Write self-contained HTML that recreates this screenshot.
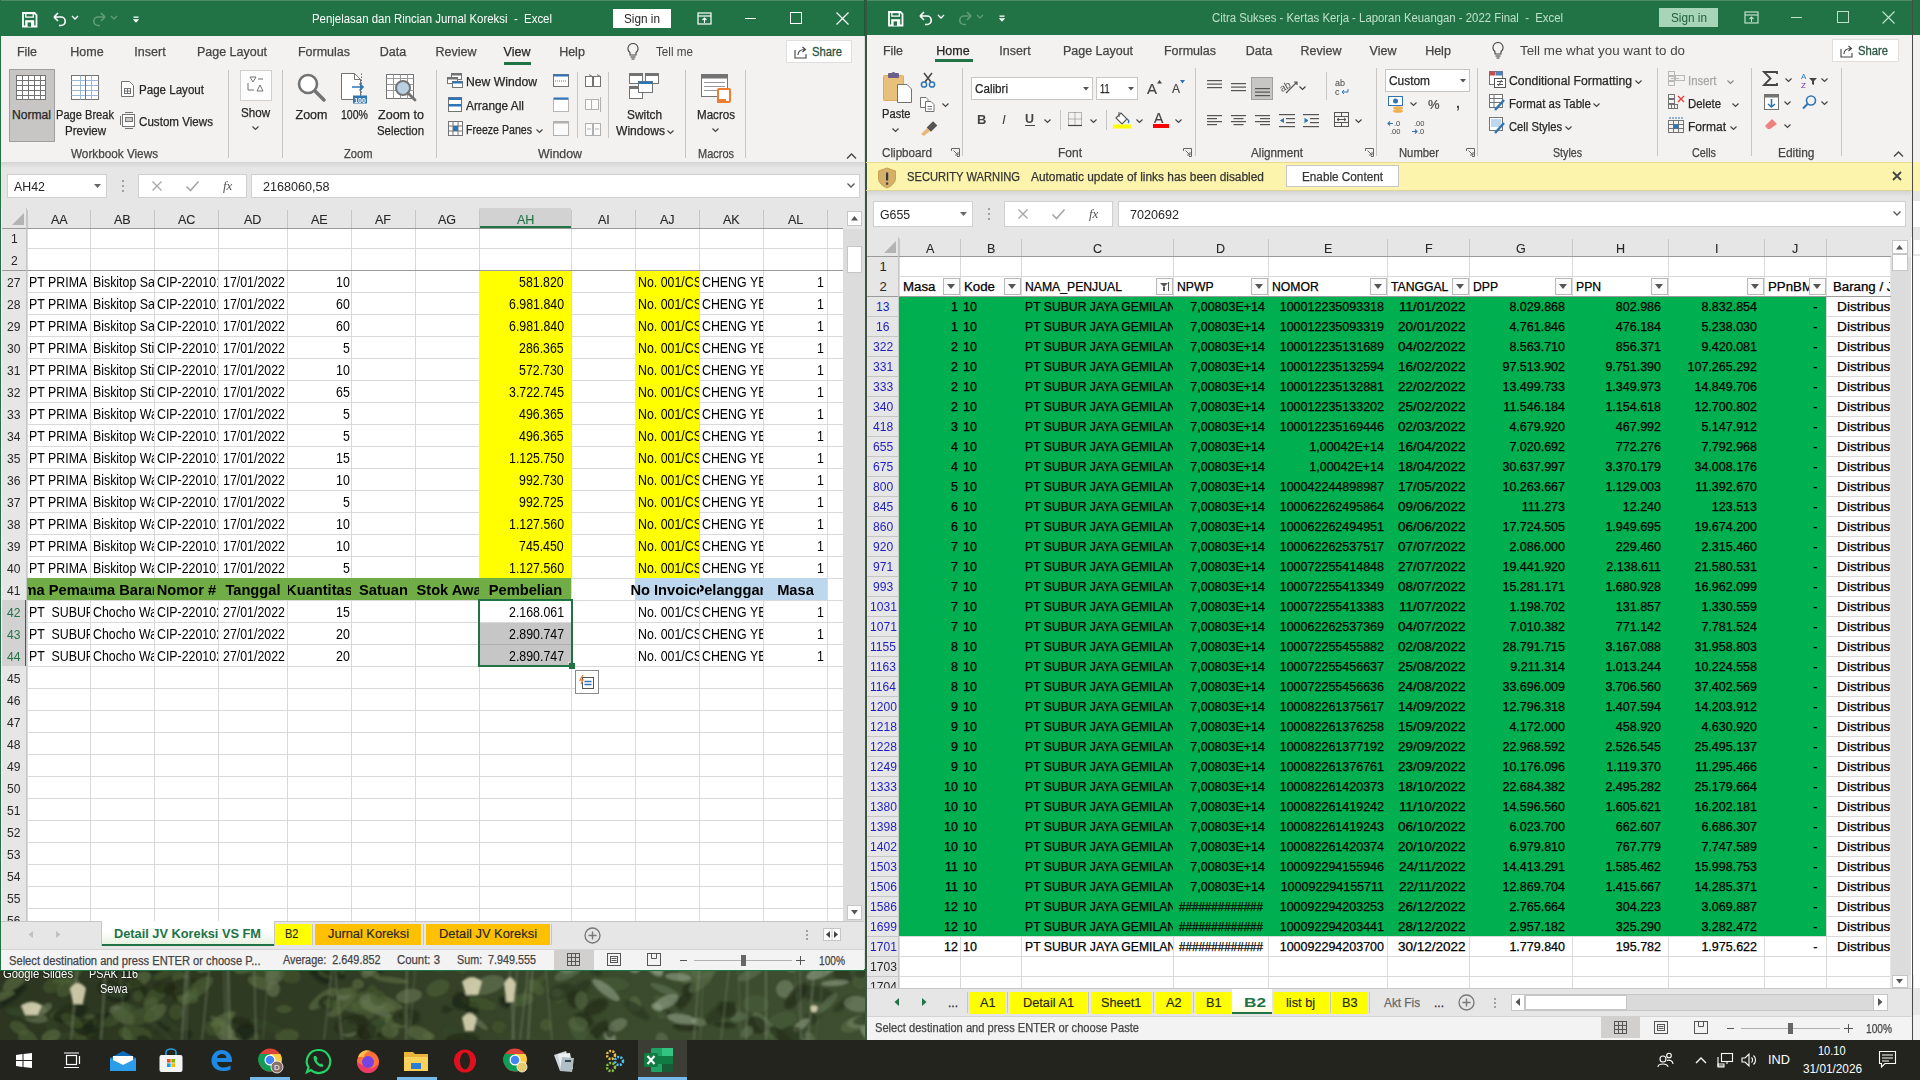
<!DOCTYPE html><html><head><meta charset="utf-8"><style>
html,body{margin:0;padding:0;width:1920px;height:1080px;overflow:hidden;background:#2b3a2a;}
body{position:relative;font-family:"Liberation Sans",sans-serif;}
div{position:absolute;box-sizing:border-box;}
.t{white-space:pre;line-height:1.149;}
svg{position:absolute;overflow:visible;}
</style></head><body>
<svg style="left:0;top:960px" width="870" height="80"><defs><filter id="bl"><feGaussianBlur stdDeviation="0.8"/></filter><linearGradient id="wg" x1="0" x2="1"><stop offset="0" stop-color="#2c3620"/><stop offset="0.4" stop-color="#313c24"/><stop offset="0.7" stop-color="#3a4a2c"/><stop offset="1" stop-color="#3e4e30"/></linearGradient></defs><rect width="870" height="80" fill="url(#wg)"/><g filter="url(#bl)"><ellipse cx="394" cy="47" rx="17" ry="6" fill="#5e7044" opacity="0.6" transform="rotate(36 394 47)"/><ellipse cx="165" cy="65" rx="11" ry="7" fill="#1e2814" opacity="0.6" transform="rotate(-41 165 65)"/><ellipse cx="264" cy="12" rx="16" ry="7" fill="#45582f" opacity="0.6" transform="rotate(10 264 12)"/><ellipse cx="345" cy="39" rx="15" ry="7" fill="#5e7044" opacity="0.6" transform="rotate(-48 345 39)"/><ellipse cx="460" cy="9" rx="7" ry="4" fill="#45582f" opacity="0.6" transform="rotate(28 460 9)"/><ellipse cx="284" cy="49" rx="8" ry="4" fill="#4e6238" opacity="0.6" transform="rotate(-0 284 49)"/><ellipse cx="576" cy="39" rx="9" ry="9" fill="#1c2614" opacity="0.6" transform="rotate(-42 576 39)"/><ellipse cx="221" cy="62" rx="12" ry="3" fill="#5e7044" opacity="0.6" transform="rotate(27 221 62)"/><ellipse cx="348" cy="68" rx="10" ry="9" fill="#6a7a58" opacity="0.6" transform="rotate(18 348 68)"/><ellipse cx="186" cy="75" rx="6" ry="5" fill="#182010" opacity="0.6" transform="rotate(-10 186 75)"/><ellipse cx="64" cy="52" rx="15" ry="5" fill="#45582f" opacity="0.6" transform="rotate(-19 64 52)"/><ellipse cx="13" cy="36" rx="17" ry="4" fill="#182010" opacity="0.6" transform="rotate(-40 13 36)"/><ellipse cx="52" cy="65" rx="7" ry="6" fill="#34462a" opacity="0.6" transform="rotate(1 52 65)"/><ellipse cx="857" cy="63" rx="10" ry="5" fill="#92a288" opacity="0.6" transform="rotate(-8 857 63)"/><ellipse cx="185" cy="25" rx="18" ry="8" fill="#4e6238" opacity="0.6" transform="rotate(50 185 25)"/><ellipse cx="17" cy="19" rx="18" ry="7" fill="#5e7044" opacity="0.6" transform="rotate(-40 17 19)"/><ellipse cx="861" cy="21" rx="8" ry="8" fill="#4a5e3a" opacity="0.6" transform="rotate(33 861 21)"/><ellipse cx="336" cy="11" rx="8" ry="7" fill="#45582f" opacity="0.6" transform="rotate(10 336 11)"/><ellipse cx="323" cy="39" rx="17" ry="6" fill="#5e7044" opacity="0.6" transform="rotate(-36 323 39)"/><ellipse cx="336" cy="52" rx="9" ry="4" fill="#5e7044" opacity="0.6" transform="rotate(-25 336 52)"/><ellipse cx="165" cy="60" rx="17" ry="4" fill="#34462a" opacity="0.6" transform="rotate(38 165 60)"/><ellipse cx="525" cy="37" rx="6" ry="3" fill="#4e6238" opacity="0.6" transform="rotate(-26 525 37)"/><ellipse cx="613" cy="24" rx="16" ry="7" fill="#4a5e3a" opacity="0.6" transform="rotate(2 613 24)"/><ellipse cx="808" cy="78" rx="7" ry="6" fill="#617556" opacity="0.6" transform="rotate(35 808 78)"/><ellipse cx="534" cy="26" rx="17" ry="4" fill="#45582f" opacity="0.6" transform="rotate(-43 534 26)"/><ellipse cx="358" cy="24" rx="6" ry="5" fill="#5e7044" opacity="0.6" transform="rotate(7 358 24)"/><ellipse cx="114" cy="32" rx="17" ry="9" fill="#182010" opacity="0.6" transform="rotate(23 114 32)"/><ellipse cx="454" cy="76" rx="13" ry="9" fill="#34462a" opacity="0.6" transform="rotate(41 454 76)"/><ellipse cx="610" cy="77" rx="5" ry="7" fill="#92a288" opacity="0.6" transform="rotate(-43 610 77)"/><ellipse cx="271" cy="15" rx="6" ry="6" fill="#4e6238" opacity="0.6" transform="rotate(24 271 15)"/><ellipse cx="783" cy="60" rx="14" ry="8" fill="#4a5e3a" opacity="0.6" transform="rotate(-15 783 60)"/><ellipse cx="596" cy="73" rx="16" ry="6" fill="#1c2614" opacity="0.6" transform="rotate(-47 596 73)"/><ellipse cx="435" cy="6" rx="14" ry="5" fill="#45582f" opacity="0.6" transform="rotate(11 435 6)"/><ellipse cx="70" cy="53" rx="18" ry="8" fill="#182010" opacity="0.6" transform="rotate(-17 70 53)"/><ellipse cx="813" cy="57" rx="11" ry="6" fill="#26331c" opacity="0.6" transform="rotate(-42 813 57)"/><ellipse cx="653" cy="7" rx="13" ry="6" fill="#7a8a6e" opacity="0.6" transform="rotate(46 653 7)"/><ellipse cx="98" cy="63" rx="14" ry="6" fill="#45582f" opacity="0.6" transform="rotate(-13 98 63)"/><ellipse cx="125" cy="51" rx="12" ry="8" fill="#4e6238" opacity="0.6" transform="rotate(16 125 51)"/><ellipse cx="384" cy="72" rx="9" ry="7" fill="#1e2814" opacity="0.6" transform="rotate(13 384 72)"/><ellipse cx="699" cy="62" rx="8" ry="4" fill="#7a8a6e" opacity="0.6" transform="rotate(8 699 62)"/><ellipse cx="275" cy="15" rx="11" ry="8" fill="#6a7a58" opacity="0.6" transform="rotate(-46 275 15)"/><ellipse cx="56" cy="79" rx="16" ry="4" fill="#34462a" opacity="0.6" transform="rotate(-22 56 79)"/><ellipse cx="186" cy="36" rx="13" ry="6" fill="#4e6238" opacity="0.6" transform="rotate(22 186 36)"/><ellipse cx="732" cy="52" rx="9" ry="8" fill="#4a5e3a" opacity="0.6" transform="rotate(37 732 52)"/><ellipse cx="36" cy="58" rx="12" ry="5" fill="#6a7a58" opacity="0.6" transform="rotate(6 36 58)"/><ellipse cx="558" cy="35" rx="7" ry="8" fill="#4e6238" opacity="0.6" transform="rotate(-26 558 35)"/><ellipse cx="123" cy="9" rx="13" ry="6" fill="#182010" opacity="0.6" transform="rotate(4 123 9)"/><ellipse cx="557" cy="33" rx="6" ry="4" fill="#6a7a58" opacity="0.6" transform="rotate(-2 557 33)"/><ellipse cx="155" cy="6" rx="11" ry="7" fill="#1e2814" opacity="0.6" transform="rotate(-27 155 6)"/><ellipse cx="677" cy="45" rx="17" ry="6" fill="#1c2614" opacity="0.6" transform="rotate(-34 677 45)"/><ellipse cx="738" cy="57" rx="8" ry="5" fill="#617556" opacity="0.6" transform="rotate(-11 738 57)"/><ellipse cx="392" cy="20" rx="17" ry="3" fill="#5e7044" opacity="0.6" transform="rotate(7 392 20)"/><ellipse cx="765" cy="65" rx="17" ry="6" fill="#617556" opacity="0.6" transform="rotate(48 765 65)"/><ellipse cx="86" cy="70" rx="15" ry="9" fill="#45582f" opacity="0.6" transform="rotate(-29 86 70)"/><ellipse cx="783" cy="79" rx="18" ry="6" fill="#1c2614" opacity="0.6" transform="rotate(43 783 79)"/><ellipse cx="228" cy="59" rx="5" ry="6" fill="#45582f" opacity="0.6" transform="rotate(-6 228 59)"/><ellipse cx="479" cy="63" rx="11" ry="3" fill="#6a7a58" opacity="0.6" transform="rotate(37 479 63)"/><ellipse cx="373" cy="8" rx="12" ry="7" fill="#1e2814" opacity="0.6" transform="rotate(-3 373 8)"/><ellipse cx="870" cy="73" rx="12" ry="7" fill="#92a288" opacity="0.6" transform="rotate(45 870 73)"/><ellipse cx="429" cy="76" rx="6" ry="4" fill="#5e7044" opacity="0.6" transform="rotate(6 429 76)"/><ellipse cx="723" cy="47" rx="7" ry="6" fill="#26331c" opacity="0.6" transform="rotate(-24 723 47)"/><ellipse cx="584" cy="77" rx="16" ry="7" fill="#4a5e3a" opacity="0.6" transform="rotate(35 584 77)"/><ellipse cx="843" cy="44" rx="12" ry="4" fill="#26331c" opacity="0.6" transform="rotate(-39 843 44)"/><ellipse cx="4" cy="33" rx="12" ry="3" fill="#34462a" opacity="0.6" transform="rotate(4 4 33)"/><ellipse cx="861" cy="14" rx="6" ry="4" fill="#26331c" opacity="0.6" transform="rotate(-4 861 14)"/><ellipse cx="801" cy="65" rx="10" ry="4" fill="#92a288" opacity="0.6" transform="rotate(-37 801 65)"/><ellipse cx="377" cy="66" rx="17" ry="6" fill="#4e6238" opacity="0.6" transform="rotate(-39 377 66)"/><ellipse cx="365" cy="7" rx="8" ry="7" fill="#45582f" opacity="0.6" transform="rotate(-46 365 7)"/><ellipse cx="135" cy="6" rx="9" ry="7" fill="#1e2814" opacity="0.6" transform="rotate(12 135 6)"/><ellipse cx="91" cy="60" rx="7" ry="6" fill="#4e6238" opacity="0.6" transform="rotate(22 91 60)"/><ellipse cx="610" cy="71" rx="5" ry="7" fill="#1c2614" opacity="0.6" transform="rotate(3 610 71)"/><ellipse cx="139" cy="20" rx="13" ry="7" fill="#5e7044" opacity="0.6" transform="rotate(-28 139 20)"/><ellipse cx="472" cy="49" rx="7" ry="8" fill="#182010" opacity="0.6" transform="rotate(31 472 49)"/><ellipse cx="785" cy="29" rx="9" ry="9" fill="#7a8a6e" opacity="0.6" transform="rotate(28 785 29)"/><ellipse cx="169" cy="12" rx="17" ry="4" fill="#45582f" opacity="0.6" transform="rotate(-24 169 12)"/><ellipse cx="84" cy="67" rx="10" ry="8" fill="#1e2814" opacity="0.6" transform="rotate(-30 84 67)"/><ellipse cx="546" cy="65" rx="6" ry="6" fill="#4e6238" opacity="0.6" transform="rotate(41 546 65)"/><ellipse cx="842" cy="14" rx="12" ry="8" fill="#26331c" opacity="0.6" transform="rotate(50 842 14)"/><ellipse cx="725" cy="65" rx="11" ry="3" fill="#1c2614" opacity="0.6" transform="rotate(5 725 65)"/><ellipse cx="448" cy="48" rx="7" ry="4" fill="#1e2814" opacity="0.6" transform="rotate(-33 448 48)"/><ellipse cx="137" cy="26" rx="14" ry="6" fill="#1e2814" opacity="0.6" transform="rotate(45 137 26)"/><ellipse cx="402" cy="62" rx="9" ry="6" fill="#5e7044" opacity="0.6" transform="rotate(-15 402 62)"/><ellipse cx="183" cy="33" rx="13" ry="3" fill="#1e2814" opacity="0.6" transform="rotate(-32 183 33)"/><ellipse cx="395" cy="60" rx="10" ry="4" fill="#1e2814" opacity="0.6" transform="rotate(-41 395 60)"/><ellipse cx="689" cy="29" rx="6" ry="8" fill="#1c2614" opacity="0.6" transform="rotate(41 689 29)"/><ellipse cx="817" cy="48" rx="7" ry="7" fill="#4a5e3a" opacity="0.6" transform="rotate(30 817 48)"/><ellipse cx="225" cy="73" rx="15" ry="8" fill="#6a7a58" opacity="0.6" transform="rotate(43 225 73)"/><ellipse cx="116" cy="30" rx="12" ry="5" fill="#34462a" opacity="0.6" transform="rotate(27 116 30)"/><ellipse cx="353" cy="59" rx="6" ry="5" fill="#34462a" opacity="0.6" transform="rotate(-40 353 59)"/><ellipse cx="773" cy="79" rx="17" ry="3" fill="#4a5e3a" opacity="0.6" transform="rotate(44 773 79)"/><ellipse cx="580" cy="30" rx="14" ry="6" fill="#26331c" opacity="0.6" transform="rotate(-42 580 30)"/><ellipse cx="448" cy="42" rx="8" ry="4" fill="#34462a" opacity="0.6" transform="rotate(48 448 42)"/><ellipse cx="20" cy="51" rx="15" ry="5" fill="#34462a" opacity="0.6" transform="rotate(0 20 51)"/><ellipse cx="662" cy="54" rx="5" ry="5" fill="#4a5e3a" opacity="0.6" transform="rotate(41 662 54)"/><ellipse cx="479" cy="43" rx="18" ry="6" fill="#45582f" opacity="0.6" transform="rotate(14 479 43)"/><ellipse cx="704" cy="11" rx="13" ry="8" fill="#5a6e4a" opacity="0.6" transform="rotate(-11 704 11)"/><ellipse cx="817" cy="34" rx="18" ry="8" fill="#26331c" opacity="0.6" transform="rotate(11 817 34)"/><ellipse cx="51" cy="76" rx="10" ry="6" fill="#5e7044" opacity="0.6" transform="rotate(-19 51 76)"/><ellipse cx="461" cy="41" rx="9" ry="9" fill="#182010" opacity="0.6" transform="rotate(22 461 41)"/><ellipse cx="258" cy="6" rx="8" ry="3" fill="#1e2814" opacity="0.6" transform="rotate(-9 258 6)"/><ellipse cx="595" cy="9" rx="9" ry="5" fill="#26331c" opacity="0.6" transform="rotate(49 595 9)"/><ellipse cx="822" cy="11" rx="17" ry="6" fill="#92a288" opacity="0.6" transform="rotate(-25 822 11)"/><ellipse cx="657" cy="8" rx="6" ry="8" fill="#92a288" opacity="0.6" transform="rotate(-36 657 8)"/><ellipse cx="835" cy="23" rx="14" ry="3" fill="#92a288" opacity="0.6" transform="rotate(-4 835 23)"/><ellipse cx="177" cy="9" rx="12" ry="4" fill="#34462a" opacity="0.6" transform="rotate(-36 177 9)"/><ellipse cx="363" cy="50" rx="13" ry="7" fill="#4e6238" opacity="0.6" transform="rotate(28 363 50)"/><ellipse cx="462" cy="80" rx="17" ry="7" fill="#1e2814" opacity="0.6" transform="rotate(-2 462 80)"/><ellipse cx="438" cy="28" rx="12" ry="8" fill="#4e6238" opacity="0.6" transform="rotate(-23 438 28)"/><ellipse cx="596" cy="47" rx="13" ry="7" fill="#1c2614" opacity="0.6" transform="rotate(-26 596 47)"/><ellipse cx="828" cy="43" rx="13" ry="4" fill="#617556" opacity="0.6" transform="rotate(-46 828 43)"/><ellipse cx="53" cy="25" rx="11" ry="7" fill="#45582f" opacity="0.6" transform="rotate(-28 53 25)"/><ellipse cx="242" cy="62" rx="17" ry="4" fill="#1e2814" opacity="0.6" transform="rotate(13 242 62)"/><ellipse cx="325" cy="41" rx="8" ry="5" fill="#182010" opacity="0.6" transform="rotate(-37 325 41)"/><ellipse cx="757" cy="65" rx="11" ry="8" fill="#1c2614" opacity="0.6" transform="rotate(27 757 65)"/><ellipse cx="185" cy="37" rx="8" ry="8" fill="#4e6238" opacity="0.6" transform="rotate(-35 185 37)"/><ellipse cx="728" cy="50" rx="9" ry="8" fill="#1c2614" opacity="0.6" transform="rotate(42 728 50)"/><ellipse cx="372" cy="33" rx="6" ry="8" fill="#45582f" opacity="0.6" transform="rotate(4 372 33)"/><ellipse cx="376" cy="48" rx="16" ry="6" fill="#6a7a58" opacity="0.6" transform="rotate(28 376 48)"/><ellipse cx="66" cy="21" rx="14" ry="3" fill="#4e6238" opacity="0.6" transform="rotate(-1 66 21)"/><ellipse cx="665" cy="30" rx="16" ry="4" fill="#617556" opacity="0.6" transform="rotate(23 665 30)"/><ellipse cx="319" cy="14" rx="14" ry="6" fill="#182010" opacity="0.6" transform="rotate(41 319 14)"/><ellipse cx="381" cy="65" rx="9" ry="5" fill="#34462a" opacity="0.6" transform="rotate(47 381 65)"/><ellipse cx="635" cy="44" rx="6" ry="8" fill="#5a6e4a" opacity="0.6" transform="rotate(-14 635 44)"/><ellipse cx="344" cy="34" rx="8" ry="6" fill="#6a7a58" opacity="0.6" transform="rotate(-11 344 34)"/><ellipse cx="135" cy="49" rx="7" ry="4" fill="#34462a" opacity="0.6" transform="rotate(38 135 49)"/><ellipse cx="245" cy="7" rx="12" ry="6" fill="#5e7044" opacity="0.6" transform="rotate(-20 245 7)"/><ellipse cx="19" cy="68" rx="10" ry="6" fill="#4e6238" opacity="0.6" transform="rotate(29 19 68)"/><ellipse cx="73" cy="11" rx="15" ry="8" fill="#45582f" opacity="0.6" transform="rotate(-47 73 11)"/><ellipse cx="569" cy="12" rx="16" ry="6" fill="#617556" opacity="0.6" transform="rotate(-28 569 12)"/><ellipse cx="666" cy="44" rx="15" ry="5" fill="#4a5e3a" opacity="0.6" transform="rotate(31 666 44)"/><ellipse cx="290" cy="15" rx="11" ry="8" fill="#45582f" opacity="0.6" transform="rotate(21 290 15)"/><ellipse cx="796" cy="36" rx="16" ry="7" fill="#1c2614" opacity="0.6" transform="rotate(-50 796 36)"/><ellipse cx="329" cy="12" rx="11" ry="6" fill="#45582f" opacity="0.6" transform="rotate(2 329 12)"/><ellipse cx="618" cy="65" rx="10" ry="6" fill="#7a8a6e" opacity="0.6" transform="rotate(-25 618 65)"/><ellipse cx="141" cy="53" rx="14" ry="5" fill="#34462a" opacity="0.6" transform="rotate(-8 141 53)"/><ellipse cx="254" cy="78" rx="6" ry="5" fill="#45582f" opacity="0.6" transform="rotate(-20 254 78)"/><ellipse cx="135" cy="74" rx="17" ry="8" fill="#45582f" opacity="0.6" transform="rotate(8 135 74)"/><ellipse cx="791" cy="8" rx="6" ry="4" fill="#7a8a6e" opacity="0.6" transform="rotate(9 791 8)"/><ellipse cx="522" cy="40" rx="12" ry="6" fill="#4e6238" opacity="0.6" transform="rotate(-10 522 40)"/><ellipse cx="792" cy="75" rx="13" ry="9" fill="#26331c" opacity="0.6" transform="rotate(-2 792 75)"/><ellipse cx="227" cy="72" rx="17" ry="5" fill="#5e7044" opacity="0.6" transform="rotate(27 227 72)"/><ellipse cx="80" cy="70" rx="10" ry="4" fill="#1e2814" opacity="0.6" transform="rotate(30 80 70)"/><ellipse cx="335" cy="45" rx="12" ry="5" fill="#45582f" opacity="0.6" transform="rotate(16 335 45)"/><ellipse cx="207" cy="6" rx="11" ry="5" fill="#6a7a58" opacity="0.6" transform="rotate(-25 207 6)"/><ellipse cx="367" cy="71" rx="10" ry="8" fill="#1e2814" opacity="0.6" transform="rotate(-24 367 71)"/><ellipse cx="756" cy="44" rx="13" ry="9" fill="#4a5e3a" opacity="0.6" transform="rotate(2 756 44)"/><ellipse cx="46" cy="48" rx="7" ry="4" fill="#6a7a58" opacity="0.6" transform="rotate(-35 46 48)"/><ellipse cx="112" cy="31" rx="13" ry="6" fill="#34462a" opacity="0.6" transform="rotate(19 112 31)"/><ellipse cx="72" cy="61" rx="12" ry="6" fill="#45582f" opacity="0.6" transform="rotate(29 72 61)"/><ellipse cx="363" cy="74" rx="6" ry="8" fill="#1e2814" opacity="0.6" transform="rotate(-46 363 74)"/><ellipse cx="359" cy="42" rx="17" ry="9" fill="#4e6238" opacity="0.6" transform="rotate(-19 359 42)"/><ellipse cx="66" cy="28" rx="11" ry="7" fill="#4e6238" opacity="0.6" transform="rotate(-43 66 28)"/><ellipse cx="122" cy="55" rx="14" ry="7" fill="#6a7a58" opacity="0.6" transform="rotate(33 122 55)"/><ellipse cx="569" cy="6" rx="10" ry="7" fill="#7a8a6e" opacity="0.6" transform="rotate(-21 569 6)"/><ellipse cx="99" cy="63" rx="16" ry="8" fill="#182010" opacity="0.6" transform="rotate(-29 99 63)"/><ellipse cx="536" cy="27" rx="10" ry="6" fill="#4e6238" opacity="0.6" transform="rotate(45 536 27)"/><ellipse cx="657" cy="47" rx="6" ry="4" fill="#92a288" opacity="0.6" transform="rotate(23 657 47)"/><ellipse cx="287" cy="76" rx="12" ry="7" fill="#4e6238" opacity="0.6" transform="rotate(-5 287 76)"/><ellipse cx="333" cy="13" rx="13" ry="4" fill="#182010" opacity="0.6" transform="rotate(21 333 13)"/><ellipse cx="156" cy="35" rx="16" ry="7" fill="#45582f" opacity="0.6" transform="rotate(-40 156 35)"/><ellipse cx="28" cy="79" rx="11" ry="8" fill="#4e6238" opacity="0.6" transform="rotate(42 28 79)"/><ellipse cx="372" cy="43" rx="13" ry="8" fill="#6a7a58" opacity="0.6" transform="rotate(19 372 43)"/><ellipse cx="420" cy="74" rx="13" ry="7" fill="#5e7044" opacity="0.6" transform="rotate(20 420 74)"/><ellipse cx="854" cy="64" rx="14" ry="7" fill="#5a6e4a" opacity="0.6" transform="rotate(-24 854 64)"/><ellipse cx="164" cy="28" rx="11" ry="6" fill="#1e2814" opacity="0.6" transform="rotate(1 164 28)"/><ellipse cx="686" cy="67" rx="13" ry="4" fill="#1c2614" opacity="0.6" transform="rotate(4 686 67)"/><ellipse cx="260" cy="23" rx="13" ry="6" fill="#5e7044" opacity="0.6" transform="rotate(21 260 23)"/><ellipse cx="858" cy="44" rx="14" ry="8" fill="#7a8a6e" opacity="0.6" transform="rotate(7 858 44)"/><ellipse cx="23" cy="54" rx="15" ry="4" fill="#34462a" opacity="0.6" transform="rotate(8 23 54)"/><ellipse cx="606" cy="30" rx="17" ry="5" fill="#92a288" opacity="0.6" transform="rotate(38 606 30)"/><ellipse cx="393" cy="60" rx="8" ry="6" fill="#5e7044" opacity="0.6" transform="rotate(6 393 60)"/><ellipse cx="488" cy="25" rx="17" ry="9" fill="#6a7a58" opacity="0.6" transform="rotate(-17 488 25)"/><ellipse cx="127" cy="75" rx="5" ry="7" fill="#4e6238" opacity="0.6" transform="rotate(-26 127 75)"/><ellipse cx="499" cy="67" rx="7" ry="6" fill="#45582f" opacity="0.6" transform="rotate(-5 499 67)"/><ellipse cx="351" cy="64" rx="17" ry="9" fill="#1e2814" opacity="0.6" transform="rotate(-19 351 64)"/><ellipse cx="584" cy="60" rx="10" ry="7" fill="#1c2614" opacity="0.6" transform="rotate(26 584 60)"/><ellipse cx="138" cy="36" rx="5" ry="6" fill="#45582f" opacity="0.6" transform="rotate(7 138 36)"/><ellipse cx="151" cy="44" rx="8" ry="6" fill="#4e6238" opacity="0.6" transform="rotate(-45 151 44)"/><ellipse cx="682" cy="59" rx="15" ry="5" fill="#92a288" opacity="0.6" transform="rotate(10 682 59)"/><ellipse cx="409" cy="36" rx="13" ry="7" fill="#6a7a58" opacity="0.6" transform="rotate(-9 409 36)"/><ellipse cx="245" cy="72" rx="11" ry="8" fill="#182010" opacity="0.6" transform="rotate(-9 245 72)"/><ellipse cx="378" cy="47" rx="17" ry="6" fill="#5e7044" opacity="0.6" transform="rotate(2 378 47)"/><ellipse cx="366" cy="7" rx="17" ry="5" fill="#5e7044" opacity="0.6" transform="rotate(40 366 7)"/><ellipse cx="637" cy="50" rx="15" ry="5" fill="#26331c" opacity="0.6" transform="rotate(38 637 50)"/><ellipse cx="213" cy="68" rx="8" ry="8" fill="#45582f" opacity="0.6" transform="rotate(-2 213 68)"/><ellipse cx="92" cy="73" rx="12" ry="7" fill="#1e2814" opacity="0.6" transform="rotate(38 92 73)"/><ellipse cx="869" cy="60" rx="16" ry="5" fill="#26331c" opacity="0.6" transform="rotate(-8 869 60)"/><ellipse cx="701" cy="22" rx="15" ry="6" fill="#5a6e4a" opacity="0.6" transform="rotate(-40 701 22)"/><ellipse cx="689" cy="14" rx="12" ry="9" fill="#5a6e4a" opacity="0.6" transform="rotate(-20 689 14)"/><ellipse cx="634" cy="7" rx="7" ry="6" fill="#92a288" opacity="0.6" transform="rotate(32 634 7)"/><ellipse cx="346" cy="32" rx="13" ry="3" fill="#45582f" opacity="0.6" transform="rotate(-5 346 32)"/><ellipse cx="273" cy="29" rx="7" ry="8" fill="#6a7a58" opacity="0.6" transform="rotate(-3 273 29)"/><ellipse cx="180" cy="27" rx="17" ry="8" fill="#1e2814" opacity="0.6" transform="rotate(-18 180 27)"/><ellipse cx="747" cy="72" rx="5" ry="7" fill="#617556" opacity="0.6" transform="rotate(50 747 72)"/><ellipse cx="176" cy="52" rx="7" ry="8" fill="#45582f" opacity="0.6" transform="rotate(15 176 52)"/><ellipse cx="266" cy="66" rx="17" ry="5" fill="#34462a" opacity="0.6" transform="rotate(21 266 66)"/><ellipse cx="117" cy="57" rx="17" ry="6" fill="#45582f" opacity="0.6" transform="rotate(-33 117 57)"/><ellipse cx="750" cy="14" rx="14" ry="5" fill="#617556" opacity="0.6" transform="rotate(-26 750 14)"/><ellipse cx="578" cy="64" rx="10" ry="7" fill="#5a6e4a" opacity="0.6" transform="rotate(9 578 64)"/><ellipse cx="199" cy="28" rx="17" ry="7" fill="#4e6238" opacity="0.6" transform="rotate(-37 199 28)"/><ellipse cx="581" cy="40" rx="6" ry="9" fill="#5a6e4a" opacity="0.6" transform="rotate(3 581 40)"/><ellipse cx="39" cy="50" rx="9" ry="5" fill="#6a7a58" opacity="0.6" transform="rotate(7 39 50)"/><ellipse cx="143" cy="79" rx="7" ry="4" fill="#182010" opacity="0.6" transform="rotate(5 143 79)"/><ellipse cx="162" cy="72" rx="18" ry="3" fill="#34462a" opacity="0.6" transform="rotate(42 162 72)"/><ellipse cx="509" cy="5" rx="17" ry="3" fill="#45582f" opacity="0.6" transform="rotate(6 509 5)"/><ellipse cx="561" cy="32" rx="14" ry="8" fill="#26331c" opacity="0.6" transform="rotate(-21 561 32)"/><ellipse cx="720" cy="53" rx="18" ry="7" fill="#26331c" opacity="0.6" transform="rotate(-33 720 53)"/><ellipse cx="678" cy="17" rx="13" ry="4" fill="#92a288" opacity="0.6" transform="rotate(5 678 17)"/><ellipse cx="223" cy="59" rx="14" ry="5" fill="#5e7044" opacity="0.6" transform="rotate(-28 223 59)"/><ellipse cx="505" cy="42" rx="5" ry="7" fill="#182010" opacity="0.6" transform="rotate(-45 505 42)"/><ellipse cx="390" cy="71" rx="9" ry="7" fill="#5e7044" opacity="0.6" transform="rotate(-0 390 71)"/><ellipse cx="378" cy="38" rx="8" ry="8" fill="#45582f" opacity="0.6" transform="rotate(-39 378 38)"/><ellipse cx="155" cy="53" rx="13" ry="7" fill="#5e7044" opacity="0.6" transform="rotate(-35 155 53)"/><ellipse cx="271" cy="8" rx="9" ry="7" fill="#5e7044" opacity="0.6" transform="rotate(28 271 8)"/><ellipse cx="666" cy="42" rx="13" ry="6" fill="#92a288" opacity="0.6" transform="rotate(-25 666 42)"/><ellipse cx="139" cy="57" rx="16" ry="8" fill="#45582f" opacity="0.6" transform="rotate(-18 139 57)"/><ellipse cx="406" cy="57" rx="14" ry="9" fill="#1e2814" opacity="0.6" transform="rotate(-1 406 57)"/><ellipse cx="662" cy="79" rx="7" ry="6" fill="#617556" opacity="0.6" transform="rotate(49 662 79)"/><ellipse cx="3" cy="36" rx="12" ry="4" fill="#5e7044" opacity="0.6" transform="rotate(-20 3 36)"/><ellipse cx="369" cy="11" rx="5" ry="9" fill="#6a7a58" opacity="0.6" transform="rotate(48 369 11)"/><line x1="533" y1="0" x2="528" y2="80" stroke="#7f8d72" stroke-width="2.3" opacity="0.45"/><line x1="210" y1="0" x2="202" y2="80" stroke="#7f8d72" stroke-width="1.8" opacity="0.45"/><line x1="269" y1="0" x2="263" y2="80" stroke="#55654a" stroke-width="1.7" opacity="0.45"/><line x1="509" y1="0" x2="514" y2="80" stroke="#6d7d60" stroke-width="2.4" opacity="0.45"/><line x1="793" y1="0" x2="802" y2="80" stroke="#55654a" stroke-width="1.8" opacity="0.45"/><line x1="748" y1="0" x2="746" y2="80" stroke="#6d7d60" stroke-width="2.7" opacity="0.45"/><line x1="187" y1="0" x2="182" y2="80" stroke="#7f8d72" stroke-width="2.7" opacity="0.45"/><line x1="700" y1="0" x2="694" y2="80" stroke="#7f8d72" stroke-width="1.8" opacity="0.45"/><line x1="407" y1="0" x2="406" y2="80" stroke="#7f8d72" stroke-width="2.2" opacity="0.45"/><line x1="545" y1="0" x2="552" y2="80" stroke="#6d7d60" stroke-width="1.8" opacity="0.45"/><line x1="333" y1="0" x2="324" y2="80" stroke="#6d7d60" stroke-width="1.9" opacity="0.45"/><line x1="825" y1="0" x2="816" y2="80" stroke="#55654a" stroke-width="1.8" opacity="0.45"/><line x1="228" y1="0" x2="230" y2="80" stroke="#7f8d72" stroke-width="2.5" opacity="0.45"/><line x1="189" y1="0" x2="186" y2="80" stroke="#6d7d60" stroke-width="1.7" opacity="0.45"/><line x1="815" y1="0" x2="808" y2="80" stroke="#7f8d72" stroke-width="1.9" opacity="0.45"/><line x1="730" y1="0" x2="721" y2="80" stroke="#6d7d60" stroke-width="2.0" opacity="0.45"/><line x1="334" y1="0" x2="342" y2="80" stroke="#6d7d60" stroke-width="2.1" opacity="0.45"/><line x1="223" y1="0" x2="226" y2="80" stroke="#55654a" stroke-width="2.0" opacity="0.45"/><line x1="529" y1="0" x2="520" y2="80" stroke="#7f8d72" stroke-width="1.7" opacity="0.45"/><line x1="518" y1="0" x2="512" y2="80" stroke="#6d7d60" stroke-width="2.1" opacity="0.45"/><line x1="416" y1="0" x2="409" y2="80" stroke="#55654a" stroke-width="2.6" opacity="0.45"/><line x1="227" y1="0" x2="226" y2="80" stroke="#55654a" stroke-width="2.1" opacity="0.45"/><line x1="766" y1="0" x2="766" y2="80" stroke="#7f8d72" stroke-width="2.2" opacity="0.45"/><line x1="119" y1="0" x2="126" y2="80" stroke="#55654a" stroke-width="1.8" opacity="0.45"/><line x1="254" y1="0" x2="256" y2="80" stroke="#7f8d72" stroke-width="1.7" opacity="0.45"/><line x1="738" y1="0" x2="741" y2="80" stroke="#55654a" stroke-width="2.3" opacity="0.45"/><line x1="704" y1="0" x2="700" y2="80" stroke="#55654a" stroke-width="2.5" opacity="0.45"/><line x1="800" y1="0" x2="801" y2="80" stroke="#6d7d60" stroke-width="2.0" opacity="0.45"/><line x1="106" y1="0" x2="101" y2="80" stroke="#7f8d72" stroke-width="2.4" opacity="0.45"/><line x1="78" y1="0" x2="71" y2="80" stroke="#7f8d72" stroke-width="2.2" opacity="0.45"/><path d="M21 45.2 Q31.5 38.2 42 45.2 L37.8 55 L25.2 55 Z" fill="#d9d5b4" opacity="0.9"/><path d="M70 28.6 Q78.0 17.6 86 28.6 L82.8 44 L73.2 44 Z" fill="#d9d5b4" opacity="0.9"/><path d="M462 21.7 Q472.0 12.2 482 21.7 L478.0 35 L466.0 35 Z" fill="#d9d5b4" opacity="0.9"/><path d="M504 23.8 Q510.0 10.8 516 23.8 L513.6 42 L506.4 42 Z" fill="#d9d5b4" opacity="0.9"/><path d="M462 57.7 Q469.5 48.2 477 57.7 L474.0 71 L465.0 71 Z" fill="#d9d5b4" opacity="0.9"/><path d="M810 47.1 Q814.0 43.6 818 47.1 L816.4 52 L811.6 52 Z" fill="#d9d5b4" opacity="0.9"/></g></svg>
<div class="t" style="left:2.50px;top:968.14px;font-size:12px;color:#ffffff;transform:scaleX(0.9369);transform-origin:0 0;text-shadow:0 0 2px #000;">Google Slides</div>
<div class="t" style="left:89.00px;top:968.14px;font-size:12px;color:#ffffff;transform:scaleX(0.8994);transform-origin:0 0;text-shadow:0 0 2px #000;">PSAK 116</div>
<div class="t" style="left:99.50px;top:983.14px;font-size:12px;color:#ffffff;transform:scaleX(0.9161);transform-origin:0 0;text-shadow:0 0 2px #000;">Sewa</div>
<div style="left:0px;top:1040px;width:1920px;height:40px;background:#22241d;"></div>
<div style="left:0px;top:0px;width:866px;height:36px;background:#217346;"></div>
<div style="left:0px;top:0px;width:866px;height:1px;background:#4d8b63;"></div>
<div style="left:0px;top:36px;width:866px;height:32px;background:#f3f2f1;"></div>
<div style="left:0px;top:68px;width:866px;height:95px;background:#f3f2f1;"></div>
<div style="left:0px;top:162px;width:866px;height:46px;background:#e6e6e6;"></div>
<div style="left:0px;top:208px;width:866px;height:713px;background:#ffffff;"></div>
<div style="left:0px;top:921px;width:866px;height:29px;background:#e6e6e6;"></div>
<div style="left:0px;top:950px;width:866px;height:21px;background:#f3f2f1;"></div>
<div style="left:0px;top:0px;width:1px;height:971px;background:#217346;"></div>
<div style="left:864px;top:36px;width:1px;height:935px;background:#dcdcdc;"></div>
<div style="left:864px;top:0px;width:2px;height:36px;background:#1d5a36;"></div>
<div style="left:0px;top:969px;width:866px;height:2px;background:#217346;"></div>
<div style="left:866px;top:0px;width:1046px;height:35px;background:#217346;"></div>
<div style="left:866px;top:0px;width:1046px;height:1px;background:#4d8b63;"></div>
<div style="left:866px;top:35px;width:1046px;height:32px;background:#f3f2f1;"></div>
<div style="left:866px;top:67px;width:1046px;height:95px;background:#f3f2f1;"></div>
<div style="left:866px;top:162px;width:1046px;height:29px;background:#fcf4ad;"></div>
<div style="left:866px;top:191px;width:1046px;height:46px;background:#e6e6e6;"></div>
<div style="left:866px;top:237px;width:1046px;height:751px;background:#ffffff;"></div>
<div style="left:866px;top:988px;width:1046px;height:29px;background:#e6e6e6;"></div>
<div style="left:866px;top:1017px;width:1046px;height:23px;background:#f3f2f1;"></div>
<div style="left:865px;top:0px;width:2px;height:1040px;background:#3a5540;"></div>
<div style="left:1913px;top:0px;width:7px;height:35px;background:#217346;"></div>
<div style="left:1913px;top:35px;width:7px;height:127px;background:#f3f2f1;"></div>
<div style="left:1913px;top:162px;width:7px;height:29px;background:#fcf4ad;"></div>
<div style="left:1913px;top:191px;width:7px;height:46px;background:#e6e6e6;"></div>
<div style="left:1913px;top:201px;width:7px;height:26px;background:#ffffff;"></div>
<div style="left:1913px;top:237px;width:7px;height:751px;background:#e6e6e6;"></div>
<div style="left:1914px;top:240px;width:6px;height:14px;background:#ffffff;"></div>
<div style="left:1913px;top:256px;width:7px;height:719px;background:#ffffff;"></div>
<div style="left:1914px;top:975px;width:6px;height:13px;background:#ffffff;"></div>
<div style="left:1913px;top:988px;width:7px;height:27px;background:#e6e6e6;"></div>
<div style="left:1913px;top:1015px;width:7px;height:25px;background:#f3f3f3;"></div>
<div style="left:2px;top:208px;width:841px;height:20px;background:#e6e6e6;"></div>
<div style="left:2px;top:228px;width:25px;height:693px;background:#e6e6e6;"></div>
<svg style="left:12px;top:213px" width="13" height="13"><polygon points="12,0 12,12 0,12" fill="#b4b4b4"/></svg>
<div style="left:843px;top:208px;width:21px;height:713px;background:#e6e6e6;"></div>
<div style="left:479px;top:208px;width:92px;height:20px;background:#d2d2d2;"></div>
<div style="left:479px;top:226px;width:92px;height:2px;background:#217346;"></div>
<div style="left:2px;top:600px;width:25px;height:66px;background:#d2d2d2;"></div>
<div style="left:25px;top:600px;width:2px;height:66px;background:#217346;"></div>
<div style="left:27px;top:228px;width:816px;height:693px;background:#ffffff;"></div>
<div style="left:479px;top:270px;width:92px;height:308px;background:#ffff00;"></div>
<div style="left:635px;top:270px;width:64px;height:308px;background:#ffff00;"></div>
<div style="left:27px;top:248px;width:816px;height:1px;background:#d9d9d9;"></div>
<div style="left:27px;top:270px;width:816px;height:1px;background:#d9d9d9;"></div>
<div style="left:27px;top:292px;width:816px;height:1px;background:#d9d9d9;"></div>
<div style="left:27px;top:314px;width:816px;height:1px;background:#d9d9d9;"></div>
<div style="left:27px;top:336px;width:816px;height:1px;background:#d9d9d9;"></div>
<div style="left:27px;top:358px;width:816px;height:1px;background:#d9d9d9;"></div>
<div style="left:27px;top:380px;width:816px;height:1px;background:#d9d9d9;"></div>
<div style="left:27px;top:402px;width:816px;height:1px;background:#d9d9d9;"></div>
<div style="left:27px;top:424px;width:816px;height:1px;background:#d9d9d9;"></div>
<div style="left:27px;top:446px;width:816px;height:1px;background:#d9d9d9;"></div>
<div style="left:27px;top:468px;width:816px;height:1px;background:#d9d9d9;"></div>
<div style="left:27px;top:490px;width:816px;height:1px;background:#d9d9d9;"></div>
<div style="left:27px;top:512px;width:816px;height:1px;background:#d9d9d9;"></div>
<div style="left:27px;top:534px;width:816px;height:1px;background:#d9d9d9;"></div>
<div style="left:27px;top:556px;width:816px;height:1px;background:#d9d9d9;"></div>
<div style="left:27px;top:578px;width:816px;height:1px;background:#d9d9d9;"></div>
<div style="left:27px;top:600px;width:816px;height:1px;background:#d9d9d9;"></div>
<div style="left:27px;top:622px;width:816px;height:1px;background:#d9d9d9;"></div>
<div style="left:27px;top:644px;width:816px;height:1px;background:#d9d9d9;"></div>
<div style="left:27px;top:666px;width:816px;height:1px;background:#d9d9d9;"></div>
<div style="left:27px;top:688px;width:816px;height:1px;background:#d9d9d9;"></div>
<div style="left:27px;top:710px;width:816px;height:1px;background:#d9d9d9;"></div>
<div style="left:27px;top:732px;width:816px;height:1px;background:#d9d9d9;"></div>
<div style="left:27px;top:754px;width:816px;height:1px;background:#d9d9d9;"></div>
<div style="left:27px;top:776px;width:816px;height:1px;background:#d9d9d9;"></div>
<div style="left:27px;top:798px;width:816px;height:1px;background:#d9d9d9;"></div>
<div style="left:27px;top:820px;width:816px;height:1px;background:#d9d9d9;"></div>
<div style="left:27px;top:842px;width:816px;height:1px;background:#d9d9d9;"></div>
<div style="left:27px;top:864px;width:816px;height:1px;background:#d9d9d9;"></div>
<div style="left:27px;top:886px;width:816px;height:1px;background:#d9d9d9;"></div>
<div style="left:27px;top:908px;width:816px;height:1px;background:#d9d9d9;"></div>
<div style="left:27px;top:228px;width:1px;height:693px;background:#d9d9d9;"></div>
<div style="left:90px;top:228px;width:1px;height:693px;background:#d9d9d9;"></div>
<div style="left:154px;top:228px;width:1px;height:693px;background:#d9d9d9;"></div>
<div style="left:218px;top:228px;width:1px;height:693px;background:#d9d9d9;"></div>
<div style="left:287px;top:228px;width:1px;height:693px;background:#d9d9d9;"></div>
<div style="left:351px;top:228px;width:1px;height:693px;background:#d9d9d9;"></div>
<div style="left:415px;top:228px;width:1px;height:693px;background:#d9d9d9;"></div>
<div style="left:479px;top:228px;width:1px;height:693px;background:#d9d9d9;"></div>
<div style="left:571px;top:228px;width:1px;height:693px;background:#d9d9d9;"></div>
<div style="left:635px;top:228px;width:1px;height:693px;background:#d9d9d9;"></div>
<div style="left:699px;top:228px;width:1px;height:693px;background:#d9d9d9;"></div>
<div style="left:763px;top:228px;width:1px;height:693px;background:#d9d9d9;"></div>
<div style="left:827px;top:228px;width:1px;height:693px;background:#d9d9d9;"></div>
<div style="left:843px;top:228px;width:1px;height:693px;background:#d9d9d9;"></div>
<div style="left:27px;top:210px;width:1px;height:18px;background:#c6c6c6;"></div>
<div style="left:90px;top:210px;width:1px;height:18px;background:#c6c6c6;"></div>
<div style="left:154px;top:210px;width:1px;height:18px;background:#c6c6c6;"></div>
<div style="left:218px;top:210px;width:1px;height:18px;background:#c6c6c6;"></div>
<div style="left:287px;top:210px;width:1px;height:18px;background:#c6c6c6;"></div>
<div style="left:351px;top:210px;width:1px;height:18px;background:#c6c6c6;"></div>
<div style="left:415px;top:210px;width:1px;height:18px;background:#c6c6c6;"></div>
<div style="left:479px;top:210px;width:1px;height:18px;background:#c6c6c6;"></div>
<div style="left:571px;top:210px;width:1px;height:18px;background:#c6c6c6;"></div>
<div style="left:635px;top:210px;width:1px;height:18px;background:#c6c6c6;"></div>
<div style="left:699px;top:210px;width:1px;height:18px;background:#c6c6c6;"></div>
<div style="left:763px;top:210px;width:1px;height:18px;background:#c6c6c6;"></div>
<div style="left:827px;top:210px;width:1px;height:18px;background:#c6c6c6;"></div>
<div style="left:2px;top:228px;width:841px;height:1px;background:#9b9b9b;"></div>
<div style="left:2px;top:270px;width:841px;height:1px;background:#9b9b9b;"></div>
<div style="left:26px;top:208px;width:1px;height:713px;background:#c6c6c6;"></div>
<div style="left:27px;top:578px;width:544px;height:22px;background:#70ad47;"></div>
<div style="left:635px;top:578px;width:192px;height:22px;background:#bdd7ee;"></div>
<div style="left:479px;top:271px;width:92px;height:307px;background:#ffff00;"></div>
<div style="left:635px;top:271px;width:64px;height:307px;background:#ffff00;"></div>
<div style="left:480px;top:623px;width:91px;height:43px;background:#c6c6c6;"></div>
<div style="left:480px;top:644px;width:91px;height:1px;background:#b0b0b0;"></div>
<div class="t" style="left:50.63px;top:212.28px;font-size:13.5px;color:#262626;transform:scaleX(0.9300);transform-origin:0 0;-webkit-text-stroke:0.1px #262626;">AA</div>
<div class="t" style="left:114.13px;top:212.28px;font-size:13.5px;color:#262626;transform:scaleX(0.9300);transform-origin:0 0;-webkit-text-stroke:0.1px #262626;">AB</div>
<div class="t" style="left:177.78px;top:212.28px;font-size:13.5px;color:#262626;transform:scaleX(0.9300);transform-origin:0 0;-webkit-text-stroke:0.1px #262626;">AC</div>
<div class="t" style="left:244.28px;top:212.28px;font-size:13.5px;color:#262626;transform:scaleX(0.9300);transform-origin:0 0;-webkit-text-stroke:0.1px #262626;">AD</div>
<div class="t" style="left:311.13px;top:212.28px;font-size:13.5px;color:#262626;transform:scaleX(0.9300);transform-origin:0 0;-webkit-text-stroke:0.1px #262626;">AE</div>
<div class="t" style="left:375.48px;top:212.28px;font-size:13.5px;color:#262626;transform:scaleX(0.9300);transform-origin:0 0;-webkit-text-stroke:0.1px #262626;">AF</div>
<div class="t" style="left:438.43px;top:212.28px;font-size:13.5px;color:#262626;transform:scaleX(0.9300);transform-origin:0 0;-webkit-text-stroke:0.1px #262626;">AG</div>
<div class="t" style="left:516.78px;top:212.28px;font-size:13.5px;color:#217346;transform:scaleX(0.9300);transform-origin:0 0;-webkit-text-stroke:0.1px #217346;">AH</div>
<div class="t" style="left:597.57px;top:212.28px;font-size:13.5px;color:#262626;transform:scaleX(0.9300);transform-origin:0 0;-webkit-text-stroke:0.1px #262626;">AI</div>
<div class="t" style="left:660.17px;top:212.28px;font-size:13.5px;color:#262626;transform:scaleX(0.9300);transform-origin:0 0;-webkit-text-stroke:0.1px #262626;">AJ</div>
<div class="t" style="left:723.13px;top:212.28px;font-size:13.5px;color:#262626;transform:scaleX(0.9300);transform-origin:0 0;-webkit-text-stroke:0.1px #262626;">AK</div>
<div class="t" style="left:787.82px;top:212.28px;font-size:13.5px;color:#262626;transform:scaleX(0.9300);transform-origin:0 0;-webkit-text-stroke:0.1px #262626;">AL</div>
<div class="t" style="left:10.64px;top:232.24px;font-size:13px;color:#262626;transform:scaleX(0.9300);transform-origin:0 0;">1</div>
<div class="t" style="left:10.64px;top:254.24px;font-size:13px;color:#262626;transform:scaleX(0.9300);transform-origin:0 0;">2</div>
<div class="t" style="left:7.28px;top:276.24px;font-size:13px;color:#262626;transform:scaleX(0.9300);transform-origin:0 0;">27</div>
<div class="t" style="left:7.28px;top:298.24px;font-size:13px;color:#262626;transform:scaleX(0.9300);transform-origin:0 0;">28</div>
<div class="t" style="left:7.28px;top:320.24px;font-size:13px;color:#262626;transform:scaleX(0.9300);transform-origin:0 0;">29</div>
<div class="t" style="left:7.28px;top:342.24px;font-size:13px;color:#262626;transform:scaleX(0.9300);transform-origin:0 0;">30</div>
<div class="t" style="left:7.28px;top:364.24px;font-size:13px;color:#262626;transform:scaleX(0.9300);transform-origin:0 0;">31</div>
<div class="t" style="left:7.28px;top:386.24px;font-size:13px;color:#262626;transform:scaleX(0.9300);transform-origin:0 0;">32</div>
<div class="t" style="left:7.28px;top:408.24px;font-size:13px;color:#262626;transform:scaleX(0.9300);transform-origin:0 0;">33</div>
<div class="t" style="left:7.28px;top:430.24px;font-size:13px;color:#262626;transform:scaleX(0.9300);transform-origin:0 0;">34</div>
<div class="t" style="left:7.28px;top:452.24px;font-size:13px;color:#262626;transform:scaleX(0.9300);transform-origin:0 0;">35</div>
<div class="t" style="left:7.28px;top:474.24px;font-size:13px;color:#262626;transform:scaleX(0.9300);transform-origin:0 0;">36</div>
<div class="t" style="left:7.28px;top:496.24px;font-size:13px;color:#262626;transform:scaleX(0.9300);transform-origin:0 0;">37</div>
<div class="t" style="left:7.28px;top:518.24px;font-size:13px;color:#262626;transform:scaleX(0.9300);transform-origin:0 0;">38</div>
<div class="t" style="left:7.28px;top:540.24px;font-size:13px;color:#262626;transform:scaleX(0.9300);transform-origin:0 0;">39</div>
<div class="t" style="left:7.28px;top:562.24px;font-size:13px;color:#262626;transform:scaleX(0.9300);transform-origin:0 0;">40</div>
<div class="t" style="left:7.28px;top:584.24px;font-size:13px;color:#262626;transform:scaleX(0.9300);transform-origin:0 0;">41</div>
<div class="t" style="left:7.28px;top:606.24px;font-size:13px;color:#217346;transform:scaleX(0.9300);transform-origin:0 0;">42</div>
<div class="t" style="left:7.28px;top:628.24px;font-size:13px;color:#217346;transform:scaleX(0.9300);transform-origin:0 0;">43</div>
<div class="t" style="left:7.28px;top:650.24px;font-size:13px;color:#217346;transform:scaleX(0.9300);transform-origin:0 0;">44</div>
<div class="t" style="left:7.28px;top:672.24px;font-size:13px;color:#262626;transform:scaleX(0.9300);transform-origin:0 0;">45</div>
<div class="t" style="left:7.28px;top:694.24px;font-size:13px;color:#262626;transform:scaleX(0.9300);transform-origin:0 0;">46</div>
<div class="t" style="left:7.28px;top:716.24px;font-size:13px;color:#262626;transform:scaleX(0.9300);transform-origin:0 0;">47</div>
<div class="t" style="left:7.28px;top:738.24px;font-size:13px;color:#262626;transform:scaleX(0.9300);transform-origin:0 0;">48</div>
<div class="t" style="left:7.28px;top:760.24px;font-size:13px;color:#262626;transform:scaleX(0.9300);transform-origin:0 0;">49</div>
<div class="t" style="left:7.28px;top:782.24px;font-size:13px;color:#262626;transform:scaleX(0.9300);transform-origin:0 0;">50</div>
<div class="t" style="left:7.28px;top:804.24px;font-size:13px;color:#262626;transform:scaleX(0.9300);transform-origin:0 0;">51</div>
<div class="t" style="left:7.28px;top:826.24px;font-size:13px;color:#262626;transform:scaleX(0.9300);transform-origin:0 0;">52</div>
<div class="t" style="left:7.28px;top:848.24px;font-size:13px;color:#262626;transform:scaleX(0.9300);transform-origin:0 0;">53</div>
<div class="t" style="left:7.28px;top:870.24px;font-size:13px;color:#262626;transform:scaleX(0.9300);transform-origin:0 0;">54</div>
<div class="t" style="left:7.28px;top:892.24px;font-size:13px;color:#262626;transform:scaleX(0.9300);transform-origin:0 0;">55</div>
<div class="t" style="left:7.28px;top:914.24px;font-size:13px;color:#262626;transform:scaleX(0.9300);transform-origin:0 0;">56</div>
<div style="left:28px;top:274.38px;width:62px;height:17.4px;overflow:hidden;"><div class="t" style="left:0.50px;top:0;font-size:14.5px;color:#000;transform:scaleX(0.853);transform-origin:0 0;">PT PRIMA JAYA</div></div>
<div style="left:91px;top:274.38px;width:63px;height:17.4px;overflow:hidden;"><div class="t" style="left:1.50px;top:0;font-size:14.5px;color:#000;transform:scaleX(0.853);transform-origin:0 0;">Biskitop Sandwich</div></div>
<div style="left:155px;top:274.38px;width:63px;height:17.4px;overflow:hidden;"><div class="t" style="left:1.50px;top:0;font-size:14.5px;color:#000;transform:scaleX(0.853);transform-origin:0 0;">CIP-2201012</div></div>
<div style="left:219px;top:274.38px;width:68px;height:17.4px;overflow:hidden;"><div class="t" style="left:4.10px;top:0;font-size:14.5px;color:#000;transform:scaleX(0.853);transform-origin:0 0;">17/01/2022</div></div>
<div style="left:288px;top:274.38px;width:63px;height:17.4px;overflow:hidden;"><div class="t" style="left:47.74px;top:0;font-size:14.5px;color:#000;transform:scaleX(0.853);transform-origin:0 0;">10</div></div>
<div style="left:480px;top:274.38px;width:91px;height:17.4px;overflow:hidden;"><div class="t" style="left:39.29px;top:0;font-size:14.5px;color:#000;transform:scaleX(0.853);transform-origin:0 0;">581.820</div></div>
<div style="left:636px;top:274.38px;width:63px;height:17.4px;overflow:hidden;"><div class="t" style="left:1.50px;top:0;font-size:14.5px;color:#000;transform:scaleX(0.853);transform-origin:0 0;">No. 001/CSJ/2022</div></div>
<div style="left:700px;top:274.38px;width:63px;height:17.4px;overflow:hidden;"><div class="t" style="left:1.50px;top:0;font-size:14.5px;color:#000;transform:scaleX(0.853);transform-origin:0 0;">CHENG YEN</div></div>
<div style="left:764px;top:274.38px;width:63px;height:17.4px;overflow:hidden;"><div class="t" style="left:53.12px;top:0;font-size:14.5px;color:#000;transform:scaleX(0.853);transform-origin:0 0;">1</div></div>
<div style="left:28px;top:296.38px;width:62px;height:17.4px;overflow:hidden;"><div class="t" style="left:0.50px;top:0;font-size:14.5px;color:#000;transform:scaleX(0.853);transform-origin:0 0;">PT PRIMA JAYA</div></div>
<div style="left:91px;top:296.38px;width:63px;height:17.4px;overflow:hidden;"><div class="t" style="left:1.50px;top:0;font-size:14.5px;color:#000;transform:scaleX(0.853);transform-origin:0 0;">Biskitop Sandwich</div></div>
<div style="left:155px;top:296.38px;width:63px;height:17.4px;overflow:hidden;"><div class="t" style="left:1.50px;top:0;font-size:14.5px;color:#000;transform:scaleX(0.853);transform-origin:0 0;">CIP-2201012</div></div>
<div style="left:219px;top:296.38px;width:68px;height:17.4px;overflow:hidden;"><div class="t" style="left:4.10px;top:0;font-size:14.5px;color:#000;transform:scaleX(0.853);transform-origin:0 0;">17/01/2022</div></div>
<div style="left:288px;top:296.38px;width:63px;height:17.4px;overflow:hidden;"><div class="t" style="left:47.74px;top:0;font-size:14.5px;color:#000;transform:scaleX(0.853);transform-origin:0 0;">60</div></div>
<div style="left:480px;top:296.38px;width:91px;height:17.4px;overflow:hidden;"><div class="t" style="left:28.97px;top:0;font-size:14.5px;color:#000;transform:scaleX(0.853);transform-origin:0 0;">6.981.840</div></div>
<div style="left:636px;top:296.38px;width:63px;height:17.4px;overflow:hidden;"><div class="t" style="left:1.50px;top:0;font-size:14.5px;color:#000;transform:scaleX(0.853);transform-origin:0 0;">No. 001/CSJ/2022</div></div>
<div style="left:700px;top:296.38px;width:63px;height:17.4px;overflow:hidden;"><div class="t" style="left:1.50px;top:0;font-size:14.5px;color:#000;transform:scaleX(0.853);transform-origin:0 0;">CHENG YEN</div></div>
<div style="left:764px;top:296.38px;width:63px;height:17.4px;overflow:hidden;"><div class="t" style="left:53.12px;top:0;font-size:14.5px;color:#000;transform:scaleX(0.853);transform-origin:0 0;">1</div></div>
<div style="left:28px;top:318.38px;width:62px;height:17.4px;overflow:hidden;"><div class="t" style="left:0.50px;top:0;font-size:14.5px;color:#000;transform:scaleX(0.853);transform-origin:0 0;">PT PRIMA JAYA</div></div>
<div style="left:91px;top:318.38px;width:63px;height:17.4px;overflow:hidden;"><div class="t" style="left:1.50px;top:0;font-size:14.5px;color:#000;transform:scaleX(0.853);transform-origin:0 0;">Biskitop Sandwich</div></div>
<div style="left:155px;top:318.38px;width:63px;height:17.4px;overflow:hidden;"><div class="t" style="left:1.50px;top:0;font-size:14.5px;color:#000;transform:scaleX(0.853);transform-origin:0 0;">CIP-2201012</div></div>
<div style="left:219px;top:318.38px;width:68px;height:17.4px;overflow:hidden;"><div class="t" style="left:4.10px;top:0;font-size:14.5px;color:#000;transform:scaleX(0.853);transform-origin:0 0;">17/01/2022</div></div>
<div style="left:288px;top:318.38px;width:63px;height:17.4px;overflow:hidden;"><div class="t" style="left:47.74px;top:0;font-size:14.5px;color:#000;transform:scaleX(0.853);transform-origin:0 0;">60</div></div>
<div style="left:480px;top:318.38px;width:91px;height:17.4px;overflow:hidden;"><div class="t" style="left:28.97px;top:0;font-size:14.5px;color:#000;transform:scaleX(0.853);transform-origin:0 0;">6.981.840</div></div>
<div style="left:636px;top:318.38px;width:63px;height:17.4px;overflow:hidden;"><div class="t" style="left:1.50px;top:0;font-size:14.5px;color:#000;transform:scaleX(0.853);transform-origin:0 0;">No. 001/CSJ/2022</div></div>
<div style="left:700px;top:318.38px;width:63px;height:17.4px;overflow:hidden;"><div class="t" style="left:1.50px;top:0;font-size:14.5px;color:#000;transform:scaleX(0.853);transform-origin:0 0;">CHENG YEN</div></div>
<div style="left:764px;top:318.38px;width:63px;height:17.4px;overflow:hidden;"><div class="t" style="left:53.12px;top:0;font-size:14.5px;color:#000;transform:scaleX(0.853);transform-origin:0 0;">1</div></div>
<div style="left:28px;top:340.38px;width:62px;height:17.4px;overflow:hidden;"><div class="t" style="left:0.50px;top:0;font-size:14.5px;color:#000;transform:scaleX(0.853);transform-origin:0 0;">PT PRIMA JAYA</div></div>
<div style="left:91px;top:340.38px;width:63px;height:17.4px;overflow:hidden;"><div class="t" style="left:1.50px;top:0;font-size:14.5px;color:#000;transform:scaleX(0.853);transform-origin:0 0;">Biskitop Stindwich</div></div>
<div style="left:155px;top:340.38px;width:63px;height:17.4px;overflow:hidden;"><div class="t" style="left:1.50px;top:0;font-size:14.5px;color:#000;transform:scaleX(0.853);transform-origin:0 0;">CIP-2201012</div></div>
<div style="left:219px;top:340.38px;width:68px;height:17.4px;overflow:hidden;"><div class="t" style="left:4.10px;top:0;font-size:14.5px;color:#000;transform:scaleX(0.853);transform-origin:0 0;">17/01/2022</div></div>
<div style="left:288px;top:340.38px;width:63px;height:17.4px;overflow:hidden;"><div class="t" style="left:54.62px;top:0;font-size:14.5px;color:#000;transform:scaleX(0.853);transform-origin:0 0;">5</div></div>
<div style="left:480px;top:340.38px;width:91px;height:17.4px;overflow:hidden;"><div class="t" style="left:39.29px;top:0;font-size:14.5px;color:#000;transform:scaleX(0.853);transform-origin:0 0;">286.365</div></div>
<div style="left:636px;top:340.38px;width:63px;height:17.4px;overflow:hidden;"><div class="t" style="left:1.50px;top:0;font-size:14.5px;color:#000;transform:scaleX(0.853);transform-origin:0 0;">No. 001/CSJ/2022</div></div>
<div style="left:700px;top:340.38px;width:63px;height:17.4px;overflow:hidden;"><div class="t" style="left:1.50px;top:0;font-size:14.5px;color:#000;transform:scaleX(0.853);transform-origin:0 0;">CHENG YEN</div></div>
<div style="left:764px;top:340.38px;width:63px;height:17.4px;overflow:hidden;"><div class="t" style="left:53.12px;top:0;font-size:14.5px;color:#000;transform:scaleX(0.853);transform-origin:0 0;">1</div></div>
<div style="left:28px;top:362.38px;width:62px;height:17.4px;overflow:hidden;"><div class="t" style="left:0.50px;top:0;font-size:14.5px;color:#000;transform:scaleX(0.853);transform-origin:0 0;">PT PRIMA JAYA</div></div>
<div style="left:91px;top:362.38px;width:63px;height:17.4px;overflow:hidden;"><div class="t" style="left:1.50px;top:0;font-size:14.5px;color:#000;transform:scaleX(0.853);transform-origin:0 0;">Biskitop Stindwich</div></div>
<div style="left:155px;top:362.38px;width:63px;height:17.4px;overflow:hidden;"><div class="t" style="left:1.50px;top:0;font-size:14.5px;color:#000;transform:scaleX(0.853);transform-origin:0 0;">CIP-2201012</div></div>
<div style="left:219px;top:362.38px;width:68px;height:17.4px;overflow:hidden;"><div class="t" style="left:4.10px;top:0;font-size:14.5px;color:#000;transform:scaleX(0.853);transform-origin:0 0;">17/01/2022</div></div>
<div style="left:288px;top:362.38px;width:63px;height:17.4px;overflow:hidden;"><div class="t" style="left:47.74px;top:0;font-size:14.5px;color:#000;transform:scaleX(0.853);transform-origin:0 0;">10</div></div>
<div style="left:480px;top:362.38px;width:91px;height:17.4px;overflow:hidden;"><div class="t" style="left:39.29px;top:0;font-size:14.5px;color:#000;transform:scaleX(0.853);transform-origin:0 0;">572.730</div></div>
<div style="left:636px;top:362.38px;width:63px;height:17.4px;overflow:hidden;"><div class="t" style="left:1.50px;top:0;font-size:14.5px;color:#000;transform:scaleX(0.853);transform-origin:0 0;">No. 001/CSJ/2022</div></div>
<div style="left:700px;top:362.38px;width:63px;height:17.4px;overflow:hidden;"><div class="t" style="left:1.50px;top:0;font-size:14.5px;color:#000;transform:scaleX(0.853);transform-origin:0 0;">CHENG YEN</div></div>
<div style="left:764px;top:362.38px;width:63px;height:17.4px;overflow:hidden;"><div class="t" style="left:53.12px;top:0;font-size:14.5px;color:#000;transform:scaleX(0.853);transform-origin:0 0;">1</div></div>
<div style="left:28px;top:384.38px;width:62px;height:17.4px;overflow:hidden;"><div class="t" style="left:0.50px;top:0;font-size:14.5px;color:#000;transform:scaleX(0.853);transform-origin:0 0;">PT PRIMA JAYA</div></div>
<div style="left:91px;top:384.38px;width:63px;height:17.4px;overflow:hidden;"><div class="t" style="left:1.50px;top:0;font-size:14.5px;color:#000;transform:scaleX(0.853);transform-origin:0 0;">Biskitop Stindwich</div></div>
<div style="left:155px;top:384.38px;width:63px;height:17.4px;overflow:hidden;"><div class="t" style="left:1.50px;top:0;font-size:14.5px;color:#000;transform:scaleX(0.853);transform-origin:0 0;">CIP-2201012</div></div>
<div style="left:219px;top:384.38px;width:68px;height:17.4px;overflow:hidden;"><div class="t" style="left:4.10px;top:0;font-size:14.5px;color:#000;transform:scaleX(0.853);transform-origin:0 0;">17/01/2022</div></div>
<div style="left:288px;top:384.38px;width:63px;height:17.4px;overflow:hidden;"><div class="t" style="left:47.74px;top:0;font-size:14.5px;color:#000;transform:scaleX(0.853);transform-origin:0 0;">65</div></div>
<div style="left:480px;top:384.38px;width:91px;height:17.4px;overflow:hidden;"><div class="t" style="left:28.97px;top:0;font-size:14.5px;color:#000;transform:scaleX(0.853);transform-origin:0 0;">3.722.745</div></div>
<div style="left:636px;top:384.38px;width:63px;height:17.4px;overflow:hidden;"><div class="t" style="left:1.50px;top:0;font-size:14.5px;color:#000;transform:scaleX(0.853);transform-origin:0 0;">No. 001/CSJ/2022</div></div>
<div style="left:700px;top:384.38px;width:63px;height:17.4px;overflow:hidden;"><div class="t" style="left:1.50px;top:0;font-size:14.5px;color:#000;transform:scaleX(0.853);transform-origin:0 0;">CHENG YEN</div></div>
<div style="left:764px;top:384.38px;width:63px;height:17.4px;overflow:hidden;"><div class="t" style="left:53.12px;top:0;font-size:14.5px;color:#000;transform:scaleX(0.853);transform-origin:0 0;">1</div></div>
<div style="left:28px;top:406.38px;width:62px;height:17.4px;overflow:hidden;"><div class="t" style="left:0.50px;top:0;font-size:14.5px;color:#000;transform:scaleX(0.853);transform-origin:0 0;">PT PRIMA JAYA</div></div>
<div style="left:91px;top:406.38px;width:63px;height:17.4px;overflow:hidden;"><div class="t" style="left:1.50px;top:0;font-size:14.5px;color:#000;transform:scaleX(0.853);transform-origin:0 0;">Biskitop Wandwich</div></div>
<div style="left:155px;top:406.38px;width:63px;height:17.4px;overflow:hidden;"><div class="t" style="left:1.50px;top:0;font-size:14.5px;color:#000;transform:scaleX(0.853);transform-origin:0 0;">CIP-2201012</div></div>
<div style="left:219px;top:406.38px;width:68px;height:17.4px;overflow:hidden;"><div class="t" style="left:4.10px;top:0;font-size:14.5px;color:#000;transform:scaleX(0.853);transform-origin:0 0;">17/01/2022</div></div>
<div style="left:288px;top:406.38px;width:63px;height:17.4px;overflow:hidden;"><div class="t" style="left:54.62px;top:0;font-size:14.5px;color:#000;transform:scaleX(0.853);transform-origin:0 0;">5</div></div>
<div style="left:480px;top:406.38px;width:91px;height:17.4px;overflow:hidden;"><div class="t" style="left:39.29px;top:0;font-size:14.5px;color:#000;transform:scaleX(0.853);transform-origin:0 0;">496.365</div></div>
<div style="left:636px;top:406.38px;width:63px;height:17.4px;overflow:hidden;"><div class="t" style="left:1.50px;top:0;font-size:14.5px;color:#000;transform:scaleX(0.853);transform-origin:0 0;">No. 001/CSJ/2022</div></div>
<div style="left:700px;top:406.38px;width:63px;height:17.4px;overflow:hidden;"><div class="t" style="left:1.50px;top:0;font-size:14.5px;color:#000;transform:scaleX(0.853);transform-origin:0 0;">CHENG YEN</div></div>
<div style="left:764px;top:406.38px;width:63px;height:17.4px;overflow:hidden;"><div class="t" style="left:53.12px;top:0;font-size:14.5px;color:#000;transform:scaleX(0.853);transform-origin:0 0;">1</div></div>
<div style="left:28px;top:428.38px;width:62px;height:17.4px;overflow:hidden;"><div class="t" style="left:0.50px;top:0;font-size:14.5px;color:#000;transform:scaleX(0.853);transform-origin:0 0;">PT PRIMA JAYA</div></div>
<div style="left:91px;top:428.38px;width:63px;height:17.4px;overflow:hidden;"><div class="t" style="left:1.50px;top:0;font-size:14.5px;color:#000;transform:scaleX(0.853);transform-origin:0 0;">Biskitop Wandwich</div></div>
<div style="left:155px;top:428.38px;width:63px;height:17.4px;overflow:hidden;"><div class="t" style="left:1.50px;top:0;font-size:14.5px;color:#000;transform:scaleX(0.853);transform-origin:0 0;">CIP-2201012</div></div>
<div style="left:219px;top:428.38px;width:68px;height:17.4px;overflow:hidden;"><div class="t" style="left:4.10px;top:0;font-size:14.5px;color:#000;transform:scaleX(0.853);transform-origin:0 0;">17/01/2022</div></div>
<div style="left:288px;top:428.38px;width:63px;height:17.4px;overflow:hidden;"><div class="t" style="left:54.62px;top:0;font-size:14.5px;color:#000;transform:scaleX(0.853);transform-origin:0 0;">5</div></div>
<div style="left:480px;top:428.38px;width:91px;height:17.4px;overflow:hidden;"><div class="t" style="left:39.29px;top:0;font-size:14.5px;color:#000;transform:scaleX(0.853);transform-origin:0 0;">496.365</div></div>
<div style="left:636px;top:428.38px;width:63px;height:17.4px;overflow:hidden;"><div class="t" style="left:1.50px;top:0;font-size:14.5px;color:#000;transform:scaleX(0.853);transform-origin:0 0;">No. 001/CSJ/2022</div></div>
<div style="left:700px;top:428.38px;width:63px;height:17.4px;overflow:hidden;"><div class="t" style="left:1.50px;top:0;font-size:14.5px;color:#000;transform:scaleX(0.853);transform-origin:0 0;">CHENG YEN</div></div>
<div style="left:764px;top:428.38px;width:63px;height:17.4px;overflow:hidden;"><div class="t" style="left:53.12px;top:0;font-size:14.5px;color:#000;transform:scaleX(0.853);transform-origin:0 0;">1</div></div>
<div style="left:28px;top:450.38px;width:62px;height:17.4px;overflow:hidden;"><div class="t" style="left:0.50px;top:0;font-size:14.5px;color:#000;transform:scaleX(0.853);transform-origin:0 0;">PT PRIMA JAYA</div></div>
<div style="left:91px;top:450.38px;width:63px;height:17.4px;overflow:hidden;"><div class="t" style="left:1.50px;top:0;font-size:14.5px;color:#000;transform:scaleX(0.853);transform-origin:0 0;">Biskitop Wandwich</div></div>
<div style="left:155px;top:450.38px;width:63px;height:17.4px;overflow:hidden;"><div class="t" style="left:1.50px;top:0;font-size:14.5px;color:#000;transform:scaleX(0.853);transform-origin:0 0;">CIP-2201012</div></div>
<div style="left:219px;top:450.38px;width:68px;height:17.4px;overflow:hidden;"><div class="t" style="left:4.10px;top:0;font-size:14.5px;color:#000;transform:scaleX(0.853);transform-origin:0 0;">17/01/2022</div></div>
<div style="left:288px;top:450.38px;width:63px;height:17.4px;overflow:hidden;"><div class="t" style="left:47.74px;top:0;font-size:14.5px;color:#000;transform:scaleX(0.853);transform-origin:0 0;">15</div></div>
<div style="left:480px;top:450.38px;width:91px;height:17.4px;overflow:hidden;"><div class="t" style="left:28.97px;top:0;font-size:14.5px;color:#000;transform:scaleX(0.853);transform-origin:0 0;">1.125.750</div></div>
<div style="left:636px;top:450.38px;width:63px;height:17.4px;overflow:hidden;"><div class="t" style="left:1.50px;top:0;font-size:14.5px;color:#000;transform:scaleX(0.853);transform-origin:0 0;">No. 001/CSJ/2022</div></div>
<div style="left:700px;top:450.38px;width:63px;height:17.4px;overflow:hidden;"><div class="t" style="left:1.50px;top:0;font-size:14.5px;color:#000;transform:scaleX(0.853);transform-origin:0 0;">CHENG YEN</div></div>
<div style="left:764px;top:450.38px;width:63px;height:17.4px;overflow:hidden;"><div class="t" style="left:53.12px;top:0;font-size:14.5px;color:#000;transform:scaleX(0.853);transform-origin:0 0;">1</div></div>
<div style="left:28px;top:472.38px;width:62px;height:17.4px;overflow:hidden;"><div class="t" style="left:0.50px;top:0;font-size:14.5px;color:#000;transform:scaleX(0.853);transform-origin:0 0;">PT PRIMA JAYA</div></div>
<div style="left:91px;top:472.38px;width:63px;height:17.4px;overflow:hidden;"><div class="t" style="left:1.50px;top:0;font-size:14.5px;color:#000;transform:scaleX(0.853);transform-origin:0 0;">Biskitop Wandwich</div></div>
<div style="left:155px;top:472.38px;width:63px;height:17.4px;overflow:hidden;"><div class="t" style="left:1.50px;top:0;font-size:14.5px;color:#000;transform:scaleX(0.853);transform-origin:0 0;">CIP-2201012</div></div>
<div style="left:219px;top:472.38px;width:68px;height:17.4px;overflow:hidden;"><div class="t" style="left:4.10px;top:0;font-size:14.5px;color:#000;transform:scaleX(0.853);transform-origin:0 0;">17/01/2022</div></div>
<div style="left:288px;top:472.38px;width:63px;height:17.4px;overflow:hidden;"><div class="t" style="left:47.74px;top:0;font-size:14.5px;color:#000;transform:scaleX(0.853);transform-origin:0 0;">10</div></div>
<div style="left:480px;top:472.38px;width:91px;height:17.4px;overflow:hidden;"><div class="t" style="left:39.29px;top:0;font-size:14.5px;color:#000;transform:scaleX(0.853);transform-origin:0 0;">992.730</div></div>
<div style="left:636px;top:472.38px;width:63px;height:17.4px;overflow:hidden;"><div class="t" style="left:1.50px;top:0;font-size:14.5px;color:#000;transform:scaleX(0.853);transform-origin:0 0;">No. 001/CSJ/2022</div></div>
<div style="left:700px;top:472.38px;width:63px;height:17.4px;overflow:hidden;"><div class="t" style="left:1.50px;top:0;font-size:14.5px;color:#000;transform:scaleX(0.853);transform-origin:0 0;">CHENG YEN</div></div>
<div style="left:764px;top:472.38px;width:63px;height:17.4px;overflow:hidden;"><div class="t" style="left:53.12px;top:0;font-size:14.5px;color:#000;transform:scaleX(0.853);transform-origin:0 0;">1</div></div>
<div style="left:28px;top:494.38px;width:62px;height:17.4px;overflow:hidden;"><div class="t" style="left:0.50px;top:0;font-size:14.5px;color:#000;transform:scaleX(0.853);transform-origin:0 0;">PT PRIMA JAYA</div></div>
<div style="left:91px;top:494.38px;width:63px;height:17.4px;overflow:hidden;"><div class="t" style="left:1.50px;top:0;font-size:14.5px;color:#000;transform:scaleX(0.853);transform-origin:0 0;">Biskitop Wandwich</div></div>
<div style="left:155px;top:494.38px;width:63px;height:17.4px;overflow:hidden;"><div class="t" style="left:1.50px;top:0;font-size:14.5px;color:#000;transform:scaleX(0.853);transform-origin:0 0;">CIP-2201012</div></div>
<div style="left:219px;top:494.38px;width:68px;height:17.4px;overflow:hidden;"><div class="t" style="left:4.10px;top:0;font-size:14.5px;color:#000;transform:scaleX(0.853);transform-origin:0 0;">17/01/2022</div></div>
<div style="left:288px;top:494.38px;width:63px;height:17.4px;overflow:hidden;"><div class="t" style="left:54.62px;top:0;font-size:14.5px;color:#000;transform:scaleX(0.853);transform-origin:0 0;">5</div></div>
<div style="left:480px;top:494.38px;width:91px;height:17.4px;overflow:hidden;"><div class="t" style="left:39.29px;top:0;font-size:14.5px;color:#000;transform:scaleX(0.853);transform-origin:0 0;">992.725</div></div>
<div style="left:636px;top:494.38px;width:63px;height:17.4px;overflow:hidden;"><div class="t" style="left:1.50px;top:0;font-size:14.5px;color:#000;transform:scaleX(0.853);transform-origin:0 0;">No. 001/CSJ/2022</div></div>
<div style="left:700px;top:494.38px;width:63px;height:17.4px;overflow:hidden;"><div class="t" style="left:1.50px;top:0;font-size:14.5px;color:#000;transform:scaleX(0.853);transform-origin:0 0;">CHENG YEN</div></div>
<div style="left:764px;top:494.38px;width:63px;height:17.4px;overflow:hidden;"><div class="t" style="left:53.12px;top:0;font-size:14.5px;color:#000;transform:scaleX(0.853);transform-origin:0 0;">1</div></div>
<div style="left:28px;top:516.38px;width:62px;height:17.4px;overflow:hidden;"><div class="t" style="left:0.50px;top:0;font-size:14.5px;color:#000;transform:scaleX(0.853);transform-origin:0 0;">PT PRIMA JAYA</div></div>
<div style="left:91px;top:516.38px;width:63px;height:17.4px;overflow:hidden;"><div class="t" style="left:1.50px;top:0;font-size:14.5px;color:#000;transform:scaleX(0.853);transform-origin:0 0;">Biskitop Wandwich</div></div>
<div style="left:155px;top:516.38px;width:63px;height:17.4px;overflow:hidden;"><div class="t" style="left:1.50px;top:0;font-size:14.5px;color:#000;transform:scaleX(0.853);transform-origin:0 0;">CIP-2201012</div></div>
<div style="left:219px;top:516.38px;width:68px;height:17.4px;overflow:hidden;"><div class="t" style="left:4.10px;top:0;font-size:14.5px;color:#000;transform:scaleX(0.853);transform-origin:0 0;">17/01/2022</div></div>
<div style="left:288px;top:516.38px;width:63px;height:17.4px;overflow:hidden;"><div class="t" style="left:47.74px;top:0;font-size:14.5px;color:#000;transform:scaleX(0.853);transform-origin:0 0;">10</div></div>
<div style="left:480px;top:516.38px;width:91px;height:17.4px;overflow:hidden;"><div class="t" style="left:28.97px;top:0;font-size:14.5px;color:#000;transform:scaleX(0.853);transform-origin:0 0;">1.127.560</div></div>
<div style="left:636px;top:516.38px;width:63px;height:17.4px;overflow:hidden;"><div class="t" style="left:1.50px;top:0;font-size:14.5px;color:#000;transform:scaleX(0.853);transform-origin:0 0;">No. 001/CSJ/2022</div></div>
<div style="left:700px;top:516.38px;width:63px;height:17.4px;overflow:hidden;"><div class="t" style="left:1.50px;top:0;font-size:14.5px;color:#000;transform:scaleX(0.853);transform-origin:0 0;">CHENG YEN</div></div>
<div style="left:764px;top:516.38px;width:63px;height:17.4px;overflow:hidden;"><div class="t" style="left:53.12px;top:0;font-size:14.5px;color:#000;transform:scaleX(0.853);transform-origin:0 0;">1</div></div>
<div style="left:28px;top:538.38px;width:62px;height:17.4px;overflow:hidden;"><div class="t" style="left:0.50px;top:0;font-size:14.5px;color:#000;transform:scaleX(0.853);transform-origin:0 0;">PT PRIMA JAYA</div></div>
<div style="left:91px;top:538.38px;width:63px;height:17.4px;overflow:hidden;"><div class="t" style="left:1.50px;top:0;font-size:14.5px;color:#000;transform:scaleX(0.853);transform-origin:0 0;">Biskitop Wandwich</div></div>
<div style="left:155px;top:538.38px;width:63px;height:17.4px;overflow:hidden;"><div class="t" style="left:1.50px;top:0;font-size:14.5px;color:#000;transform:scaleX(0.853);transform-origin:0 0;">CIP-2201012</div></div>
<div style="left:219px;top:538.38px;width:68px;height:17.4px;overflow:hidden;"><div class="t" style="left:4.10px;top:0;font-size:14.5px;color:#000;transform:scaleX(0.853);transform-origin:0 0;">17/01/2022</div></div>
<div style="left:288px;top:538.38px;width:63px;height:17.4px;overflow:hidden;"><div class="t" style="left:47.74px;top:0;font-size:14.5px;color:#000;transform:scaleX(0.853);transform-origin:0 0;">10</div></div>
<div style="left:480px;top:538.38px;width:91px;height:17.4px;overflow:hidden;"><div class="t" style="left:39.29px;top:0;font-size:14.5px;color:#000;transform:scaleX(0.853);transform-origin:0 0;">745.450</div></div>
<div style="left:636px;top:538.38px;width:63px;height:17.4px;overflow:hidden;"><div class="t" style="left:1.50px;top:0;font-size:14.5px;color:#000;transform:scaleX(0.853);transform-origin:0 0;">No. 001/CSJ/2022</div></div>
<div style="left:700px;top:538.38px;width:63px;height:17.4px;overflow:hidden;"><div class="t" style="left:1.50px;top:0;font-size:14.5px;color:#000;transform:scaleX(0.853);transform-origin:0 0;">CHENG YEN</div></div>
<div style="left:764px;top:538.38px;width:63px;height:17.4px;overflow:hidden;"><div class="t" style="left:53.12px;top:0;font-size:14.5px;color:#000;transform:scaleX(0.853);transform-origin:0 0;">1</div></div>
<div style="left:28px;top:560.38px;width:62px;height:17.4px;overflow:hidden;"><div class="t" style="left:0.50px;top:0;font-size:14.5px;color:#000;transform:scaleX(0.853);transform-origin:0 0;">PT PRIMA JAYA</div></div>
<div style="left:91px;top:560.38px;width:63px;height:17.4px;overflow:hidden;"><div class="t" style="left:1.50px;top:0;font-size:14.5px;color:#000;transform:scaleX(0.853);transform-origin:0 0;">Biskitop Wandwich</div></div>
<div style="left:155px;top:560.38px;width:63px;height:17.4px;overflow:hidden;"><div class="t" style="left:1.50px;top:0;font-size:14.5px;color:#000;transform:scaleX(0.853);transform-origin:0 0;">CIP-2201012</div></div>
<div style="left:219px;top:560.38px;width:68px;height:17.4px;overflow:hidden;"><div class="t" style="left:4.10px;top:0;font-size:14.5px;color:#000;transform:scaleX(0.853);transform-origin:0 0;">17/01/2022</div></div>
<div style="left:288px;top:560.38px;width:63px;height:17.4px;overflow:hidden;"><div class="t" style="left:54.62px;top:0;font-size:14.5px;color:#000;transform:scaleX(0.853);transform-origin:0 0;">5</div></div>
<div style="left:480px;top:560.38px;width:91px;height:17.4px;overflow:hidden;"><div class="t" style="left:28.97px;top:0;font-size:14.5px;color:#000;transform:scaleX(0.853);transform-origin:0 0;">1.127.560</div></div>
<div style="left:636px;top:560.38px;width:63px;height:17.4px;overflow:hidden;"><div class="t" style="left:1.50px;top:0;font-size:14.5px;color:#000;transform:scaleX(0.853);transform-origin:0 0;">No. 001/CSJ/2022</div></div>
<div style="left:700px;top:560.38px;width:63px;height:17.4px;overflow:hidden;"><div class="t" style="left:1.50px;top:0;font-size:14.5px;color:#000;transform:scaleX(0.853);transform-origin:0 0;">CHENG YEN</div></div>
<div style="left:764px;top:560.38px;width:63px;height:17.4px;overflow:hidden;"><div class="t" style="left:53.12px;top:0;font-size:14.5px;color:#000;transform:scaleX(0.853);transform-origin:0 0;">1</div></div>
<div style="left:28px;top:581.92px;width:62px;height:17.6px;overflow:hidden;"><div class="t" style="left:-23.23px;top:0;font-size:14.67px;color:#000;font-weight:bold;">Nama Pemasok</div></div>
<div style="left:91px;top:581.92px;width:63px;height:17.6px;overflow:hidden;"><div class="t" style="left:-15.79px;top:0;font-size:14.67px;color:#000;font-weight:bold;">Nama Barang</div></div>
<div style="left:155px;top:581.92px;width:63px;height:17.6px;overflow:hidden;"><div class="t" style="left:1.75px;top:0;font-size:14.67px;color:#000;font-weight:bold;">Nomor #</div></div>
<div style="left:219px;top:581.92px;width:68px;height:17.6px;overflow:hidden;"><div class="t" style="left:6.42px;top:0;font-size:14.67px;color:#000;font-weight:bold;">Tanggal</div></div>
<div style="left:288px;top:581.92px;width:63px;height:17.6px;overflow:hidden;"><div class="t" style="left:-1.92px;top:0;font-size:14.67px;color:#000;font-weight:bold;">Kuantitas</div></div>
<div style="left:352px;top:581.92px;width:63px;height:17.6px;overflow:hidden;"><div class="t" style="left:7.04px;top:0;font-size:14.67px;color:#000;font-weight:bold;">Satuan</div></div>
<div style="left:416px;top:581.92px;width:63px;height:17.6px;overflow:hidden;"><div class="t" style="left:0.50px;top:0;font-size:14.67px;color:#000;font-weight:bold;">Stok Awal</div></div>
<div style="left:480px;top:581.92px;width:91px;height:17.6px;overflow:hidden;"><div class="t" style="left:8.81px;top:0;font-size:14.67px;color:#000;font-weight:bold;">Pembelian</div></div>
<div style="left:572px;top:581.92px;width:127px;height:17.6px;overflow:hidden;"><div class="t" style="left:58.41px;top:0;font-size:14.67px;color:#000;font-weight:bold;">No Invoice</div></div>
<div style="left:700px;top:581.92px;width:63px;height:17.6px;overflow:hidden;"><div class="t" style="left:-5.59px;top:0;font-size:14.67px;color:#000;font-weight:bold;">Pelanggan</div></div>
<div style="left:764px;top:581.92px;width:63px;height:17.6px;overflow:hidden;"><div class="t" style="left:13.15px;top:0;font-size:14.67px;color:#000;font-weight:bold;">Masa</div></div>
<div style="left:28px;top:604.38px;width:62px;height:17.4px;overflow:hidden;"><div class="t" style="left:0.50px;top:0;font-size:14.5px;color:#000;transform:scaleX(0.853);transform-origin:0 0;">PT  SUBUR JAYA</div></div>
<div style="left:91px;top:604.38px;width:63px;height:17.4px;overflow:hidden;"><div class="t" style="left:1.50px;top:0;font-size:14.5px;color:#000;transform:scaleX(0.853);transform-origin:0 0;">Chocho Wafer</div></div>
<div style="left:155px;top:604.38px;width:63px;height:17.4px;overflow:hidden;"><div class="t" style="left:1.50px;top:0;font-size:14.5px;color:#000;transform:scaleX(0.853);transform-origin:0 0;">CIP-2201022</div></div>
<div style="left:219px;top:604.38px;width:68px;height:17.4px;overflow:hidden;"><div class="t" style="left:4.10px;top:0;font-size:14.5px;color:#000;transform:scaleX(0.853);transform-origin:0 0;">27/01/2022</div></div>
<div style="left:288px;top:604.38px;width:63px;height:17.4px;overflow:hidden;"><div class="t" style="left:47.74px;top:0;font-size:14.5px;color:#000;transform:scaleX(0.853);transform-origin:0 0;">15</div></div>
<div style="left:480px;top:604.38px;width:91px;height:17.4px;overflow:hidden;"><div class="t" style="left:28.97px;top:0;font-size:14.5px;color:#000;transform:scaleX(0.853);transform-origin:0 0;">2.168.061</div></div>
<div style="left:636px;top:604.38px;width:63px;height:17.4px;overflow:hidden;"><div class="t" style="left:1.50px;top:0;font-size:14.5px;color:#000;transform:scaleX(0.853);transform-origin:0 0;">No. 001/CSJ/2022</div></div>
<div style="left:700px;top:604.38px;width:63px;height:17.4px;overflow:hidden;"><div class="t" style="left:1.50px;top:0;font-size:14.5px;color:#000;transform:scaleX(0.853);transform-origin:0 0;">CHENG YEN</div></div>
<div style="left:764px;top:604.38px;width:63px;height:17.4px;overflow:hidden;"><div class="t" style="left:53.12px;top:0;font-size:14.5px;color:#000;transform:scaleX(0.853);transform-origin:0 0;">1</div></div>
<div style="left:28px;top:626.38px;width:62px;height:17.4px;overflow:hidden;"><div class="t" style="left:0.50px;top:0;font-size:14.5px;color:#000;transform:scaleX(0.853);transform-origin:0 0;">PT  SUBUR JAYA</div></div>
<div style="left:91px;top:626.38px;width:63px;height:17.4px;overflow:hidden;"><div class="t" style="left:1.50px;top:0;font-size:14.5px;color:#000;transform:scaleX(0.853);transform-origin:0 0;">Chocho Wafer</div></div>
<div style="left:155px;top:626.38px;width:63px;height:17.4px;overflow:hidden;"><div class="t" style="left:1.50px;top:0;font-size:14.5px;color:#000;transform:scaleX(0.853);transform-origin:0 0;">CIP-2201022</div></div>
<div style="left:219px;top:626.38px;width:68px;height:17.4px;overflow:hidden;"><div class="t" style="left:4.10px;top:0;font-size:14.5px;color:#000;transform:scaleX(0.853);transform-origin:0 0;">27/01/2022</div></div>
<div style="left:288px;top:626.38px;width:63px;height:17.4px;overflow:hidden;"><div class="t" style="left:47.74px;top:0;font-size:14.5px;color:#000;transform:scaleX(0.853);transform-origin:0 0;">20</div></div>
<div style="left:480px;top:626.38px;width:91px;height:17.4px;overflow:hidden;"><div class="t" style="left:28.97px;top:0;font-size:14.5px;color:#000;transform:scaleX(0.853);transform-origin:0 0;">2.890.747</div></div>
<div style="left:636px;top:626.38px;width:63px;height:17.4px;overflow:hidden;"><div class="t" style="left:1.50px;top:0;font-size:14.5px;color:#000;transform:scaleX(0.853);transform-origin:0 0;">No. 001/CSJ/2022</div></div>
<div style="left:700px;top:626.38px;width:63px;height:17.4px;overflow:hidden;"><div class="t" style="left:1.50px;top:0;font-size:14.5px;color:#000;transform:scaleX(0.853);transform-origin:0 0;">CHENG YEN</div></div>
<div style="left:764px;top:626.38px;width:63px;height:17.4px;overflow:hidden;"><div class="t" style="left:53.12px;top:0;font-size:14.5px;color:#000;transform:scaleX(0.853);transform-origin:0 0;">1</div></div>
<div style="left:28px;top:648.38px;width:62px;height:17.4px;overflow:hidden;"><div class="t" style="left:0.50px;top:0;font-size:14.5px;color:#000;transform:scaleX(0.853);transform-origin:0 0;">PT  SUBUR JAYA</div></div>
<div style="left:91px;top:648.38px;width:63px;height:17.4px;overflow:hidden;"><div class="t" style="left:1.50px;top:0;font-size:14.5px;color:#000;transform:scaleX(0.853);transform-origin:0 0;">Chocho Wafer</div></div>
<div style="left:155px;top:648.38px;width:63px;height:17.4px;overflow:hidden;"><div class="t" style="left:1.50px;top:0;font-size:14.5px;color:#000;transform:scaleX(0.853);transform-origin:0 0;">CIP-2201022</div></div>
<div style="left:219px;top:648.38px;width:68px;height:17.4px;overflow:hidden;"><div class="t" style="left:4.10px;top:0;font-size:14.5px;color:#000;transform:scaleX(0.853);transform-origin:0 0;">27/01/2022</div></div>
<div style="left:288px;top:648.38px;width:63px;height:17.4px;overflow:hidden;"><div class="t" style="left:47.74px;top:0;font-size:14.5px;color:#000;transform:scaleX(0.853);transform-origin:0 0;">20</div></div>
<div style="left:480px;top:648.38px;width:91px;height:17.4px;overflow:hidden;"><div class="t" style="left:28.97px;top:0;font-size:14.5px;color:#000;transform:scaleX(0.853);transform-origin:0 0;">2.890.747</div></div>
<div style="left:636px;top:648.38px;width:63px;height:17.4px;overflow:hidden;"><div class="t" style="left:1.50px;top:0;font-size:14.5px;color:#000;transform:scaleX(0.853);transform-origin:0 0;">No. 001/CSJ/2022</div></div>
<div style="left:700px;top:648.38px;width:63px;height:17.4px;overflow:hidden;"><div class="t" style="left:1.50px;top:0;font-size:14.5px;color:#000;transform:scaleX(0.853);transform-origin:0 0;">CHENG YEN</div></div>
<div style="left:764px;top:648.38px;width:63px;height:17.4px;overflow:hidden;"><div class="t" style="left:53.12px;top:0;font-size:14.5px;color:#000;transform:scaleX(0.853);transform-origin:0 0;">1</div></div>
<div style="left:478px;top:599px;width:95px;height:68px;border:2px solid #217346;"></div>
<div style="left:569px;top:663px;width:6px;height:6px;background:#217346;"></div>
<div style="left:568px;top:662px;width:1px;height:1px;background:#fff;"></div>
<div style="left:867px;top:237px;width:1024px;height:19px;background:#e6e6e6;"></div>
<div style="left:867px;top:256px;width:32px;height:732px;background:#e6e6e6;"></div>
<div style="left:1890px;top:237px;width:21px;height:751px;background:#e6e6e6;"></div>
<svg style="left:884px;top:241px" width="13" height="13"><polygon points="12,0 12,12 0,12" fill="#b4b4b4"/></svg>
<div style="left:899px;top:256px;width:991px;height:732px;background:#ffffff;"></div>
<div style="left:899px;top:276px;width:991px;height:1px;background:#d9d9d9;"></div>
<div style="left:899px;top:296px;width:991px;height:1px;background:#d9d9d9;"></div>
<div style="left:899px;top:316px;width:991px;height:1px;background:#d9d9d9;"></div>
<div style="left:899px;top:336px;width:991px;height:1px;background:#d9d9d9;"></div>
<div style="left:899px;top:356px;width:991px;height:1px;background:#d9d9d9;"></div>
<div style="left:899px;top:376px;width:991px;height:1px;background:#d9d9d9;"></div>
<div style="left:899px;top:396px;width:991px;height:1px;background:#d9d9d9;"></div>
<div style="left:899px;top:416px;width:991px;height:1px;background:#d9d9d9;"></div>
<div style="left:899px;top:436px;width:991px;height:1px;background:#d9d9d9;"></div>
<div style="left:899px;top:456px;width:991px;height:1px;background:#d9d9d9;"></div>
<div style="left:899px;top:476px;width:991px;height:1px;background:#d9d9d9;"></div>
<div style="left:899px;top:496px;width:991px;height:1px;background:#d9d9d9;"></div>
<div style="left:899px;top:516px;width:991px;height:1px;background:#d9d9d9;"></div>
<div style="left:899px;top:536px;width:991px;height:1px;background:#d9d9d9;"></div>
<div style="left:899px;top:556px;width:991px;height:1px;background:#d9d9d9;"></div>
<div style="left:899px;top:576px;width:991px;height:1px;background:#d9d9d9;"></div>
<div style="left:899px;top:596px;width:991px;height:1px;background:#d9d9d9;"></div>
<div style="left:899px;top:616px;width:991px;height:1px;background:#d9d9d9;"></div>
<div style="left:899px;top:636px;width:991px;height:1px;background:#d9d9d9;"></div>
<div style="left:899px;top:656px;width:991px;height:1px;background:#d9d9d9;"></div>
<div style="left:899px;top:676px;width:991px;height:1px;background:#d9d9d9;"></div>
<div style="left:899px;top:696px;width:991px;height:1px;background:#d9d9d9;"></div>
<div style="left:899px;top:716px;width:991px;height:1px;background:#d9d9d9;"></div>
<div style="left:899px;top:736px;width:991px;height:1px;background:#d9d9d9;"></div>
<div style="left:899px;top:756px;width:991px;height:1px;background:#d9d9d9;"></div>
<div style="left:899px;top:776px;width:991px;height:1px;background:#d9d9d9;"></div>
<div style="left:899px;top:796px;width:991px;height:1px;background:#d9d9d9;"></div>
<div style="left:899px;top:816px;width:991px;height:1px;background:#d9d9d9;"></div>
<div style="left:899px;top:836px;width:991px;height:1px;background:#d9d9d9;"></div>
<div style="left:899px;top:856px;width:991px;height:1px;background:#d9d9d9;"></div>
<div style="left:899px;top:876px;width:991px;height:1px;background:#d9d9d9;"></div>
<div style="left:899px;top:896px;width:991px;height:1px;background:#d9d9d9;"></div>
<div style="left:899px;top:916px;width:991px;height:1px;background:#d9d9d9;"></div>
<div style="left:899px;top:936px;width:991px;height:1px;background:#d9d9d9;"></div>
<div style="left:899px;top:956px;width:991px;height:1px;background:#d9d9d9;"></div>
<div style="left:899px;top:976px;width:991px;height:1px;background:#d9d9d9;"></div>
<div style="left:899px;top:256px;width:1px;height:732px;background:#d9d9d9;"></div>
<div style="left:960px;top:256px;width:1px;height:732px;background:#d9d9d9;"></div>
<div style="left:1021px;top:256px;width:1px;height:732px;background:#d9d9d9;"></div>
<div style="left:1173px;top:256px;width:1px;height:732px;background:#d9d9d9;"></div>
<div style="left:1268px;top:256px;width:1px;height:732px;background:#d9d9d9;"></div>
<div style="left:1387px;top:256px;width:1px;height:732px;background:#d9d9d9;"></div>
<div style="left:1469px;top:256px;width:1px;height:732px;background:#d9d9d9;"></div>
<div style="left:1572px;top:256px;width:1px;height:732px;background:#d9d9d9;"></div>
<div style="left:1668px;top:256px;width:1px;height:732px;background:#d9d9d9;"></div>
<div style="left:1764px;top:256px;width:1px;height:732px;background:#d9d9d9;"></div>
<div style="left:1826px;top:256px;width:1px;height:732px;background:#d9d9d9;"></div>
<div style="left:899px;top:239px;width:1px;height:17px;background:#c6c6c6;"></div>
<div style="left:960px;top:239px;width:1px;height:17px;background:#c6c6c6;"></div>
<div style="left:1021px;top:239px;width:1px;height:17px;background:#c6c6c6;"></div>
<div style="left:1173px;top:239px;width:1px;height:17px;background:#c6c6c6;"></div>
<div style="left:1268px;top:239px;width:1px;height:17px;background:#c6c6c6;"></div>
<div style="left:1387px;top:239px;width:1px;height:17px;background:#c6c6c6;"></div>
<div style="left:1469px;top:239px;width:1px;height:17px;background:#c6c6c6;"></div>
<div style="left:1572px;top:239px;width:1px;height:17px;background:#c6c6c6;"></div>
<div style="left:1668px;top:239px;width:1px;height:17px;background:#c6c6c6;"></div>
<div style="left:1764px;top:239px;width:1px;height:17px;background:#c6c6c6;"></div>
<div style="left:1826px;top:239px;width:1px;height:17px;background:#c6c6c6;"></div>
<div style="left:867px;top:256px;width:1024px;height:1px;background:#9b9b9b;"></div>
<div style="left:867px;top:296px;width:1024px;height:1px;background:#9b9b9b;"></div>
<div style="left:898px;top:237px;width:1px;height:751px;background:#c6c6c6;"></div>
<div style="left:899px;top:297px;width:927px;height:639px;background:#00b050;"></div>
<div class="t" style="left:925.81px;top:240.78px;font-size:13.5px;color:#262626;transform:scaleX(0.9300);transform-origin:0 0;-webkit-text-stroke:0.1px #262626;">A</div>
<div class="t" style="left:986.81px;top:240.78px;font-size:13.5px;color:#262626;transform:scaleX(0.9300);transform-origin:0 0;-webkit-text-stroke:0.1px #262626;">B</div>
<div class="t" style="left:1092.97px;top:240.78px;font-size:13.5px;color:#262626;transform:scaleX(0.9300);transform-origin:0 0;-webkit-text-stroke:0.1px #262626;">C</div>
<div class="t" style="left:1216.47px;top:240.78px;font-size:13.5px;color:#262626;transform:scaleX(0.9300);transform-origin:0 0;-webkit-text-stroke:0.1px #262626;">D</div>
<div class="t" style="left:1323.81px;top:240.78px;font-size:13.5px;color:#262626;transform:scaleX(0.9300);transform-origin:0 0;-webkit-text-stroke:0.1px #262626;">E</div>
<div class="t" style="left:1424.67px;top:240.78px;font-size:13.5px;color:#262626;transform:scaleX(0.9300);transform-origin:0 0;-webkit-text-stroke:0.1px #262626;">F</div>
<div class="t" style="left:1516.12px;top:240.78px;font-size:13.5px;color:#262626;transform:scaleX(0.9300);transform-origin:0 0;-webkit-text-stroke:0.1px #262626;">G</div>
<div class="t" style="left:1615.97px;top:240.78px;font-size:13.5px;color:#262626;transform:scaleX(0.9300);transform-origin:0 0;-webkit-text-stroke:0.1px #262626;">H</div>
<div class="t" style="left:1714.76px;top:240.78px;font-size:13.5px;color:#262626;transform:scaleX(0.9300);transform-origin:0 0;-webkit-text-stroke:0.1px #262626;">I</div>
<div class="t" style="left:1792.36px;top:240.78px;font-size:13.5px;color:#262626;transform:scaleX(0.9300);transform-origin:0 0;-webkit-text-stroke:0.1px #262626;">J</div>
<div class="t" style="left:879.38px;top:260.24px;font-size:13px;color:#262626;">1</div>
<div class="t" style="left:879.38px;top:280.24px;font-size:13px;color:#262626;">2</div>
<div class="t" style="left:876.28px;top:300.24px;font-size:13px;color:#1e1ebe;transform:scaleX(0.9300);transform-origin:0 0;">13</div>
<div style="left:867px;top:316px;width:32px;height:1px;background:#c6c6c6;"></div>
<div class="t" style="left:876.28px;top:320.24px;font-size:13px;color:#1e1ebe;transform:scaleX(0.9300);transform-origin:0 0;">16</div>
<div style="left:867px;top:336px;width:32px;height:1px;background:#c6c6c6;"></div>
<div class="t" style="left:872.91px;top:340.24px;font-size:13px;color:#1e1ebe;transform:scaleX(0.9300);transform-origin:0 0;">322</div>
<div style="left:867px;top:356px;width:32px;height:1px;background:#c6c6c6;"></div>
<div class="t" style="left:872.91px;top:360.24px;font-size:13px;color:#1e1ebe;transform:scaleX(0.9300);transform-origin:0 0;">331</div>
<div style="left:867px;top:376px;width:32px;height:1px;background:#c6c6c6;"></div>
<div class="t" style="left:872.91px;top:380.24px;font-size:13px;color:#1e1ebe;transform:scaleX(0.9300);transform-origin:0 0;">333</div>
<div style="left:867px;top:396px;width:32px;height:1px;background:#c6c6c6;"></div>
<div class="t" style="left:872.91px;top:400.24px;font-size:13px;color:#1e1ebe;transform:scaleX(0.9300);transform-origin:0 0;">340</div>
<div style="left:867px;top:416px;width:32px;height:1px;background:#c6c6c6;"></div>
<div class="t" style="left:872.91px;top:420.24px;font-size:13px;color:#1e1ebe;transform:scaleX(0.9300);transform-origin:0 0;">418</div>
<div style="left:867px;top:436px;width:32px;height:1px;background:#c6c6c6;"></div>
<div class="t" style="left:872.91px;top:440.24px;font-size:13px;color:#1e1ebe;transform:scaleX(0.9300);transform-origin:0 0;">655</div>
<div style="left:867px;top:456px;width:32px;height:1px;background:#c6c6c6;"></div>
<div class="t" style="left:872.91px;top:460.24px;font-size:13px;color:#1e1ebe;transform:scaleX(0.9300);transform-origin:0 0;">675</div>
<div style="left:867px;top:476px;width:32px;height:1px;background:#c6c6c6;"></div>
<div class="t" style="left:872.91px;top:480.24px;font-size:13px;color:#1e1ebe;transform:scaleX(0.9300);transform-origin:0 0;">800</div>
<div style="left:867px;top:496px;width:32px;height:1px;background:#c6c6c6;"></div>
<div class="t" style="left:872.91px;top:500.24px;font-size:13px;color:#1e1ebe;transform:scaleX(0.9300);transform-origin:0 0;">845</div>
<div style="left:867px;top:516px;width:32px;height:1px;background:#c6c6c6;"></div>
<div class="t" style="left:872.91px;top:520.24px;font-size:13px;color:#1e1ebe;transform:scaleX(0.9300);transform-origin:0 0;">860</div>
<div style="left:867px;top:536px;width:32px;height:1px;background:#c6c6c6;"></div>
<div class="t" style="left:872.91px;top:540.24px;font-size:13px;color:#1e1ebe;transform:scaleX(0.9300);transform-origin:0 0;">920</div>
<div style="left:867px;top:556px;width:32px;height:1px;background:#c6c6c6;"></div>
<div class="t" style="left:872.91px;top:560.24px;font-size:13px;color:#1e1ebe;transform:scaleX(0.9300);transform-origin:0 0;">971</div>
<div style="left:867px;top:576px;width:32px;height:1px;background:#c6c6c6;"></div>
<div class="t" style="left:872.91px;top:580.24px;font-size:13px;color:#1e1ebe;transform:scaleX(0.9300);transform-origin:0 0;">993</div>
<div style="left:867px;top:596px;width:32px;height:1px;background:#c6c6c6;"></div>
<div class="t" style="left:869.55px;top:600.24px;font-size:13px;color:#1e1ebe;transform:scaleX(0.9300);transform-origin:0 0;">1031</div>
<div style="left:867px;top:616px;width:32px;height:1px;background:#c6c6c6;"></div>
<div class="t" style="left:869.55px;top:620.24px;font-size:13px;color:#1e1ebe;transform:scaleX(0.9300);transform-origin:0 0;">1071</div>
<div style="left:867px;top:636px;width:32px;height:1px;background:#c6c6c6;"></div>
<div class="t" style="left:870.00px;top:640.24px;font-size:13px;color:#1e1ebe;transform:scaleX(0.9300);transform-origin:0 0;">1155</div>
<div style="left:867px;top:656px;width:32px;height:1px;background:#c6c6c6;"></div>
<div class="t" style="left:870.00px;top:660.24px;font-size:13px;color:#1e1ebe;transform:scaleX(0.9300);transform-origin:0 0;">1163</div>
<div style="left:867px;top:676px;width:32px;height:1px;background:#c6c6c6;"></div>
<div class="t" style="left:870.00px;top:680.24px;font-size:13px;color:#1e1ebe;transform:scaleX(0.9300);transform-origin:0 0;">1164</div>
<div style="left:867px;top:696px;width:32px;height:1px;background:#c6c6c6;"></div>
<div class="t" style="left:869.55px;top:700.24px;font-size:13px;color:#1e1ebe;transform:scaleX(0.9300);transform-origin:0 0;">1200</div>
<div style="left:867px;top:716px;width:32px;height:1px;background:#c6c6c6;"></div>
<div class="t" style="left:869.55px;top:720.24px;font-size:13px;color:#1e1ebe;transform:scaleX(0.9300);transform-origin:0 0;">1218</div>
<div style="left:867px;top:736px;width:32px;height:1px;background:#c6c6c6;"></div>
<div class="t" style="left:869.55px;top:740.24px;font-size:13px;color:#1e1ebe;transform:scaleX(0.9300);transform-origin:0 0;">1228</div>
<div style="left:867px;top:756px;width:32px;height:1px;background:#c6c6c6;"></div>
<div class="t" style="left:869.55px;top:760.24px;font-size:13px;color:#1e1ebe;transform:scaleX(0.9300);transform-origin:0 0;">1249</div>
<div style="left:867px;top:776px;width:32px;height:1px;background:#c6c6c6;"></div>
<div class="t" style="left:869.55px;top:780.24px;font-size:13px;color:#1e1ebe;transform:scaleX(0.9300);transform-origin:0 0;">1333</div>
<div style="left:867px;top:796px;width:32px;height:1px;background:#c6c6c6;"></div>
<div class="t" style="left:869.55px;top:800.24px;font-size:13px;color:#1e1ebe;transform:scaleX(0.9300);transform-origin:0 0;">1380</div>
<div style="left:867px;top:816px;width:32px;height:1px;background:#c6c6c6;"></div>
<div class="t" style="left:869.55px;top:820.24px;font-size:13px;color:#1e1ebe;transform:scaleX(0.9300);transform-origin:0 0;">1398</div>
<div style="left:867px;top:836px;width:32px;height:1px;background:#c6c6c6;"></div>
<div class="t" style="left:869.55px;top:840.24px;font-size:13px;color:#1e1ebe;transform:scaleX(0.9300);transform-origin:0 0;">1402</div>
<div style="left:867px;top:856px;width:32px;height:1px;background:#c6c6c6;"></div>
<div class="t" style="left:869.55px;top:860.24px;font-size:13px;color:#1e1ebe;transform:scaleX(0.9300);transform-origin:0 0;">1503</div>
<div style="left:867px;top:876px;width:32px;height:1px;background:#c6c6c6;"></div>
<div class="t" style="left:869.55px;top:880.24px;font-size:13px;color:#1e1ebe;transform:scaleX(0.9300);transform-origin:0 0;">1506</div>
<div style="left:867px;top:896px;width:32px;height:1px;background:#c6c6c6;"></div>
<div class="t" style="left:869.55px;top:900.24px;font-size:13px;color:#1e1ebe;transform:scaleX(0.9300);transform-origin:0 0;">1586</div>
<div style="left:867px;top:916px;width:32px;height:1px;background:#c6c6c6;"></div>
<div class="t" style="left:869.55px;top:920.24px;font-size:13px;color:#1e1ebe;transform:scaleX(0.9300);transform-origin:0 0;">1699</div>
<div style="left:867px;top:936px;width:32px;height:1px;background:#c6c6c6;"></div>
<div class="t" style="left:869.55px;top:940.24px;font-size:13px;color:#1e1ebe;transform:scaleX(0.9300);transform-origin:0 0;">1701</div>
<div style="left:867px;top:956px;width:32px;height:1px;background:#c6c6c6;"></div>
<div class="t" style="left:869.55px;top:960.24px;font-size:13px;color:#262626;transform:scaleX(0.9300);transform-origin:0 0;">1703</div>
<div style="left:867px;top:976px;width:32px;height:1px;background:#c6c6c6;"></div>
<div class="t" style="left:869.55px;top:980.24px;font-size:13px;color:#262626;transform:scaleX(0.9300);transform-origin:0 0;">1704</div>
<div style="left:867px;top:996px;width:32px;height:1px;background:#c6c6c6;"></div>
<div style="left:900px;top:280.39px;width:43px;height:15.0px;overflow:hidden;"><div class="t" style="left:3.00px;top:0;font-size:12.5px;color:#000;-webkit-text-stroke:0.25px #000;transform:scaleX(1.06);transform-origin:0 0;">Masa</div></div>
<div style="left:943px;top:278px;width:17px;height:17px;border:1px solid #b9b9b9;background:#fbfbfb;"></div>
<svg style="left:947px;top:284px" width="9" height="6"><polygon points="0,0 8,0 4,5" fill="#555"/></svg>
<div style="left:961px;top:280.39px;width:43px;height:15.0px;overflow:hidden;"><div class="t" style="left:3.00px;top:0;font-size:12.5px;color:#000;-webkit-text-stroke:0.25px #000;transform:scaleX(1.06);transform-origin:0 0;">Kode</div></div>
<div style="left:1004px;top:278px;width:17px;height:17px;border:1px solid #b9b9b9;background:#fbfbfb;"></div>
<svg style="left:1008px;top:284px" width="9" height="6"><polygon points="0,0 8,0 4,5" fill="#555"/></svg>
<div style="left:1022px;top:280.39px;width:134px;height:15.0px;overflow:hidden;"><div class="t" style="left:3.00px;top:0;font-size:12.5px;color:#000;-webkit-text-stroke:0.25px #000;transform:scaleX(0.976);transform-origin:0 0;">NAMA_PENJUAL</div></div>
<div style="left:1156px;top:278px;width:17px;height:17px;border:1px solid #b9b9b9;background:#fbfbfb;"></div>
<svg style="left:1159px;top:282px" width="12" height="10"><polygon points="1,1 9,1 5,5" fill="#555"/><rect x="4" y="5" width="2" height="4" fill="#555"/><rect x="9" y="0" width="1" height="9" fill="#555"/></svg>
<div style="left:1174px;top:280.39px;width:77px;height:15.0px;overflow:hidden;"><div class="t" style="left:3.00px;top:0;font-size:12.5px;color:#000;-webkit-text-stroke:0.25px #000;transform:scaleX(0.976);transform-origin:0 0;">NPWP</div></div>
<div style="left:1251px;top:278px;width:17px;height:17px;border:1px solid #b9b9b9;background:#fbfbfb;"></div>
<svg style="left:1255px;top:284px" width="9" height="6"><polygon points="0,0 8,0 4,5" fill="#555"/></svg>
<div style="left:1269px;top:280.39px;width:101px;height:15.0px;overflow:hidden;"><div class="t" style="left:3.00px;top:0;font-size:12.5px;color:#000;-webkit-text-stroke:0.25px #000;transform:scaleX(0.976);transform-origin:0 0;">NOMOR</div></div>
<div style="left:1370px;top:278px;width:17px;height:17px;border:1px solid #b9b9b9;background:#fbfbfb;"></div>
<svg style="left:1374px;top:284px" width="9" height="6"><polygon points="0,0 8,0 4,5" fill="#555"/></svg>
<div style="left:1388px;top:280.39px;width:64px;height:15.0px;overflow:hidden;"><div class="t" style="left:3.00px;top:0;font-size:12.5px;color:#000;-webkit-text-stroke:0.25px #000;transform:scaleX(0.976);transform-origin:0 0;">TANGGAL</div></div>
<div style="left:1452px;top:278px;width:17px;height:17px;border:1px solid #b9b9b9;background:#fbfbfb;"></div>
<svg style="left:1456px;top:284px" width="9" height="6"><polygon points="0,0 8,0 4,5" fill="#555"/></svg>
<div style="left:1470px;top:280.39px;width:85px;height:15.0px;overflow:hidden;"><div class="t" style="left:3.00px;top:0;font-size:12.5px;color:#000;-webkit-text-stroke:0.25px #000;transform:scaleX(0.976);transform-origin:0 0;">DPP</div></div>
<div style="left:1555px;top:278px;width:17px;height:17px;border:1px solid #b9b9b9;background:#fbfbfb;"></div>
<svg style="left:1559px;top:284px" width="9" height="6"><polygon points="0,0 8,0 4,5" fill="#555"/></svg>
<div style="left:1573px;top:280.39px;width:78px;height:15.0px;overflow:hidden;"><div class="t" style="left:3.00px;top:0;font-size:12.5px;color:#000;-webkit-text-stroke:0.25px #000;transform:scaleX(0.976);transform-origin:0 0;">PPN</div></div>
<div style="left:1651px;top:278px;width:17px;height:17px;border:1px solid #b9b9b9;background:#fbfbfb;"></div>
<svg style="left:1655px;top:284px" width="9" height="6"><polygon points="0,0 8,0 4,5" fill="#555"/></svg>
<div style="left:1669px;top:280.39px;width:78px;height:15.0px;overflow:hidden;"><div class="t" style="left:3.00px;top:0;font-size:12.5px;color:#000;-webkit-text-stroke:0.25px #000;"></div></div>
<div style="left:1747px;top:278px;width:17px;height:17px;border:1px solid #b9b9b9;background:#fbfbfb;"></div>
<svg style="left:1751px;top:284px" width="9" height="6"><polygon points="0,0 8,0 4,5" fill="#555"/></svg>
<div style="left:1765px;top:280.39px;width:44px;height:15.0px;overflow:hidden;"><div class="t" style="left:3.00px;top:0;font-size:12.5px;color:#000;-webkit-text-stroke:0.25px #000;transform:scaleX(1.06);transform-origin:0 0;">PPnBM</div></div>
<div style="left:1809px;top:278px;width:17px;height:17px;border:1px solid #b9b9b9;background:#fbfbfb;"></div>
<svg style="left:1813px;top:284px" width="9" height="6"><polygon points="0,0 8,0 4,5" fill="#555"/></svg>
<div style="left:1827px;top:280.39px;width:63px;height:15.0px;overflow:hidden;"><div class="t" style="left:6.00px;top:0;font-size:12.5px;color:#000;-webkit-text-stroke:0.25px #000;transform:scaleX(1.06);transform-origin:0 0;">Barang / Jasa</div></div>
<div style="left:900px;top:300.39px;width:60px;height:15.0px;overflow:hidden;"><div class="t" style="left:51.05px;top:0;font-size:12.5px;color:#000;-webkit-text-stroke:0.25px #000;">1</div></div>
<div style="left:961px;top:300.39px;width:60px;height:15.0px;overflow:hidden;"><div class="t" style="left:2.00px;top:0;font-size:12.5px;color:#000;-webkit-text-stroke:0.25px #000;">10</div></div>
<div style="left:1022px;top:300.39px;width:151px;height:15.0px;overflow:hidden;"><div class="t" style="left:3.00px;top:0;font-size:12.5px;color:#000;-webkit-text-stroke:0.25px #000;transform:scaleX(0.976);transform-origin:0 0;">PT SUBUR JAYA GEMILANG</div></div>
<div style="left:1174px;top:300.39px;width:94px;height:15.0px;overflow:hidden;"><div class="t" style="left:16.27px;top:0;font-size:12.5px;color:#000;-webkit-text-stroke:0.25px #000;">7,00803E+14</div></div>
<div style="left:1269px;top:300.39px;width:118px;height:15.0px;overflow:hidden;"><div class="t" style="left:10.72px;top:0;font-size:12.5px;color:#000;-webkit-text-stroke:0.25px #000;">100012235093318</div></div>
<div style="left:1388px;top:300.39px;width:81px;height:15.0px;overflow:hidden;"><div class="t" style="left:11.43px;top:0;font-size:12.5px;color:#000;-webkit-text-stroke:0.25px #000;transform:scaleX(1.08);transform-origin:0 0;">11/01/2022</div></div>
<div style="left:1470px;top:300.39px;width:102px;height:15.0px;overflow:hidden;"><div class="t" style="left:39.39px;top:0;font-size:12.5px;color:#000;-webkit-text-stroke:0.25px #000;">8.029.868</div></div>
<div style="left:1573px;top:300.39px;width:95px;height:15.0px;overflow:hidden;"><div class="t" style="left:42.81px;top:0;font-size:12.5px;color:#000;-webkit-text-stroke:0.25px #000;">802.986</div></div>
<div style="left:1669px;top:300.39px;width:95px;height:15.0px;overflow:hidden;"><div class="t" style="left:32.39px;top:0;font-size:12.5px;color:#000;-webkit-text-stroke:0.25px #000;">8.832.854</div></div>
<div style="left:1765px;top:300.39px;width:61px;height:15.0px;overflow:hidden;"><div class="t" style="left:48.34px;top:0;font-size:12.5px;color:#000;-webkit-text-stroke:0.25px #000;">-</div></div>
<div style="left:1827px;top:300.39px;width:63px;height:15.0px;overflow:hidden;"><div class="t" style="left:10.00px;top:0;font-size:12.5px;color:#000;-webkit-text-stroke:0.25px #000;transform:scaleX(1.1);transform-origin:0 0;">Distribusi</div></div>
<div style="left:900px;top:320.39px;width:60px;height:15.0px;overflow:hidden;"><div class="t" style="left:51.05px;top:0;font-size:12.5px;color:#000;-webkit-text-stroke:0.25px #000;">1</div></div>
<div style="left:961px;top:320.39px;width:60px;height:15.0px;overflow:hidden;"><div class="t" style="left:2.00px;top:0;font-size:12.5px;color:#000;-webkit-text-stroke:0.25px #000;">10</div></div>
<div style="left:1022px;top:320.39px;width:151px;height:15.0px;overflow:hidden;"><div class="t" style="left:3.00px;top:0;font-size:12.5px;color:#000;-webkit-text-stroke:0.25px #000;transform:scaleX(0.976);transform-origin:0 0;">PT SUBUR JAYA GEMILANG</div></div>
<div style="left:1174px;top:320.39px;width:94px;height:15.0px;overflow:hidden;"><div class="t" style="left:16.27px;top:0;font-size:12.5px;color:#000;-webkit-text-stroke:0.25px #000;">7,00803E+14</div></div>
<div style="left:1269px;top:320.39px;width:118px;height:15.0px;overflow:hidden;"><div class="t" style="left:10.72px;top:0;font-size:12.5px;color:#000;-webkit-text-stroke:0.25px #000;">100012235093319</div></div>
<div style="left:1388px;top:320.39px;width:81px;height:15.0px;overflow:hidden;"><div class="t" style="left:10.43px;top:0;font-size:12.5px;color:#000;-webkit-text-stroke:0.25px #000;transform:scaleX(1.08);transform-origin:0 0;">20/01/2022</div></div>
<div style="left:1470px;top:320.39px;width:102px;height:15.0px;overflow:hidden;"><div class="t" style="left:39.39px;top:0;font-size:12.5px;color:#000;-webkit-text-stroke:0.25px #000;">4.761.846</div></div>
<div style="left:1573px;top:320.39px;width:95px;height:15.0px;overflow:hidden;"><div class="t" style="left:42.81px;top:0;font-size:12.5px;color:#000;-webkit-text-stroke:0.25px #000;">476.184</div></div>
<div style="left:1669px;top:320.39px;width:95px;height:15.0px;overflow:hidden;"><div class="t" style="left:32.39px;top:0;font-size:12.5px;color:#000;-webkit-text-stroke:0.25px #000;">5.238.030</div></div>
<div style="left:1765px;top:320.39px;width:61px;height:15.0px;overflow:hidden;"><div class="t" style="left:48.34px;top:0;font-size:12.5px;color:#000;-webkit-text-stroke:0.25px #000;">-</div></div>
<div style="left:1827px;top:320.39px;width:63px;height:15.0px;overflow:hidden;"><div class="t" style="left:10.00px;top:0;font-size:12.5px;color:#000;-webkit-text-stroke:0.25px #000;transform:scaleX(1.1);transform-origin:0 0;">Distribusi</div></div>
<div style="left:900px;top:340.39px;width:60px;height:15.0px;overflow:hidden;"><div class="t" style="left:51.05px;top:0;font-size:12.5px;color:#000;-webkit-text-stroke:0.25px #000;">2</div></div>
<div style="left:961px;top:340.39px;width:60px;height:15.0px;overflow:hidden;"><div class="t" style="left:2.00px;top:0;font-size:12.5px;color:#000;-webkit-text-stroke:0.25px #000;">10</div></div>
<div style="left:1022px;top:340.39px;width:151px;height:15.0px;overflow:hidden;"><div class="t" style="left:3.00px;top:0;font-size:12.5px;color:#000;-webkit-text-stroke:0.25px #000;transform:scaleX(0.976);transform-origin:0 0;">PT SUBUR JAYA GEMILANG</div></div>
<div style="left:1174px;top:340.39px;width:94px;height:15.0px;overflow:hidden;"><div class="t" style="left:16.27px;top:0;font-size:12.5px;color:#000;-webkit-text-stroke:0.25px #000;">7,00803E+14</div></div>
<div style="left:1269px;top:340.39px;width:118px;height:15.0px;overflow:hidden;"><div class="t" style="left:10.72px;top:0;font-size:12.5px;color:#000;-webkit-text-stroke:0.25px #000;">100012235131689</div></div>
<div style="left:1388px;top:340.39px;width:81px;height:15.0px;overflow:hidden;"><div class="t" style="left:10.43px;top:0;font-size:12.5px;color:#000;-webkit-text-stroke:0.25px #000;transform:scaleX(1.08);transform-origin:0 0;">04/02/2022</div></div>
<div style="left:1470px;top:340.39px;width:102px;height:15.0px;overflow:hidden;"><div class="t" style="left:39.39px;top:0;font-size:12.5px;color:#000;-webkit-text-stroke:0.25px #000;">8.563.710</div></div>
<div style="left:1573px;top:340.39px;width:95px;height:15.0px;overflow:hidden;"><div class="t" style="left:42.81px;top:0;font-size:12.5px;color:#000;-webkit-text-stroke:0.25px #000;">856.371</div></div>
<div style="left:1669px;top:340.39px;width:95px;height:15.0px;overflow:hidden;"><div class="t" style="left:32.39px;top:0;font-size:12.5px;color:#000;-webkit-text-stroke:0.25px #000;">9.420.081</div></div>
<div style="left:1765px;top:340.39px;width:61px;height:15.0px;overflow:hidden;"><div class="t" style="left:48.34px;top:0;font-size:12.5px;color:#000;-webkit-text-stroke:0.25px #000;">-</div></div>
<div style="left:1827px;top:340.39px;width:63px;height:15.0px;overflow:hidden;"><div class="t" style="left:10.00px;top:0;font-size:12.5px;color:#000;-webkit-text-stroke:0.25px #000;transform:scaleX(1.1);transform-origin:0 0;">Distribusi</div></div>
<div style="left:900px;top:360.39px;width:60px;height:15.0px;overflow:hidden;"><div class="t" style="left:51.05px;top:0;font-size:12.5px;color:#000;-webkit-text-stroke:0.25px #000;">2</div></div>
<div style="left:961px;top:360.39px;width:60px;height:15.0px;overflow:hidden;"><div class="t" style="left:2.00px;top:0;font-size:12.5px;color:#000;-webkit-text-stroke:0.25px #000;">10</div></div>
<div style="left:1022px;top:360.39px;width:151px;height:15.0px;overflow:hidden;"><div class="t" style="left:3.00px;top:0;font-size:12.5px;color:#000;-webkit-text-stroke:0.25px #000;transform:scaleX(0.976);transform-origin:0 0;">PT SUBUR JAYA GEMILANG</div></div>
<div style="left:1174px;top:360.39px;width:94px;height:15.0px;overflow:hidden;"><div class="t" style="left:16.27px;top:0;font-size:12.5px;color:#000;-webkit-text-stroke:0.25px #000;">7,00803E+14</div></div>
<div style="left:1269px;top:360.39px;width:118px;height:15.0px;overflow:hidden;"><div class="t" style="left:10.72px;top:0;font-size:12.5px;color:#000;-webkit-text-stroke:0.25px #000;">100012235132594</div></div>
<div style="left:1388px;top:360.39px;width:81px;height:15.0px;overflow:hidden;"><div class="t" style="left:10.43px;top:0;font-size:12.5px;color:#000;-webkit-text-stroke:0.25px #000;transform:scaleX(1.08);transform-origin:0 0;">16/02/2022</div></div>
<div style="left:1470px;top:360.39px;width:102px;height:15.0px;overflow:hidden;"><div class="t" style="left:32.44px;top:0;font-size:12.5px;color:#000;-webkit-text-stroke:0.25px #000;">97.513.902</div></div>
<div style="left:1573px;top:360.39px;width:95px;height:15.0px;overflow:hidden;"><div class="t" style="left:32.39px;top:0;font-size:12.5px;color:#000;-webkit-text-stroke:0.25px #000;">9.751.390</div></div>
<div style="left:1669px;top:360.39px;width:95px;height:15.0px;overflow:hidden;"><div class="t" style="left:18.49px;top:0;font-size:12.5px;color:#000;-webkit-text-stroke:0.25px #000;">107.265.292</div></div>
<div style="left:1765px;top:360.39px;width:61px;height:15.0px;overflow:hidden;"><div class="t" style="left:48.34px;top:0;font-size:12.5px;color:#000;-webkit-text-stroke:0.25px #000;">-</div></div>
<div style="left:1827px;top:360.39px;width:63px;height:15.0px;overflow:hidden;"><div class="t" style="left:10.00px;top:0;font-size:12.5px;color:#000;-webkit-text-stroke:0.25px #000;transform:scaleX(1.1);transform-origin:0 0;">Distribusi</div></div>
<div style="left:900px;top:380.39px;width:60px;height:15.0px;overflow:hidden;"><div class="t" style="left:51.05px;top:0;font-size:12.5px;color:#000;-webkit-text-stroke:0.25px #000;">2</div></div>
<div style="left:961px;top:380.39px;width:60px;height:15.0px;overflow:hidden;"><div class="t" style="left:2.00px;top:0;font-size:12.5px;color:#000;-webkit-text-stroke:0.25px #000;">10</div></div>
<div style="left:1022px;top:380.39px;width:151px;height:15.0px;overflow:hidden;"><div class="t" style="left:3.00px;top:0;font-size:12.5px;color:#000;-webkit-text-stroke:0.25px #000;transform:scaleX(0.976);transform-origin:0 0;">PT SUBUR JAYA GEMILANG</div></div>
<div style="left:1174px;top:380.39px;width:94px;height:15.0px;overflow:hidden;"><div class="t" style="left:16.27px;top:0;font-size:12.5px;color:#000;-webkit-text-stroke:0.25px #000;">7,00803E+14</div></div>
<div style="left:1269px;top:380.39px;width:118px;height:15.0px;overflow:hidden;"><div class="t" style="left:10.72px;top:0;font-size:12.5px;color:#000;-webkit-text-stroke:0.25px #000;">100012235132881</div></div>
<div style="left:1388px;top:380.39px;width:81px;height:15.0px;overflow:hidden;"><div class="t" style="left:10.43px;top:0;font-size:12.5px;color:#000;-webkit-text-stroke:0.25px #000;transform:scaleX(1.08);transform-origin:0 0;">22/02/2022</div></div>
<div style="left:1470px;top:380.39px;width:102px;height:15.0px;overflow:hidden;"><div class="t" style="left:32.44px;top:0;font-size:12.5px;color:#000;-webkit-text-stroke:0.25px #000;">13.499.733</div></div>
<div style="left:1573px;top:380.39px;width:95px;height:15.0px;overflow:hidden;"><div class="t" style="left:32.39px;top:0;font-size:12.5px;color:#000;-webkit-text-stroke:0.25px #000;">1.349.973</div></div>
<div style="left:1669px;top:380.39px;width:95px;height:15.0px;overflow:hidden;"><div class="t" style="left:25.44px;top:0;font-size:12.5px;color:#000;-webkit-text-stroke:0.25px #000;">14.849.706</div></div>
<div style="left:1765px;top:380.39px;width:61px;height:15.0px;overflow:hidden;"><div class="t" style="left:48.34px;top:0;font-size:12.5px;color:#000;-webkit-text-stroke:0.25px #000;">-</div></div>
<div style="left:1827px;top:380.39px;width:63px;height:15.0px;overflow:hidden;"><div class="t" style="left:10.00px;top:0;font-size:12.5px;color:#000;-webkit-text-stroke:0.25px #000;transform:scaleX(1.1);transform-origin:0 0;">Distribusi</div></div>
<div style="left:900px;top:400.39px;width:60px;height:15.0px;overflow:hidden;"><div class="t" style="left:51.05px;top:0;font-size:12.5px;color:#000;-webkit-text-stroke:0.25px #000;">2</div></div>
<div style="left:961px;top:400.39px;width:60px;height:15.0px;overflow:hidden;"><div class="t" style="left:2.00px;top:0;font-size:12.5px;color:#000;-webkit-text-stroke:0.25px #000;">10</div></div>
<div style="left:1022px;top:400.39px;width:151px;height:15.0px;overflow:hidden;"><div class="t" style="left:3.00px;top:0;font-size:12.5px;color:#000;-webkit-text-stroke:0.25px #000;transform:scaleX(0.976);transform-origin:0 0;">PT SUBUR JAYA GEMILANG</div></div>
<div style="left:1174px;top:400.39px;width:94px;height:15.0px;overflow:hidden;"><div class="t" style="left:16.27px;top:0;font-size:12.5px;color:#000;-webkit-text-stroke:0.25px #000;">7,00803E+14</div></div>
<div style="left:1269px;top:400.39px;width:118px;height:15.0px;overflow:hidden;"><div class="t" style="left:10.72px;top:0;font-size:12.5px;color:#000;-webkit-text-stroke:0.25px #000;">100012235133202</div></div>
<div style="left:1388px;top:400.39px;width:81px;height:15.0px;overflow:hidden;"><div class="t" style="left:10.43px;top:0;font-size:12.5px;color:#000;-webkit-text-stroke:0.25px #000;transform:scaleX(1.08);transform-origin:0 0;">25/02/2022</div></div>
<div style="left:1470px;top:400.39px;width:102px;height:15.0px;overflow:hidden;"><div class="t" style="left:33.37px;top:0;font-size:12.5px;color:#000;-webkit-text-stroke:0.25px #000;">11.546.184</div></div>
<div style="left:1573px;top:400.39px;width:95px;height:15.0px;overflow:hidden;"><div class="t" style="left:32.39px;top:0;font-size:12.5px;color:#000;-webkit-text-stroke:0.25px #000;">1.154.618</div></div>
<div style="left:1669px;top:400.39px;width:95px;height:15.0px;overflow:hidden;"><div class="t" style="left:25.44px;top:0;font-size:12.5px;color:#000;-webkit-text-stroke:0.25px #000;">12.700.802</div></div>
<div style="left:1765px;top:400.39px;width:61px;height:15.0px;overflow:hidden;"><div class="t" style="left:48.34px;top:0;font-size:12.5px;color:#000;-webkit-text-stroke:0.25px #000;">-</div></div>
<div style="left:1827px;top:400.39px;width:63px;height:15.0px;overflow:hidden;"><div class="t" style="left:10.00px;top:0;font-size:12.5px;color:#000;-webkit-text-stroke:0.25px #000;transform:scaleX(1.1);transform-origin:0 0;">Distribusi</div></div>
<div style="left:900px;top:420.39px;width:60px;height:15.0px;overflow:hidden;"><div class="t" style="left:51.05px;top:0;font-size:12.5px;color:#000;-webkit-text-stroke:0.25px #000;">3</div></div>
<div style="left:961px;top:420.39px;width:60px;height:15.0px;overflow:hidden;"><div class="t" style="left:2.00px;top:0;font-size:12.5px;color:#000;-webkit-text-stroke:0.25px #000;">10</div></div>
<div style="left:1022px;top:420.39px;width:151px;height:15.0px;overflow:hidden;"><div class="t" style="left:3.00px;top:0;font-size:12.5px;color:#000;-webkit-text-stroke:0.25px #000;transform:scaleX(0.976);transform-origin:0 0;">PT SUBUR JAYA GEMILANG</div></div>
<div style="left:1174px;top:420.39px;width:94px;height:15.0px;overflow:hidden;"><div class="t" style="left:16.27px;top:0;font-size:12.5px;color:#000;-webkit-text-stroke:0.25px #000;">7,00803E+14</div></div>
<div style="left:1269px;top:420.39px;width:118px;height:15.0px;overflow:hidden;"><div class="t" style="left:10.72px;top:0;font-size:12.5px;color:#000;-webkit-text-stroke:0.25px #000;">100012235169446</div></div>
<div style="left:1388px;top:420.39px;width:81px;height:15.0px;overflow:hidden;"><div class="t" style="left:10.43px;top:0;font-size:12.5px;color:#000;-webkit-text-stroke:0.25px #000;transform:scaleX(1.08);transform-origin:0 0;">02/03/2022</div></div>
<div style="left:1470px;top:420.39px;width:102px;height:15.0px;overflow:hidden;"><div class="t" style="left:39.39px;top:0;font-size:12.5px;color:#000;-webkit-text-stroke:0.25px #000;">4.679.920</div></div>
<div style="left:1573px;top:420.39px;width:95px;height:15.0px;overflow:hidden;"><div class="t" style="left:42.81px;top:0;font-size:12.5px;color:#000;-webkit-text-stroke:0.25px #000;">467.992</div></div>
<div style="left:1669px;top:420.39px;width:95px;height:15.0px;overflow:hidden;"><div class="t" style="left:32.39px;top:0;font-size:12.5px;color:#000;-webkit-text-stroke:0.25px #000;">5.147.912</div></div>
<div style="left:1765px;top:420.39px;width:61px;height:15.0px;overflow:hidden;"><div class="t" style="left:48.34px;top:0;font-size:12.5px;color:#000;-webkit-text-stroke:0.25px #000;">-</div></div>
<div style="left:1827px;top:420.39px;width:63px;height:15.0px;overflow:hidden;"><div class="t" style="left:10.00px;top:0;font-size:12.5px;color:#000;-webkit-text-stroke:0.25px #000;transform:scaleX(1.1);transform-origin:0 0;">Distribusi</div></div>
<div style="left:900px;top:440.39px;width:60px;height:15.0px;overflow:hidden;"><div class="t" style="left:51.05px;top:0;font-size:12.5px;color:#000;-webkit-text-stroke:0.25px #000;">4</div></div>
<div style="left:961px;top:440.39px;width:60px;height:15.0px;overflow:hidden;"><div class="t" style="left:2.00px;top:0;font-size:12.5px;color:#000;-webkit-text-stroke:0.25px #000;">10</div></div>
<div style="left:1022px;top:440.39px;width:151px;height:15.0px;overflow:hidden;"><div class="t" style="left:3.00px;top:0;font-size:12.5px;color:#000;-webkit-text-stroke:0.25px #000;transform:scaleX(0.976);transform-origin:0 0;">PT SUBUR JAYA GEMILANG</div></div>
<div style="left:1174px;top:440.39px;width:94px;height:15.0px;overflow:hidden;"><div class="t" style="left:16.27px;top:0;font-size:12.5px;color:#000;-webkit-text-stroke:0.25px #000;">7,00803E+14</div></div>
<div style="left:1269px;top:440.39px;width:118px;height:15.0px;overflow:hidden;"><div class="t" style="left:40.27px;top:0;font-size:12.5px;color:#000;-webkit-text-stroke:0.25px #000;">1,00042E+14</div></div>
<div style="left:1388px;top:440.39px;width:81px;height:15.0px;overflow:hidden;"><div class="t" style="left:10.43px;top:0;font-size:12.5px;color:#000;-webkit-text-stroke:0.25px #000;transform:scaleX(1.08);transform-origin:0 0;">16/04/2022</div></div>
<div style="left:1470px;top:440.39px;width:102px;height:15.0px;overflow:hidden;"><div class="t" style="left:39.39px;top:0;font-size:12.5px;color:#000;-webkit-text-stroke:0.25px #000;">7.020.692</div></div>
<div style="left:1573px;top:440.39px;width:95px;height:15.0px;overflow:hidden;"><div class="t" style="left:42.81px;top:0;font-size:12.5px;color:#000;-webkit-text-stroke:0.25px #000;">772.276</div></div>
<div style="left:1669px;top:440.39px;width:95px;height:15.0px;overflow:hidden;"><div class="t" style="left:32.39px;top:0;font-size:12.5px;color:#000;-webkit-text-stroke:0.25px #000;">7.792.968</div></div>
<div style="left:1765px;top:440.39px;width:61px;height:15.0px;overflow:hidden;"><div class="t" style="left:48.34px;top:0;font-size:12.5px;color:#000;-webkit-text-stroke:0.25px #000;">-</div></div>
<div style="left:1827px;top:440.39px;width:63px;height:15.0px;overflow:hidden;"><div class="t" style="left:10.00px;top:0;font-size:12.5px;color:#000;-webkit-text-stroke:0.25px #000;transform:scaleX(1.1);transform-origin:0 0;">Distribusi</div></div>
<div style="left:900px;top:460.39px;width:60px;height:15.0px;overflow:hidden;"><div class="t" style="left:51.05px;top:0;font-size:12.5px;color:#000;-webkit-text-stroke:0.25px #000;">4</div></div>
<div style="left:961px;top:460.39px;width:60px;height:15.0px;overflow:hidden;"><div class="t" style="left:2.00px;top:0;font-size:12.5px;color:#000;-webkit-text-stroke:0.25px #000;">10</div></div>
<div style="left:1022px;top:460.39px;width:151px;height:15.0px;overflow:hidden;"><div class="t" style="left:3.00px;top:0;font-size:12.5px;color:#000;-webkit-text-stroke:0.25px #000;transform:scaleX(0.976);transform-origin:0 0;">PT SUBUR JAYA GEMILANG</div></div>
<div style="left:1174px;top:460.39px;width:94px;height:15.0px;overflow:hidden;"><div class="t" style="left:16.27px;top:0;font-size:12.5px;color:#000;-webkit-text-stroke:0.25px #000;">7,00803E+14</div></div>
<div style="left:1269px;top:460.39px;width:118px;height:15.0px;overflow:hidden;"><div class="t" style="left:40.27px;top:0;font-size:12.5px;color:#000;-webkit-text-stroke:0.25px #000;">1,00042E+14</div></div>
<div style="left:1388px;top:460.39px;width:81px;height:15.0px;overflow:hidden;"><div class="t" style="left:10.43px;top:0;font-size:12.5px;color:#000;-webkit-text-stroke:0.25px #000;transform:scaleX(1.08);transform-origin:0 0;">18/04/2022</div></div>
<div style="left:1470px;top:460.39px;width:102px;height:15.0px;overflow:hidden;"><div class="t" style="left:32.44px;top:0;font-size:12.5px;color:#000;-webkit-text-stroke:0.25px #000;">30.637.997</div></div>
<div style="left:1573px;top:460.39px;width:95px;height:15.0px;overflow:hidden;"><div class="t" style="left:32.39px;top:0;font-size:12.5px;color:#000;-webkit-text-stroke:0.25px #000;">3.370.179</div></div>
<div style="left:1669px;top:460.39px;width:95px;height:15.0px;overflow:hidden;"><div class="t" style="left:25.44px;top:0;font-size:12.5px;color:#000;-webkit-text-stroke:0.25px #000;">34.008.176</div></div>
<div style="left:1765px;top:460.39px;width:61px;height:15.0px;overflow:hidden;"><div class="t" style="left:48.34px;top:0;font-size:12.5px;color:#000;-webkit-text-stroke:0.25px #000;">-</div></div>
<div style="left:1827px;top:460.39px;width:63px;height:15.0px;overflow:hidden;"><div class="t" style="left:10.00px;top:0;font-size:12.5px;color:#000;-webkit-text-stroke:0.25px #000;transform:scaleX(1.1);transform-origin:0 0;">Distribusi</div></div>
<div style="left:900px;top:480.39px;width:60px;height:15.0px;overflow:hidden;"><div class="t" style="left:51.05px;top:0;font-size:12.5px;color:#000;-webkit-text-stroke:0.25px #000;">5</div></div>
<div style="left:961px;top:480.39px;width:60px;height:15.0px;overflow:hidden;"><div class="t" style="left:2.00px;top:0;font-size:12.5px;color:#000;-webkit-text-stroke:0.25px #000;">10</div></div>
<div style="left:1022px;top:480.39px;width:151px;height:15.0px;overflow:hidden;"><div class="t" style="left:3.00px;top:0;font-size:12.5px;color:#000;-webkit-text-stroke:0.25px #000;transform:scaleX(0.976);transform-origin:0 0;">PT SUBUR JAYA GEMILANG</div></div>
<div style="left:1174px;top:480.39px;width:94px;height:15.0px;overflow:hidden;"><div class="t" style="left:16.27px;top:0;font-size:12.5px;color:#000;-webkit-text-stroke:0.25px #000;">7,00803E+14</div></div>
<div style="left:1269px;top:480.39px;width:118px;height:15.0px;overflow:hidden;"><div class="t" style="left:10.72px;top:0;font-size:12.5px;color:#000;-webkit-text-stroke:0.25px #000;">100042244898987</div></div>
<div style="left:1388px;top:480.39px;width:81px;height:15.0px;overflow:hidden;"><div class="t" style="left:10.43px;top:0;font-size:12.5px;color:#000;-webkit-text-stroke:0.25px #000;transform:scaleX(1.08);transform-origin:0 0;">17/05/2022</div></div>
<div style="left:1470px;top:480.39px;width:102px;height:15.0px;overflow:hidden;"><div class="t" style="left:32.44px;top:0;font-size:12.5px;color:#000;-webkit-text-stroke:0.25px #000;">10.263.667</div></div>
<div style="left:1573px;top:480.39px;width:95px;height:15.0px;overflow:hidden;"><div class="t" style="left:32.39px;top:0;font-size:12.5px;color:#000;-webkit-text-stroke:0.25px #000;">1.129.003</div></div>
<div style="left:1669px;top:480.39px;width:95px;height:15.0px;overflow:hidden;"><div class="t" style="left:26.37px;top:0;font-size:12.5px;color:#000;-webkit-text-stroke:0.25px #000;">11.392.670</div></div>
<div style="left:1765px;top:480.39px;width:61px;height:15.0px;overflow:hidden;"><div class="t" style="left:48.34px;top:0;font-size:12.5px;color:#000;-webkit-text-stroke:0.25px #000;">-</div></div>
<div style="left:1827px;top:480.39px;width:63px;height:15.0px;overflow:hidden;"><div class="t" style="left:10.00px;top:0;font-size:12.5px;color:#000;-webkit-text-stroke:0.25px #000;transform:scaleX(1.1);transform-origin:0 0;">Distribusi</div></div>
<div style="left:900px;top:500.39px;width:60px;height:15.0px;overflow:hidden;"><div class="t" style="left:51.05px;top:0;font-size:12.5px;color:#000;-webkit-text-stroke:0.25px #000;">6</div></div>
<div style="left:961px;top:500.39px;width:60px;height:15.0px;overflow:hidden;"><div class="t" style="left:2.00px;top:0;font-size:12.5px;color:#000;-webkit-text-stroke:0.25px #000;">10</div></div>
<div style="left:1022px;top:500.39px;width:151px;height:15.0px;overflow:hidden;"><div class="t" style="left:3.00px;top:0;font-size:12.5px;color:#000;-webkit-text-stroke:0.25px #000;transform:scaleX(0.976);transform-origin:0 0;">PT SUBUR JAYA GEMILANG</div></div>
<div style="left:1174px;top:500.39px;width:94px;height:15.0px;overflow:hidden;"><div class="t" style="left:16.27px;top:0;font-size:12.5px;color:#000;-webkit-text-stroke:0.25px #000;">7,00803E+14</div></div>
<div style="left:1269px;top:500.39px;width:118px;height:15.0px;overflow:hidden;"><div class="t" style="left:10.72px;top:0;font-size:12.5px;color:#000;-webkit-text-stroke:0.25px #000;">100062262495864</div></div>
<div style="left:1388px;top:500.39px;width:81px;height:15.0px;overflow:hidden;"><div class="t" style="left:10.43px;top:0;font-size:12.5px;color:#000;-webkit-text-stroke:0.25px #000;transform:scaleX(1.08);transform-origin:0 0;">09/06/2022</div></div>
<div style="left:1470px;top:500.39px;width:102px;height:15.0px;overflow:hidden;"><div class="t" style="left:51.67px;top:0;font-size:12.5px;color:#000;-webkit-text-stroke:0.25px #000;">111.273</div></div>
<div style="left:1573px;top:500.39px;width:95px;height:15.0px;overflow:hidden;"><div class="t" style="left:49.77px;top:0;font-size:12.5px;color:#000;-webkit-text-stroke:0.25px #000;">12.240</div></div>
<div style="left:1669px;top:500.39px;width:95px;height:15.0px;overflow:hidden;"><div class="t" style="left:42.81px;top:0;font-size:12.5px;color:#000;-webkit-text-stroke:0.25px #000;">123.513</div></div>
<div style="left:1765px;top:500.39px;width:61px;height:15.0px;overflow:hidden;"><div class="t" style="left:48.34px;top:0;font-size:12.5px;color:#000;-webkit-text-stroke:0.25px #000;">-</div></div>
<div style="left:1827px;top:500.39px;width:63px;height:15.0px;overflow:hidden;"><div class="t" style="left:10.00px;top:0;font-size:12.5px;color:#000;-webkit-text-stroke:0.25px #000;transform:scaleX(1.1);transform-origin:0 0;">Distribusi</div></div>
<div style="left:900px;top:520.39px;width:60px;height:15.0px;overflow:hidden;"><div class="t" style="left:51.05px;top:0;font-size:12.5px;color:#000;-webkit-text-stroke:0.25px #000;">6</div></div>
<div style="left:961px;top:520.39px;width:60px;height:15.0px;overflow:hidden;"><div class="t" style="left:2.00px;top:0;font-size:12.5px;color:#000;-webkit-text-stroke:0.25px #000;">10</div></div>
<div style="left:1022px;top:520.39px;width:151px;height:15.0px;overflow:hidden;"><div class="t" style="left:3.00px;top:0;font-size:12.5px;color:#000;-webkit-text-stroke:0.25px #000;transform:scaleX(0.976);transform-origin:0 0;">PT SUBUR JAYA GEMILANG</div></div>
<div style="left:1174px;top:520.39px;width:94px;height:15.0px;overflow:hidden;"><div class="t" style="left:16.27px;top:0;font-size:12.5px;color:#000;-webkit-text-stroke:0.25px #000;">7,00803E+14</div></div>
<div style="left:1269px;top:520.39px;width:118px;height:15.0px;overflow:hidden;"><div class="t" style="left:10.72px;top:0;font-size:12.5px;color:#000;-webkit-text-stroke:0.25px #000;">100062262494951</div></div>
<div style="left:1388px;top:520.39px;width:81px;height:15.0px;overflow:hidden;"><div class="t" style="left:10.43px;top:0;font-size:12.5px;color:#000;-webkit-text-stroke:0.25px #000;transform:scaleX(1.08);transform-origin:0 0;">06/06/2022</div></div>
<div style="left:1470px;top:520.39px;width:102px;height:15.0px;overflow:hidden;"><div class="t" style="left:32.44px;top:0;font-size:12.5px;color:#000;-webkit-text-stroke:0.25px #000;">17.724.505</div></div>
<div style="left:1573px;top:520.39px;width:95px;height:15.0px;overflow:hidden;"><div class="t" style="left:32.39px;top:0;font-size:12.5px;color:#000;-webkit-text-stroke:0.25px #000;">1.949.695</div></div>
<div style="left:1669px;top:520.39px;width:95px;height:15.0px;overflow:hidden;"><div class="t" style="left:25.44px;top:0;font-size:12.5px;color:#000;-webkit-text-stroke:0.25px #000;">19.674.200</div></div>
<div style="left:1765px;top:520.39px;width:61px;height:15.0px;overflow:hidden;"><div class="t" style="left:48.34px;top:0;font-size:12.5px;color:#000;-webkit-text-stroke:0.25px #000;">-</div></div>
<div style="left:1827px;top:520.39px;width:63px;height:15.0px;overflow:hidden;"><div class="t" style="left:10.00px;top:0;font-size:12.5px;color:#000;-webkit-text-stroke:0.25px #000;transform:scaleX(1.1);transform-origin:0 0;">Distribusi</div></div>
<div style="left:900px;top:540.39px;width:60px;height:15.0px;overflow:hidden;"><div class="t" style="left:51.05px;top:0;font-size:12.5px;color:#000;-webkit-text-stroke:0.25px #000;">7</div></div>
<div style="left:961px;top:540.39px;width:60px;height:15.0px;overflow:hidden;"><div class="t" style="left:2.00px;top:0;font-size:12.5px;color:#000;-webkit-text-stroke:0.25px #000;">10</div></div>
<div style="left:1022px;top:540.39px;width:151px;height:15.0px;overflow:hidden;"><div class="t" style="left:3.00px;top:0;font-size:12.5px;color:#000;-webkit-text-stroke:0.25px #000;transform:scaleX(0.976);transform-origin:0 0;">PT SUBUR JAYA GEMILANG</div></div>
<div style="left:1174px;top:540.39px;width:94px;height:15.0px;overflow:hidden;"><div class="t" style="left:16.27px;top:0;font-size:12.5px;color:#000;-webkit-text-stroke:0.25px #000;">7,00803E+14</div></div>
<div style="left:1269px;top:540.39px;width:118px;height:15.0px;overflow:hidden;"><div class="t" style="left:10.72px;top:0;font-size:12.5px;color:#000;-webkit-text-stroke:0.25px #000;">100062262537517</div></div>
<div style="left:1388px;top:540.39px;width:81px;height:15.0px;overflow:hidden;"><div class="t" style="left:10.43px;top:0;font-size:12.5px;color:#000;-webkit-text-stroke:0.25px #000;transform:scaleX(1.08);transform-origin:0 0;">07/07/2022</div></div>
<div style="left:1470px;top:540.39px;width:102px;height:15.0px;overflow:hidden;"><div class="t" style="left:39.39px;top:0;font-size:12.5px;color:#000;-webkit-text-stroke:0.25px #000;">2.086.000</div></div>
<div style="left:1573px;top:540.39px;width:95px;height:15.0px;overflow:hidden;"><div class="t" style="left:42.81px;top:0;font-size:12.5px;color:#000;-webkit-text-stroke:0.25px #000;">229.460</div></div>
<div style="left:1669px;top:540.39px;width:95px;height:15.0px;overflow:hidden;"><div class="t" style="left:32.39px;top:0;font-size:12.5px;color:#000;-webkit-text-stroke:0.25px #000;">2.315.460</div></div>
<div style="left:1765px;top:540.39px;width:61px;height:15.0px;overflow:hidden;"><div class="t" style="left:48.34px;top:0;font-size:12.5px;color:#000;-webkit-text-stroke:0.25px #000;">-</div></div>
<div style="left:1827px;top:540.39px;width:63px;height:15.0px;overflow:hidden;"><div class="t" style="left:10.00px;top:0;font-size:12.5px;color:#000;-webkit-text-stroke:0.25px #000;transform:scaleX(1.1);transform-origin:0 0;">Distribusi</div></div>
<div style="left:900px;top:560.39px;width:60px;height:15.0px;overflow:hidden;"><div class="t" style="left:51.05px;top:0;font-size:12.5px;color:#000;-webkit-text-stroke:0.25px #000;">7</div></div>
<div style="left:961px;top:560.39px;width:60px;height:15.0px;overflow:hidden;"><div class="t" style="left:2.00px;top:0;font-size:12.5px;color:#000;-webkit-text-stroke:0.25px #000;">10</div></div>
<div style="left:1022px;top:560.39px;width:151px;height:15.0px;overflow:hidden;"><div class="t" style="left:3.00px;top:0;font-size:12.5px;color:#000;-webkit-text-stroke:0.25px #000;transform:scaleX(0.976);transform-origin:0 0;">PT SUBUR JAYA GEMILANG</div></div>
<div style="left:1174px;top:560.39px;width:94px;height:15.0px;overflow:hidden;"><div class="t" style="left:16.27px;top:0;font-size:12.5px;color:#000;-webkit-text-stroke:0.25px #000;">7,00803E+14</div></div>
<div style="left:1269px;top:560.39px;width:118px;height:15.0px;overflow:hidden;"><div class="t" style="left:10.72px;top:0;font-size:12.5px;color:#000;-webkit-text-stroke:0.25px #000;">100072255414848</div></div>
<div style="left:1388px;top:560.39px;width:81px;height:15.0px;overflow:hidden;"><div class="t" style="left:10.43px;top:0;font-size:12.5px;color:#000;-webkit-text-stroke:0.25px #000;transform:scaleX(1.08);transform-origin:0 0;">27/07/2022</div></div>
<div style="left:1470px;top:560.39px;width:102px;height:15.0px;overflow:hidden;"><div class="t" style="left:32.44px;top:0;font-size:12.5px;color:#000;-webkit-text-stroke:0.25px #000;">19.441.920</div></div>
<div style="left:1573px;top:560.39px;width:95px;height:15.0px;overflow:hidden;"><div class="t" style="left:33.32px;top:0;font-size:12.5px;color:#000;-webkit-text-stroke:0.25px #000;">2.138.611</div></div>
<div style="left:1669px;top:560.39px;width:95px;height:15.0px;overflow:hidden;"><div class="t" style="left:25.44px;top:0;font-size:12.5px;color:#000;-webkit-text-stroke:0.25px #000;">21.580.531</div></div>
<div style="left:1765px;top:560.39px;width:61px;height:15.0px;overflow:hidden;"><div class="t" style="left:48.34px;top:0;font-size:12.5px;color:#000;-webkit-text-stroke:0.25px #000;">-</div></div>
<div style="left:1827px;top:560.39px;width:63px;height:15.0px;overflow:hidden;"><div class="t" style="left:10.00px;top:0;font-size:12.5px;color:#000;-webkit-text-stroke:0.25px #000;transform:scaleX(1.1);transform-origin:0 0;">Distribusi</div></div>
<div style="left:900px;top:580.39px;width:60px;height:15.0px;overflow:hidden;"><div class="t" style="left:51.05px;top:0;font-size:12.5px;color:#000;-webkit-text-stroke:0.25px #000;">7</div></div>
<div style="left:961px;top:580.39px;width:60px;height:15.0px;overflow:hidden;"><div class="t" style="left:2.00px;top:0;font-size:12.5px;color:#000;-webkit-text-stroke:0.25px #000;">10</div></div>
<div style="left:1022px;top:580.39px;width:151px;height:15.0px;overflow:hidden;"><div class="t" style="left:3.00px;top:0;font-size:12.5px;color:#000;-webkit-text-stroke:0.25px #000;transform:scaleX(0.976);transform-origin:0 0;">PT SUBUR JAYA GEMILANG</div></div>
<div style="left:1174px;top:580.39px;width:94px;height:15.0px;overflow:hidden;"><div class="t" style="left:16.27px;top:0;font-size:12.5px;color:#000;-webkit-text-stroke:0.25px #000;">7,00803E+14</div></div>
<div style="left:1269px;top:580.39px;width:118px;height:15.0px;overflow:hidden;"><div class="t" style="left:10.72px;top:0;font-size:12.5px;color:#000;-webkit-text-stroke:0.25px #000;">100072255413349</div></div>
<div style="left:1388px;top:580.39px;width:81px;height:15.0px;overflow:hidden;"><div class="t" style="left:10.43px;top:0;font-size:12.5px;color:#000;-webkit-text-stroke:0.25px #000;transform:scaleX(1.08);transform-origin:0 0;">08/07/2022</div></div>
<div style="left:1470px;top:580.39px;width:102px;height:15.0px;overflow:hidden;"><div class="t" style="left:32.44px;top:0;font-size:12.5px;color:#000;-webkit-text-stroke:0.25px #000;">15.281.171</div></div>
<div style="left:1573px;top:580.39px;width:95px;height:15.0px;overflow:hidden;"><div class="t" style="left:32.39px;top:0;font-size:12.5px;color:#000;-webkit-text-stroke:0.25px #000;">1.680.928</div></div>
<div style="left:1669px;top:580.39px;width:95px;height:15.0px;overflow:hidden;"><div class="t" style="left:25.44px;top:0;font-size:12.5px;color:#000;-webkit-text-stroke:0.25px #000;">16.962.099</div></div>
<div style="left:1765px;top:580.39px;width:61px;height:15.0px;overflow:hidden;"><div class="t" style="left:48.34px;top:0;font-size:12.5px;color:#000;-webkit-text-stroke:0.25px #000;">-</div></div>
<div style="left:1827px;top:580.39px;width:63px;height:15.0px;overflow:hidden;"><div class="t" style="left:10.00px;top:0;font-size:12.5px;color:#000;-webkit-text-stroke:0.25px #000;transform:scaleX(1.1);transform-origin:0 0;">Distribusi</div></div>
<div style="left:900px;top:600.39px;width:60px;height:15.0px;overflow:hidden;"><div class="t" style="left:51.05px;top:0;font-size:12.5px;color:#000;-webkit-text-stroke:0.25px #000;">7</div></div>
<div style="left:961px;top:600.39px;width:60px;height:15.0px;overflow:hidden;"><div class="t" style="left:2.00px;top:0;font-size:12.5px;color:#000;-webkit-text-stroke:0.25px #000;">10</div></div>
<div style="left:1022px;top:600.39px;width:151px;height:15.0px;overflow:hidden;"><div class="t" style="left:3.00px;top:0;font-size:12.5px;color:#000;-webkit-text-stroke:0.25px #000;transform:scaleX(0.976);transform-origin:0 0;">PT SUBUR JAYA GEMILANG</div></div>
<div style="left:1174px;top:600.39px;width:94px;height:15.0px;overflow:hidden;"><div class="t" style="left:16.27px;top:0;font-size:12.5px;color:#000;-webkit-text-stroke:0.25px #000;">7,00803E+14</div></div>
<div style="left:1269px;top:600.39px;width:118px;height:15.0px;overflow:hidden;"><div class="t" style="left:10.72px;top:0;font-size:12.5px;color:#000;-webkit-text-stroke:0.25px #000;">100072255413383</div></div>
<div style="left:1388px;top:600.39px;width:81px;height:15.0px;overflow:hidden;"><div class="t" style="left:11.43px;top:0;font-size:12.5px;color:#000;-webkit-text-stroke:0.25px #000;transform:scaleX(1.08);transform-origin:0 0;">11/07/2022</div></div>
<div style="left:1470px;top:600.39px;width:102px;height:15.0px;overflow:hidden;"><div class="t" style="left:39.39px;top:0;font-size:12.5px;color:#000;-webkit-text-stroke:0.25px #000;">1.198.702</div></div>
<div style="left:1573px;top:600.39px;width:95px;height:15.0px;overflow:hidden;"><div class="t" style="left:42.81px;top:0;font-size:12.5px;color:#000;-webkit-text-stroke:0.25px #000;">131.857</div></div>
<div style="left:1669px;top:600.39px;width:95px;height:15.0px;overflow:hidden;"><div class="t" style="left:32.39px;top:0;font-size:12.5px;color:#000;-webkit-text-stroke:0.25px #000;">1.330.559</div></div>
<div style="left:1765px;top:600.39px;width:61px;height:15.0px;overflow:hidden;"><div class="t" style="left:48.34px;top:0;font-size:12.5px;color:#000;-webkit-text-stroke:0.25px #000;">-</div></div>
<div style="left:1827px;top:600.39px;width:63px;height:15.0px;overflow:hidden;"><div class="t" style="left:10.00px;top:0;font-size:12.5px;color:#000;-webkit-text-stroke:0.25px #000;transform:scaleX(1.1);transform-origin:0 0;">Distribusi</div></div>
<div style="left:900px;top:620.39px;width:60px;height:15.0px;overflow:hidden;"><div class="t" style="left:51.05px;top:0;font-size:12.5px;color:#000;-webkit-text-stroke:0.25px #000;">7</div></div>
<div style="left:961px;top:620.39px;width:60px;height:15.0px;overflow:hidden;"><div class="t" style="left:2.00px;top:0;font-size:12.5px;color:#000;-webkit-text-stroke:0.25px #000;">10</div></div>
<div style="left:1022px;top:620.39px;width:151px;height:15.0px;overflow:hidden;"><div class="t" style="left:3.00px;top:0;font-size:12.5px;color:#000;-webkit-text-stroke:0.25px #000;transform:scaleX(0.976);transform-origin:0 0;">PT SUBUR JAYA GEMILANG</div></div>
<div style="left:1174px;top:620.39px;width:94px;height:15.0px;overflow:hidden;"><div class="t" style="left:16.27px;top:0;font-size:12.5px;color:#000;-webkit-text-stroke:0.25px #000;">7,00803E+14</div></div>
<div style="left:1269px;top:620.39px;width:118px;height:15.0px;overflow:hidden;"><div class="t" style="left:10.72px;top:0;font-size:12.5px;color:#000;-webkit-text-stroke:0.25px #000;">100062262537369</div></div>
<div style="left:1388px;top:620.39px;width:81px;height:15.0px;overflow:hidden;"><div class="t" style="left:10.43px;top:0;font-size:12.5px;color:#000;-webkit-text-stroke:0.25px #000;transform:scaleX(1.08);transform-origin:0 0;">04/07/2022</div></div>
<div style="left:1470px;top:620.39px;width:102px;height:15.0px;overflow:hidden;"><div class="t" style="left:39.39px;top:0;font-size:12.5px;color:#000;-webkit-text-stroke:0.25px #000;">7.010.382</div></div>
<div style="left:1573px;top:620.39px;width:95px;height:15.0px;overflow:hidden;"><div class="t" style="left:42.81px;top:0;font-size:12.5px;color:#000;-webkit-text-stroke:0.25px #000;">771.142</div></div>
<div style="left:1669px;top:620.39px;width:95px;height:15.0px;overflow:hidden;"><div class="t" style="left:32.39px;top:0;font-size:12.5px;color:#000;-webkit-text-stroke:0.25px #000;">7.781.524</div></div>
<div style="left:1765px;top:620.39px;width:61px;height:15.0px;overflow:hidden;"><div class="t" style="left:48.34px;top:0;font-size:12.5px;color:#000;-webkit-text-stroke:0.25px #000;">-</div></div>
<div style="left:1827px;top:620.39px;width:63px;height:15.0px;overflow:hidden;"><div class="t" style="left:10.00px;top:0;font-size:12.5px;color:#000;-webkit-text-stroke:0.25px #000;transform:scaleX(1.1);transform-origin:0 0;">Distribusi</div></div>
<div style="left:900px;top:640.39px;width:60px;height:15.0px;overflow:hidden;"><div class="t" style="left:51.05px;top:0;font-size:12.5px;color:#000;-webkit-text-stroke:0.25px #000;">8</div></div>
<div style="left:961px;top:640.39px;width:60px;height:15.0px;overflow:hidden;"><div class="t" style="left:2.00px;top:0;font-size:12.5px;color:#000;-webkit-text-stroke:0.25px #000;">10</div></div>
<div style="left:1022px;top:640.39px;width:151px;height:15.0px;overflow:hidden;"><div class="t" style="left:3.00px;top:0;font-size:12.5px;color:#000;-webkit-text-stroke:0.25px #000;transform:scaleX(0.976);transform-origin:0 0;">PT SUBUR JAYA GEMILANG</div></div>
<div style="left:1174px;top:640.39px;width:94px;height:15.0px;overflow:hidden;"><div class="t" style="left:16.27px;top:0;font-size:12.5px;color:#000;-webkit-text-stroke:0.25px #000;">7,00803E+14</div></div>
<div style="left:1269px;top:640.39px;width:118px;height:15.0px;overflow:hidden;"><div class="t" style="left:10.72px;top:0;font-size:12.5px;color:#000;-webkit-text-stroke:0.25px #000;">100072255455882</div></div>
<div style="left:1388px;top:640.39px;width:81px;height:15.0px;overflow:hidden;"><div class="t" style="left:10.43px;top:0;font-size:12.5px;color:#000;-webkit-text-stroke:0.25px #000;transform:scaleX(1.08);transform-origin:0 0;">02/08/2022</div></div>
<div style="left:1470px;top:640.39px;width:102px;height:15.0px;overflow:hidden;"><div class="t" style="left:32.44px;top:0;font-size:12.5px;color:#000;-webkit-text-stroke:0.25px #000;">28.791.715</div></div>
<div style="left:1573px;top:640.39px;width:95px;height:15.0px;overflow:hidden;"><div class="t" style="left:32.39px;top:0;font-size:12.5px;color:#000;-webkit-text-stroke:0.25px #000;">3.167.088</div></div>
<div style="left:1669px;top:640.39px;width:95px;height:15.0px;overflow:hidden;"><div class="t" style="left:25.44px;top:0;font-size:12.5px;color:#000;-webkit-text-stroke:0.25px #000;">31.958.803</div></div>
<div style="left:1765px;top:640.39px;width:61px;height:15.0px;overflow:hidden;"><div class="t" style="left:48.34px;top:0;font-size:12.5px;color:#000;-webkit-text-stroke:0.25px #000;">-</div></div>
<div style="left:1827px;top:640.39px;width:63px;height:15.0px;overflow:hidden;"><div class="t" style="left:10.00px;top:0;font-size:12.5px;color:#000;-webkit-text-stroke:0.25px #000;transform:scaleX(1.1);transform-origin:0 0;">Distribusi</div></div>
<div style="left:900px;top:660.39px;width:60px;height:15.0px;overflow:hidden;"><div class="t" style="left:51.05px;top:0;font-size:12.5px;color:#000;-webkit-text-stroke:0.25px #000;">8</div></div>
<div style="left:961px;top:660.39px;width:60px;height:15.0px;overflow:hidden;"><div class="t" style="left:2.00px;top:0;font-size:12.5px;color:#000;-webkit-text-stroke:0.25px #000;">10</div></div>
<div style="left:1022px;top:660.39px;width:151px;height:15.0px;overflow:hidden;"><div class="t" style="left:3.00px;top:0;font-size:12.5px;color:#000;-webkit-text-stroke:0.25px #000;transform:scaleX(0.976);transform-origin:0 0;">PT SUBUR JAYA GEMILANG</div></div>
<div style="left:1174px;top:660.39px;width:94px;height:15.0px;overflow:hidden;"><div class="t" style="left:16.27px;top:0;font-size:12.5px;color:#000;-webkit-text-stroke:0.25px #000;">7,00803E+14</div></div>
<div style="left:1269px;top:660.39px;width:118px;height:15.0px;overflow:hidden;"><div class="t" style="left:10.72px;top:0;font-size:12.5px;color:#000;-webkit-text-stroke:0.25px #000;">100072255456637</div></div>
<div style="left:1388px;top:660.39px;width:81px;height:15.0px;overflow:hidden;"><div class="t" style="left:10.43px;top:0;font-size:12.5px;color:#000;-webkit-text-stroke:0.25px #000;transform:scaleX(1.08);transform-origin:0 0;">25/08/2022</div></div>
<div style="left:1470px;top:660.39px;width:102px;height:15.0px;overflow:hidden;"><div class="t" style="left:40.32px;top:0;font-size:12.5px;color:#000;-webkit-text-stroke:0.25px #000;">9.211.314</div></div>
<div style="left:1573px;top:660.39px;width:95px;height:15.0px;overflow:hidden;"><div class="t" style="left:32.39px;top:0;font-size:12.5px;color:#000;-webkit-text-stroke:0.25px #000;">1.013.244</div></div>
<div style="left:1669px;top:660.39px;width:95px;height:15.0px;overflow:hidden;"><div class="t" style="left:25.44px;top:0;font-size:12.5px;color:#000;-webkit-text-stroke:0.25px #000;">10.224.558</div></div>
<div style="left:1765px;top:660.39px;width:61px;height:15.0px;overflow:hidden;"><div class="t" style="left:48.34px;top:0;font-size:12.5px;color:#000;-webkit-text-stroke:0.25px #000;">-</div></div>
<div style="left:1827px;top:660.39px;width:63px;height:15.0px;overflow:hidden;"><div class="t" style="left:10.00px;top:0;font-size:12.5px;color:#000;-webkit-text-stroke:0.25px #000;transform:scaleX(1.1);transform-origin:0 0;">Distribusi</div></div>
<div style="left:900px;top:680.39px;width:60px;height:15.0px;overflow:hidden;"><div class="t" style="left:51.05px;top:0;font-size:12.5px;color:#000;-webkit-text-stroke:0.25px #000;">8</div></div>
<div style="left:961px;top:680.39px;width:60px;height:15.0px;overflow:hidden;"><div class="t" style="left:2.00px;top:0;font-size:12.5px;color:#000;-webkit-text-stroke:0.25px #000;">10</div></div>
<div style="left:1022px;top:680.39px;width:151px;height:15.0px;overflow:hidden;"><div class="t" style="left:3.00px;top:0;font-size:12.5px;color:#000;-webkit-text-stroke:0.25px #000;transform:scaleX(0.976);transform-origin:0 0;">PT SUBUR JAYA GEMILANG</div></div>
<div style="left:1174px;top:680.39px;width:94px;height:15.0px;overflow:hidden;"><div class="t" style="left:16.27px;top:0;font-size:12.5px;color:#000;-webkit-text-stroke:0.25px #000;">7,00803E+14</div></div>
<div style="left:1269px;top:680.39px;width:118px;height:15.0px;overflow:hidden;"><div class="t" style="left:10.72px;top:0;font-size:12.5px;color:#000;-webkit-text-stroke:0.25px #000;">100072255456636</div></div>
<div style="left:1388px;top:680.39px;width:81px;height:15.0px;overflow:hidden;"><div class="t" style="left:10.43px;top:0;font-size:12.5px;color:#000;-webkit-text-stroke:0.25px #000;transform:scaleX(1.08);transform-origin:0 0;">24/08/2022</div></div>
<div style="left:1470px;top:680.39px;width:102px;height:15.0px;overflow:hidden;"><div class="t" style="left:32.44px;top:0;font-size:12.5px;color:#000;-webkit-text-stroke:0.25px #000;">33.696.009</div></div>
<div style="left:1573px;top:680.39px;width:95px;height:15.0px;overflow:hidden;"><div class="t" style="left:32.39px;top:0;font-size:12.5px;color:#000;-webkit-text-stroke:0.25px #000;">3.706.560</div></div>
<div style="left:1669px;top:680.39px;width:95px;height:15.0px;overflow:hidden;"><div class="t" style="left:25.44px;top:0;font-size:12.5px;color:#000;-webkit-text-stroke:0.25px #000;">37.402.569</div></div>
<div style="left:1765px;top:680.39px;width:61px;height:15.0px;overflow:hidden;"><div class="t" style="left:48.34px;top:0;font-size:12.5px;color:#000;-webkit-text-stroke:0.25px #000;">-</div></div>
<div style="left:1827px;top:680.39px;width:63px;height:15.0px;overflow:hidden;"><div class="t" style="left:10.00px;top:0;font-size:12.5px;color:#000;-webkit-text-stroke:0.25px #000;transform:scaleX(1.1);transform-origin:0 0;">Distribusi</div></div>
<div style="left:900px;top:700.39px;width:60px;height:15.0px;overflow:hidden;"><div class="t" style="left:51.05px;top:0;font-size:12.5px;color:#000;-webkit-text-stroke:0.25px #000;">9</div></div>
<div style="left:961px;top:700.39px;width:60px;height:15.0px;overflow:hidden;"><div class="t" style="left:2.00px;top:0;font-size:12.5px;color:#000;-webkit-text-stroke:0.25px #000;">10</div></div>
<div style="left:1022px;top:700.39px;width:151px;height:15.0px;overflow:hidden;"><div class="t" style="left:3.00px;top:0;font-size:12.5px;color:#000;-webkit-text-stroke:0.25px #000;transform:scaleX(0.976);transform-origin:0 0;">PT SUBUR JAYA GEMILANG</div></div>
<div style="left:1174px;top:700.39px;width:94px;height:15.0px;overflow:hidden;"><div class="t" style="left:16.27px;top:0;font-size:12.5px;color:#000;-webkit-text-stroke:0.25px #000;">7,00803E+14</div></div>
<div style="left:1269px;top:700.39px;width:118px;height:15.0px;overflow:hidden;"><div class="t" style="left:10.72px;top:0;font-size:12.5px;color:#000;-webkit-text-stroke:0.25px #000;">100082261375617</div></div>
<div style="left:1388px;top:700.39px;width:81px;height:15.0px;overflow:hidden;"><div class="t" style="left:10.43px;top:0;font-size:12.5px;color:#000;-webkit-text-stroke:0.25px #000;transform:scaleX(1.08);transform-origin:0 0;">14/09/2022</div></div>
<div style="left:1470px;top:700.39px;width:102px;height:15.0px;overflow:hidden;"><div class="t" style="left:32.44px;top:0;font-size:12.5px;color:#000;-webkit-text-stroke:0.25px #000;">12.796.318</div></div>
<div style="left:1573px;top:700.39px;width:95px;height:15.0px;overflow:hidden;"><div class="t" style="left:32.39px;top:0;font-size:12.5px;color:#000;-webkit-text-stroke:0.25px #000;">1.407.594</div></div>
<div style="left:1669px;top:700.39px;width:95px;height:15.0px;overflow:hidden;"><div class="t" style="left:25.44px;top:0;font-size:12.5px;color:#000;-webkit-text-stroke:0.25px #000;">14.203.912</div></div>
<div style="left:1765px;top:700.39px;width:61px;height:15.0px;overflow:hidden;"><div class="t" style="left:48.34px;top:0;font-size:12.5px;color:#000;-webkit-text-stroke:0.25px #000;">-</div></div>
<div style="left:1827px;top:700.39px;width:63px;height:15.0px;overflow:hidden;"><div class="t" style="left:10.00px;top:0;font-size:12.5px;color:#000;-webkit-text-stroke:0.25px #000;transform:scaleX(1.1);transform-origin:0 0;">Distribusi</div></div>
<div style="left:900px;top:720.39px;width:60px;height:15.0px;overflow:hidden;"><div class="t" style="left:51.05px;top:0;font-size:12.5px;color:#000;-webkit-text-stroke:0.25px #000;">9</div></div>
<div style="left:961px;top:720.39px;width:60px;height:15.0px;overflow:hidden;"><div class="t" style="left:2.00px;top:0;font-size:12.5px;color:#000;-webkit-text-stroke:0.25px #000;">10</div></div>
<div style="left:1022px;top:720.39px;width:151px;height:15.0px;overflow:hidden;"><div class="t" style="left:3.00px;top:0;font-size:12.5px;color:#000;-webkit-text-stroke:0.25px #000;transform:scaleX(0.976);transform-origin:0 0;">PT SUBUR JAYA GEMILANG</div></div>
<div style="left:1174px;top:720.39px;width:94px;height:15.0px;overflow:hidden;"><div class="t" style="left:16.27px;top:0;font-size:12.5px;color:#000;-webkit-text-stroke:0.25px #000;">7,00803E+14</div></div>
<div style="left:1269px;top:720.39px;width:118px;height:15.0px;overflow:hidden;"><div class="t" style="left:10.72px;top:0;font-size:12.5px;color:#000;-webkit-text-stroke:0.25px #000;">100082261376258</div></div>
<div style="left:1388px;top:720.39px;width:81px;height:15.0px;overflow:hidden;"><div class="t" style="left:10.43px;top:0;font-size:12.5px;color:#000;-webkit-text-stroke:0.25px #000;transform:scaleX(1.08);transform-origin:0 0;">15/09/2022</div></div>
<div style="left:1470px;top:720.39px;width:102px;height:15.0px;overflow:hidden;"><div class="t" style="left:39.39px;top:0;font-size:12.5px;color:#000;-webkit-text-stroke:0.25px #000;">4.172.000</div></div>
<div style="left:1573px;top:720.39px;width:95px;height:15.0px;overflow:hidden;"><div class="t" style="left:42.81px;top:0;font-size:12.5px;color:#000;-webkit-text-stroke:0.25px #000;">458.920</div></div>
<div style="left:1669px;top:720.39px;width:95px;height:15.0px;overflow:hidden;"><div class="t" style="left:32.39px;top:0;font-size:12.5px;color:#000;-webkit-text-stroke:0.25px #000;">4.630.920</div></div>
<div style="left:1765px;top:720.39px;width:61px;height:15.0px;overflow:hidden;"><div class="t" style="left:48.34px;top:0;font-size:12.5px;color:#000;-webkit-text-stroke:0.25px #000;">-</div></div>
<div style="left:1827px;top:720.39px;width:63px;height:15.0px;overflow:hidden;"><div class="t" style="left:10.00px;top:0;font-size:12.5px;color:#000;-webkit-text-stroke:0.25px #000;transform:scaleX(1.1);transform-origin:0 0;">Distribusi</div></div>
<div style="left:900px;top:740.39px;width:60px;height:15.0px;overflow:hidden;"><div class="t" style="left:51.05px;top:0;font-size:12.5px;color:#000;-webkit-text-stroke:0.25px #000;">9</div></div>
<div style="left:961px;top:740.39px;width:60px;height:15.0px;overflow:hidden;"><div class="t" style="left:2.00px;top:0;font-size:12.5px;color:#000;-webkit-text-stroke:0.25px #000;">10</div></div>
<div style="left:1022px;top:740.39px;width:151px;height:15.0px;overflow:hidden;"><div class="t" style="left:3.00px;top:0;font-size:12.5px;color:#000;-webkit-text-stroke:0.25px #000;transform:scaleX(0.976);transform-origin:0 0;">PT SUBUR JAYA GEMILANG</div></div>
<div style="left:1174px;top:740.39px;width:94px;height:15.0px;overflow:hidden;"><div class="t" style="left:16.27px;top:0;font-size:12.5px;color:#000;-webkit-text-stroke:0.25px #000;">7,00803E+14</div></div>
<div style="left:1269px;top:740.39px;width:118px;height:15.0px;overflow:hidden;"><div class="t" style="left:10.72px;top:0;font-size:12.5px;color:#000;-webkit-text-stroke:0.25px #000;">100082261377192</div></div>
<div style="left:1388px;top:740.39px;width:81px;height:15.0px;overflow:hidden;"><div class="t" style="left:10.43px;top:0;font-size:12.5px;color:#000;-webkit-text-stroke:0.25px #000;transform:scaleX(1.08);transform-origin:0 0;">29/09/2022</div></div>
<div style="left:1470px;top:740.39px;width:102px;height:15.0px;overflow:hidden;"><div class="t" style="left:32.44px;top:0;font-size:12.5px;color:#000;-webkit-text-stroke:0.25px #000;">22.968.592</div></div>
<div style="left:1573px;top:740.39px;width:95px;height:15.0px;overflow:hidden;"><div class="t" style="left:32.39px;top:0;font-size:12.5px;color:#000;-webkit-text-stroke:0.25px #000;">2.526.545</div></div>
<div style="left:1669px;top:740.39px;width:95px;height:15.0px;overflow:hidden;"><div class="t" style="left:25.44px;top:0;font-size:12.5px;color:#000;-webkit-text-stroke:0.25px #000;">25.495.137</div></div>
<div style="left:1765px;top:740.39px;width:61px;height:15.0px;overflow:hidden;"><div class="t" style="left:48.34px;top:0;font-size:12.5px;color:#000;-webkit-text-stroke:0.25px #000;">-</div></div>
<div style="left:1827px;top:740.39px;width:63px;height:15.0px;overflow:hidden;"><div class="t" style="left:10.00px;top:0;font-size:12.5px;color:#000;-webkit-text-stroke:0.25px #000;transform:scaleX(1.1);transform-origin:0 0;">Distribusi</div></div>
<div style="left:900px;top:760.39px;width:60px;height:15.0px;overflow:hidden;"><div class="t" style="left:51.05px;top:0;font-size:12.5px;color:#000;-webkit-text-stroke:0.25px #000;">9</div></div>
<div style="left:961px;top:760.39px;width:60px;height:15.0px;overflow:hidden;"><div class="t" style="left:2.00px;top:0;font-size:12.5px;color:#000;-webkit-text-stroke:0.25px #000;">10</div></div>
<div style="left:1022px;top:760.39px;width:151px;height:15.0px;overflow:hidden;"><div class="t" style="left:3.00px;top:0;font-size:12.5px;color:#000;-webkit-text-stroke:0.25px #000;transform:scaleX(0.976);transform-origin:0 0;">PT SUBUR JAYA GEMILANG</div></div>
<div style="left:1174px;top:760.39px;width:94px;height:15.0px;overflow:hidden;"><div class="t" style="left:16.27px;top:0;font-size:12.5px;color:#000;-webkit-text-stroke:0.25px #000;">7,00803E+14</div></div>
<div style="left:1269px;top:760.39px;width:118px;height:15.0px;overflow:hidden;"><div class="t" style="left:10.72px;top:0;font-size:12.5px;color:#000;-webkit-text-stroke:0.25px #000;">100082261376761</div></div>
<div style="left:1388px;top:760.39px;width:81px;height:15.0px;overflow:hidden;"><div class="t" style="left:10.43px;top:0;font-size:12.5px;color:#000;-webkit-text-stroke:0.25px #000;transform:scaleX(1.08);transform-origin:0 0;">23/09/2022</div></div>
<div style="left:1470px;top:760.39px;width:102px;height:15.0px;overflow:hidden;"><div class="t" style="left:32.44px;top:0;font-size:12.5px;color:#000;-webkit-text-stroke:0.25px #000;">10.176.096</div></div>
<div style="left:1573px;top:760.39px;width:95px;height:15.0px;overflow:hidden;"><div class="t" style="left:33.32px;top:0;font-size:12.5px;color:#000;-webkit-text-stroke:0.25px #000;">1.119.370</div></div>
<div style="left:1669px;top:760.39px;width:95px;height:15.0px;overflow:hidden;"><div class="t" style="left:26.37px;top:0;font-size:12.5px;color:#000;-webkit-text-stroke:0.25px #000;">11.295.466</div></div>
<div style="left:1765px;top:760.39px;width:61px;height:15.0px;overflow:hidden;"><div class="t" style="left:48.34px;top:0;font-size:12.5px;color:#000;-webkit-text-stroke:0.25px #000;">-</div></div>
<div style="left:1827px;top:760.39px;width:63px;height:15.0px;overflow:hidden;"><div class="t" style="left:10.00px;top:0;font-size:12.5px;color:#000;-webkit-text-stroke:0.25px #000;transform:scaleX(1.1);transform-origin:0 0;">Distribusi</div></div>
<div style="left:900px;top:780.39px;width:60px;height:15.0px;overflow:hidden;"><div class="t" style="left:44.10px;top:0;font-size:12.5px;color:#000;-webkit-text-stroke:0.25px #000;">10</div></div>
<div style="left:961px;top:780.39px;width:60px;height:15.0px;overflow:hidden;"><div class="t" style="left:2.00px;top:0;font-size:12.5px;color:#000;-webkit-text-stroke:0.25px #000;">10</div></div>
<div style="left:1022px;top:780.39px;width:151px;height:15.0px;overflow:hidden;"><div class="t" style="left:3.00px;top:0;font-size:12.5px;color:#000;-webkit-text-stroke:0.25px #000;transform:scaleX(0.976);transform-origin:0 0;">PT SUBUR JAYA GEMILANG</div></div>
<div style="left:1174px;top:780.39px;width:94px;height:15.0px;overflow:hidden;"><div class="t" style="left:16.27px;top:0;font-size:12.5px;color:#000;-webkit-text-stroke:0.25px #000;">7,00803E+14</div></div>
<div style="left:1269px;top:780.39px;width:118px;height:15.0px;overflow:hidden;"><div class="t" style="left:10.72px;top:0;font-size:12.5px;color:#000;-webkit-text-stroke:0.25px #000;">100082261420373</div></div>
<div style="left:1388px;top:780.39px;width:81px;height:15.0px;overflow:hidden;"><div class="t" style="left:10.43px;top:0;font-size:12.5px;color:#000;-webkit-text-stroke:0.25px #000;transform:scaleX(1.08);transform-origin:0 0;">18/10/2022</div></div>
<div style="left:1470px;top:780.39px;width:102px;height:15.0px;overflow:hidden;"><div class="t" style="left:32.44px;top:0;font-size:12.5px;color:#000;-webkit-text-stroke:0.25px #000;">22.684.382</div></div>
<div style="left:1573px;top:780.39px;width:95px;height:15.0px;overflow:hidden;"><div class="t" style="left:32.39px;top:0;font-size:12.5px;color:#000;-webkit-text-stroke:0.25px #000;">2.495.282</div></div>
<div style="left:1669px;top:780.39px;width:95px;height:15.0px;overflow:hidden;"><div class="t" style="left:25.44px;top:0;font-size:12.5px;color:#000;-webkit-text-stroke:0.25px #000;">25.179.664</div></div>
<div style="left:1765px;top:780.39px;width:61px;height:15.0px;overflow:hidden;"><div class="t" style="left:48.34px;top:0;font-size:12.5px;color:#000;-webkit-text-stroke:0.25px #000;">-</div></div>
<div style="left:1827px;top:780.39px;width:63px;height:15.0px;overflow:hidden;"><div class="t" style="left:10.00px;top:0;font-size:12.5px;color:#000;-webkit-text-stroke:0.25px #000;transform:scaleX(1.1);transform-origin:0 0;">Distribusi</div></div>
<div style="left:900px;top:800.39px;width:60px;height:15.0px;overflow:hidden;"><div class="t" style="left:44.10px;top:0;font-size:12.5px;color:#000;-webkit-text-stroke:0.25px #000;">10</div></div>
<div style="left:961px;top:800.39px;width:60px;height:15.0px;overflow:hidden;"><div class="t" style="left:2.00px;top:0;font-size:12.5px;color:#000;-webkit-text-stroke:0.25px #000;">10</div></div>
<div style="left:1022px;top:800.39px;width:151px;height:15.0px;overflow:hidden;"><div class="t" style="left:3.00px;top:0;font-size:12.5px;color:#000;-webkit-text-stroke:0.25px #000;transform:scaleX(0.976);transform-origin:0 0;">PT SUBUR JAYA GEMILANG</div></div>
<div style="left:1174px;top:800.39px;width:94px;height:15.0px;overflow:hidden;"><div class="t" style="left:16.27px;top:0;font-size:12.5px;color:#000;-webkit-text-stroke:0.25px #000;">7,00803E+14</div></div>
<div style="left:1269px;top:800.39px;width:118px;height:15.0px;overflow:hidden;"><div class="t" style="left:10.72px;top:0;font-size:12.5px;color:#000;-webkit-text-stroke:0.25px #000;">100082261419242</div></div>
<div style="left:1388px;top:800.39px;width:81px;height:15.0px;overflow:hidden;"><div class="t" style="left:11.43px;top:0;font-size:12.5px;color:#000;-webkit-text-stroke:0.25px #000;transform:scaleX(1.08);transform-origin:0 0;">11/10/2022</div></div>
<div style="left:1470px;top:800.39px;width:102px;height:15.0px;overflow:hidden;"><div class="t" style="left:32.44px;top:0;font-size:12.5px;color:#000;-webkit-text-stroke:0.25px #000;">14.596.560</div></div>
<div style="left:1573px;top:800.39px;width:95px;height:15.0px;overflow:hidden;"><div class="t" style="left:32.39px;top:0;font-size:12.5px;color:#000;-webkit-text-stroke:0.25px #000;">1.605.621</div></div>
<div style="left:1669px;top:800.39px;width:95px;height:15.0px;overflow:hidden;"><div class="t" style="left:25.44px;top:0;font-size:12.5px;color:#000;-webkit-text-stroke:0.25px #000;">16.202.181</div></div>
<div style="left:1765px;top:800.39px;width:61px;height:15.0px;overflow:hidden;"><div class="t" style="left:48.34px;top:0;font-size:12.5px;color:#000;-webkit-text-stroke:0.25px #000;">-</div></div>
<div style="left:1827px;top:800.39px;width:63px;height:15.0px;overflow:hidden;"><div class="t" style="left:10.00px;top:0;font-size:12.5px;color:#000;-webkit-text-stroke:0.25px #000;transform:scaleX(1.1);transform-origin:0 0;">Distribusi</div></div>
<div style="left:900px;top:820.39px;width:60px;height:15.0px;overflow:hidden;"><div class="t" style="left:44.10px;top:0;font-size:12.5px;color:#000;-webkit-text-stroke:0.25px #000;">10</div></div>
<div style="left:961px;top:820.39px;width:60px;height:15.0px;overflow:hidden;"><div class="t" style="left:2.00px;top:0;font-size:12.5px;color:#000;-webkit-text-stroke:0.25px #000;">10</div></div>
<div style="left:1022px;top:820.39px;width:151px;height:15.0px;overflow:hidden;"><div class="t" style="left:3.00px;top:0;font-size:12.5px;color:#000;-webkit-text-stroke:0.25px #000;transform:scaleX(0.976);transform-origin:0 0;">PT SUBUR JAYA GEMILANG</div></div>
<div style="left:1174px;top:820.39px;width:94px;height:15.0px;overflow:hidden;"><div class="t" style="left:16.27px;top:0;font-size:12.5px;color:#000;-webkit-text-stroke:0.25px #000;">7,00803E+14</div></div>
<div style="left:1269px;top:820.39px;width:118px;height:15.0px;overflow:hidden;"><div class="t" style="left:10.72px;top:0;font-size:12.5px;color:#000;-webkit-text-stroke:0.25px #000;">100082261419243</div></div>
<div style="left:1388px;top:820.39px;width:81px;height:15.0px;overflow:hidden;"><div class="t" style="left:10.43px;top:0;font-size:12.5px;color:#000;-webkit-text-stroke:0.25px #000;transform:scaleX(1.08);transform-origin:0 0;">06/10/2022</div></div>
<div style="left:1470px;top:820.39px;width:102px;height:15.0px;overflow:hidden;"><div class="t" style="left:39.39px;top:0;font-size:12.5px;color:#000;-webkit-text-stroke:0.25px #000;">6.023.700</div></div>
<div style="left:1573px;top:820.39px;width:95px;height:15.0px;overflow:hidden;"><div class="t" style="left:42.81px;top:0;font-size:12.5px;color:#000;-webkit-text-stroke:0.25px #000;">662.607</div></div>
<div style="left:1669px;top:820.39px;width:95px;height:15.0px;overflow:hidden;"><div class="t" style="left:32.39px;top:0;font-size:12.5px;color:#000;-webkit-text-stroke:0.25px #000;">6.686.307</div></div>
<div style="left:1765px;top:820.39px;width:61px;height:15.0px;overflow:hidden;"><div class="t" style="left:48.34px;top:0;font-size:12.5px;color:#000;-webkit-text-stroke:0.25px #000;">-</div></div>
<div style="left:1827px;top:820.39px;width:63px;height:15.0px;overflow:hidden;"><div class="t" style="left:10.00px;top:0;font-size:12.5px;color:#000;-webkit-text-stroke:0.25px #000;transform:scaleX(1.1);transform-origin:0 0;">Distribusi</div></div>
<div style="left:900px;top:840.39px;width:60px;height:15.0px;overflow:hidden;"><div class="t" style="left:44.10px;top:0;font-size:12.5px;color:#000;-webkit-text-stroke:0.25px #000;">10</div></div>
<div style="left:961px;top:840.39px;width:60px;height:15.0px;overflow:hidden;"><div class="t" style="left:2.00px;top:0;font-size:12.5px;color:#000;-webkit-text-stroke:0.25px #000;">10</div></div>
<div style="left:1022px;top:840.39px;width:151px;height:15.0px;overflow:hidden;"><div class="t" style="left:3.00px;top:0;font-size:12.5px;color:#000;-webkit-text-stroke:0.25px #000;transform:scaleX(0.976);transform-origin:0 0;">PT SUBUR JAYA GEMILANG</div></div>
<div style="left:1174px;top:840.39px;width:94px;height:15.0px;overflow:hidden;"><div class="t" style="left:16.27px;top:0;font-size:12.5px;color:#000;-webkit-text-stroke:0.25px #000;">7,00803E+14</div></div>
<div style="left:1269px;top:840.39px;width:118px;height:15.0px;overflow:hidden;"><div class="t" style="left:10.72px;top:0;font-size:12.5px;color:#000;-webkit-text-stroke:0.25px #000;">100082261420374</div></div>
<div style="left:1388px;top:840.39px;width:81px;height:15.0px;overflow:hidden;"><div class="t" style="left:10.43px;top:0;font-size:12.5px;color:#000;-webkit-text-stroke:0.25px #000;transform:scaleX(1.08);transform-origin:0 0;">20/10/2022</div></div>
<div style="left:1470px;top:840.39px;width:102px;height:15.0px;overflow:hidden;"><div class="t" style="left:39.39px;top:0;font-size:12.5px;color:#000;-webkit-text-stroke:0.25px #000;">6.979.810</div></div>
<div style="left:1573px;top:840.39px;width:95px;height:15.0px;overflow:hidden;"><div class="t" style="left:42.81px;top:0;font-size:12.5px;color:#000;-webkit-text-stroke:0.25px #000;">767.779</div></div>
<div style="left:1669px;top:840.39px;width:95px;height:15.0px;overflow:hidden;"><div class="t" style="left:32.39px;top:0;font-size:12.5px;color:#000;-webkit-text-stroke:0.25px #000;">7.747.589</div></div>
<div style="left:1765px;top:840.39px;width:61px;height:15.0px;overflow:hidden;"><div class="t" style="left:48.34px;top:0;font-size:12.5px;color:#000;-webkit-text-stroke:0.25px #000;">-</div></div>
<div style="left:1827px;top:840.39px;width:63px;height:15.0px;overflow:hidden;"><div class="t" style="left:10.00px;top:0;font-size:12.5px;color:#000;-webkit-text-stroke:0.25px #000;transform:scaleX(1.1);transform-origin:0 0;">Distribusi</div></div>
<div style="left:900px;top:860.39px;width:60px;height:15.0px;overflow:hidden;"><div class="t" style="left:45.02px;top:0;font-size:12.5px;color:#000;-webkit-text-stroke:0.25px #000;">11</div></div>
<div style="left:961px;top:860.39px;width:60px;height:15.0px;overflow:hidden;"><div class="t" style="left:2.00px;top:0;font-size:12.5px;color:#000;-webkit-text-stroke:0.25px #000;">10</div></div>
<div style="left:1022px;top:860.39px;width:151px;height:15.0px;overflow:hidden;"><div class="t" style="left:3.00px;top:0;font-size:12.5px;color:#000;-webkit-text-stroke:0.25px #000;transform:scaleX(0.976);transform-origin:0 0;">PT SUBUR JAYA GEMILANG</div></div>
<div style="left:1174px;top:860.39px;width:94px;height:15.0px;overflow:hidden;"><div class="t" style="left:16.27px;top:0;font-size:12.5px;color:#000;-webkit-text-stroke:0.25px #000;">7,00803E+14</div></div>
<div style="left:1269px;top:860.39px;width:118px;height:15.0px;overflow:hidden;"><div class="t" style="left:10.72px;top:0;font-size:12.5px;color:#000;-webkit-text-stroke:0.25px #000;">100092294155946</div></div>
<div style="left:1388px;top:860.39px;width:81px;height:15.0px;overflow:hidden;"><div class="t" style="left:11.43px;top:0;font-size:12.5px;color:#000;-webkit-text-stroke:0.25px #000;transform:scaleX(1.08);transform-origin:0 0;">24/11/2022</div></div>
<div style="left:1470px;top:860.39px;width:102px;height:15.0px;overflow:hidden;"><div class="t" style="left:32.44px;top:0;font-size:12.5px;color:#000;-webkit-text-stroke:0.25px #000;">14.413.291</div></div>
<div style="left:1573px;top:860.39px;width:95px;height:15.0px;overflow:hidden;"><div class="t" style="left:32.39px;top:0;font-size:12.5px;color:#000;-webkit-text-stroke:0.25px #000;">1.585.462</div></div>
<div style="left:1669px;top:860.39px;width:95px;height:15.0px;overflow:hidden;"><div class="t" style="left:25.44px;top:0;font-size:12.5px;color:#000;-webkit-text-stroke:0.25px #000;">15.998.753</div></div>
<div style="left:1765px;top:860.39px;width:61px;height:15.0px;overflow:hidden;"><div class="t" style="left:48.34px;top:0;font-size:12.5px;color:#000;-webkit-text-stroke:0.25px #000;">-</div></div>
<div style="left:1827px;top:860.39px;width:63px;height:15.0px;overflow:hidden;"><div class="t" style="left:10.00px;top:0;font-size:12.5px;color:#000;-webkit-text-stroke:0.25px #000;transform:scaleX(1.1);transform-origin:0 0;">Distribusi</div></div>
<div style="left:900px;top:880.39px;width:60px;height:15.0px;overflow:hidden;"><div class="t" style="left:45.02px;top:0;font-size:12.5px;color:#000;-webkit-text-stroke:0.25px #000;">11</div></div>
<div style="left:961px;top:880.39px;width:60px;height:15.0px;overflow:hidden;"><div class="t" style="left:2.00px;top:0;font-size:12.5px;color:#000;-webkit-text-stroke:0.25px #000;">10</div></div>
<div style="left:1022px;top:880.39px;width:151px;height:15.0px;overflow:hidden;"><div class="t" style="left:3.00px;top:0;font-size:12.5px;color:#000;-webkit-text-stroke:0.25px #000;transform:scaleX(0.976);transform-origin:0 0;">PT SUBUR JAYA GEMILANG</div></div>
<div style="left:1174px;top:880.39px;width:94px;height:15.0px;overflow:hidden;"><div class="t" style="left:16.27px;top:0;font-size:12.5px;color:#000;-webkit-text-stroke:0.25px #000;">7,00803E+14</div></div>
<div style="left:1269px;top:880.39px;width:118px;height:15.0px;overflow:hidden;"><div class="t" style="left:11.65px;top:0;font-size:12.5px;color:#000;-webkit-text-stroke:0.25px #000;">100092294155711</div></div>
<div style="left:1388px;top:880.39px;width:81px;height:15.0px;overflow:hidden;"><div class="t" style="left:11.43px;top:0;font-size:12.5px;color:#000;-webkit-text-stroke:0.25px #000;transform:scaleX(1.08);transform-origin:0 0;">22/11/2022</div></div>
<div style="left:1470px;top:880.39px;width:102px;height:15.0px;overflow:hidden;"><div class="t" style="left:32.44px;top:0;font-size:12.5px;color:#000;-webkit-text-stroke:0.25px #000;">12.869.704</div></div>
<div style="left:1573px;top:880.39px;width:95px;height:15.0px;overflow:hidden;"><div class="t" style="left:32.39px;top:0;font-size:12.5px;color:#000;-webkit-text-stroke:0.25px #000;">1.415.667</div></div>
<div style="left:1669px;top:880.39px;width:95px;height:15.0px;overflow:hidden;"><div class="t" style="left:25.44px;top:0;font-size:12.5px;color:#000;-webkit-text-stroke:0.25px #000;">14.285.371</div></div>
<div style="left:1765px;top:880.39px;width:61px;height:15.0px;overflow:hidden;"><div class="t" style="left:48.34px;top:0;font-size:12.5px;color:#000;-webkit-text-stroke:0.25px #000;">-</div></div>
<div style="left:1827px;top:880.39px;width:63px;height:15.0px;overflow:hidden;"><div class="t" style="left:10.00px;top:0;font-size:12.5px;color:#000;-webkit-text-stroke:0.25px #000;transform:scaleX(1.1);transform-origin:0 0;">Distribusi</div></div>
<div style="left:900px;top:900.39px;width:60px;height:15.0px;overflow:hidden;"><div class="t" style="left:44.10px;top:0;font-size:12.5px;color:#000;-webkit-text-stroke:0.25px #000;">12</div></div>
<div style="left:961px;top:900.39px;width:60px;height:15.0px;overflow:hidden;"><div class="t" style="left:2.00px;top:0;font-size:12.5px;color:#000;-webkit-text-stroke:0.25px #000;">10</div></div>
<div style="left:1022px;top:900.39px;width:151px;height:15.0px;overflow:hidden;"><div class="t" style="left:3.00px;top:0;font-size:12.5px;color:#000;-webkit-text-stroke:0.25px #000;transform:scaleX(0.976);transform-origin:0 0;">PT SUBUR JAYA GEMILANG</div></div>
<div style="left:1174px;top:900.39px;width:94px;height:15.0px;overflow:hidden;"><div class="t" style="left:4.50px;top:0;font-size:12.5px;color:#000;-webkit-text-stroke:0.25px #000;transform:scaleX(0.93);transform-origin:0 0;">#############</div></div>
<div style="left:1269px;top:900.39px;width:118px;height:15.0px;overflow:hidden;"><div class="t" style="left:10.72px;top:0;font-size:12.5px;color:#000;-webkit-text-stroke:0.25px #000;">100092294203253</div></div>
<div style="left:1388px;top:900.39px;width:81px;height:15.0px;overflow:hidden;"><div class="t" style="left:10.43px;top:0;font-size:12.5px;color:#000;-webkit-text-stroke:0.25px #000;transform:scaleX(1.08);transform-origin:0 0;">26/12/2022</div></div>
<div style="left:1470px;top:900.39px;width:102px;height:15.0px;overflow:hidden;"><div class="t" style="left:39.39px;top:0;font-size:12.5px;color:#000;-webkit-text-stroke:0.25px #000;">2.765.664</div></div>
<div style="left:1573px;top:900.39px;width:95px;height:15.0px;overflow:hidden;"><div class="t" style="left:42.81px;top:0;font-size:12.5px;color:#000;-webkit-text-stroke:0.25px #000;">304.223</div></div>
<div style="left:1669px;top:900.39px;width:95px;height:15.0px;overflow:hidden;"><div class="t" style="left:32.39px;top:0;font-size:12.5px;color:#000;-webkit-text-stroke:0.25px #000;">3.069.887</div></div>
<div style="left:1765px;top:900.39px;width:61px;height:15.0px;overflow:hidden;"><div class="t" style="left:48.34px;top:0;font-size:12.5px;color:#000;-webkit-text-stroke:0.25px #000;">-</div></div>
<div style="left:1827px;top:900.39px;width:63px;height:15.0px;overflow:hidden;"><div class="t" style="left:10.00px;top:0;font-size:12.5px;color:#000;-webkit-text-stroke:0.25px #000;transform:scaleX(1.1);transform-origin:0 0;">Distribusi</div></div>
<div style="left:900px;top:920.39px;width:60px;height:15.0px;overflow:hidden;"><div class="t" style="left:44.10px;top:0;font-size:12.5px;color:#000;-webkit-text-stroke:0.25px #000;">12</div></div>
<div style="left:961px;top:920.39px;width:60px;height:15.0px;overflow:hidden;"><div class="t" style="left:2.00px;top:0;font-size:12.5px;color:#000;-webkit-text-stroke:0.25px #000;">10</div></div>
<div style="left:1022px;top:920.39px;width:151px;height:15.0px;overflow:hidden;"><div class="t" style="left:3.00px;top:0;font-size:12.5px;color:#000;-webkit-text-stroke:0.25px #000;transform:scaleX(0.976);transform-origin:0 0;">PT SUBUR JAYA GEMILANG</div></div>
<div style="left:1174px;top:920.39px;width:94px;height:15.0px;overflow:hidden;"><div class="t" style="left:4.50px;top:0;font-size:12.5px;color:#000;-webkit-text-stroke:0.25px #000;transform:scaleX(0.93);transform-origin:0 0;">#############</div></div>
<div style="left:1269px;top:920.39px;width:118px;height:15.0px;overflow:hidden;"><div class="t" style="left:10.72px;top:0;font-size:12.5px;color:#000;-webkit-text-stroke:0.25px #000;">100092294203441</div></div>
<div style="left:1388px;top:920.39px;width:81px;height:15.0px;overflow:hidden;"><div class="t" style="left:10.43px;top:0;font-size:12.5px;color:#000;-webkit-text-stroke:0.25px #000;transform:scaleX(1.08);transform-origin:0 0;">28/12/2022</div></div>
<div style="left:1470px;top:920.39px;width:102px;height:15.0px;overflow:hidden;"><div class="t" style="left:39.39px;top:0;font-size:12.5px;color:#000;-webkit-text-stroke:0.25px #000;">2.957.182</div></div>
<div style="left:1573px;top:920.39px;width:95px;height:15.0px;overflow:hidden;"><div class="t" style="left:42.81px;top:0;font-size:12.5px;color:#000;-webkit-text-stroke:0.25px #000;">325.290</div></div>
<div style="left:1669px;top:920.39px;width:95px;height:15.0px;overflow:hidden;"><div class="t" style="left:32.39px;top:0;font-size:12.5px;color:#000;-webkit-text-stroke:0.25px #000;">3.282.472</div></div>
<div style="left:1765px;top:920.39px;width:61px;height:15.0px;overflow:hidden;"><div class="t" style="left:48.34px;top:0;font-size:12.5px;color:#000;-webkit-text-stroke:0.25px #000;">-</div></div>
<div style="left:1827px;top:920.39px;width:63px;height:15.0px;overflow:hidden;"><div class="t" style="left:10.00px;top:0;font-size:12.5px;color:#000;-webkit-text-stroke:0.25px #000;transform:scaleX(1.1);transform-origin:0 0;">Distribusi</div></div>
<div style="left:900px;top:940.39px;width:60px;height:15.0px;overflow:hidden;"><div class="t" style="left:44.10px;top:0;font-size:12.5px;color:#000;-webkit-text-stroke:0.25px #000;">12</div></div>
<div style="left:961px;top:940.39px;width:60px;height:15.0px;overflow:hidden;"><div class="t" style="left:2.00px;top:0;font-size:12.5px;color:#000;-webkit-text-stroke:0.25px #000;">10</div></div>
<div style="left:1022px;top:940.39px;width:151px;height:15.0px;overflow:hidden;"><div class="t" style="left:3.00px;top:0;font-size:12.5px;color:#000;-webkit-text-stroke:0.25px #000;transform:scaleX(0.976);transform-origin:0 0;">PT SUBUR JAYA GEMILANG</div></div>
<div style="left:1174px;top:940.39px;width:94px;height:15.0px;overflow:hidden;"><div class="t" style="left:4.50px;top:0;font-size:12.5px;color:#000;-webkit-text-stroke:0.25px #000;transform:scaleX(0.93);transform-origin:0 0;">#############</div></div>
<div style="left:1269px;top:940.39px;width:118px;height:15.0px;overflow:hidden;"><div class="t" style="left:10.72px;top:0;font-size:12.5px;color:#000;-webkit-text-stroke:0.25px #000;">100092294203700</div></div>
<div style="left:1388px;top:940.39px;width:81px;height:15.0px;overflow:hidden;"><div class="t" style="left:10.43px;top:0;font-size:12.5px;color:#000;-webkit-text-stroke:0.25px #000;transform:scaleX(1.08);transform-origin:0 0;">30/12/2022</div></div>
<div style="left:1470px;top:940.39px;width:102px;height:15.0px;overflow:hidden;"><div class="t" style="left:39.39px;top:0;font-size:12.5px;color:#000;-webkit-text-stroke:0.25px #000;">1.779.840</div></div>
<div style="left:1573px;top:940.39px;width:95px;height:15.0px;overflow:hidden;"><div class="t" style="left:42.81px;top:0;font-size:12.5px;color:#000;-webkit-text-stroke:0.25px #000;">195.782</div></div>
<div style="left:1669px;top:940.39px;width:95px;height:15.0px;overflow:hidden;"><div class="t" style="left:32.39px;top:0;font-size:12.5px;color:#000;-webkit-text-stroke:0.25px #000;">1.975.622</div></div>
<div style="left:1765px;top:940.39px;width:61px;height:15.0px;overflow:hidden;"><div class="t" style="left:48.34px;top:0;font-size:12.5px;color:#000;-webkit-text-stroke:0.25px #000;">-</div></div>
<div style="left:1827px;top:940.39px;width:63px;height:15.0px;overflow:hidden;"><div class="t" style="left:10.00px;top:0;font-size:12.5px;color:#000;-webkit-text-stroke:0.25px #000;transform:scaleX(1.1);transform-origin:0 0;">Distribusi</div></div>
<svg style="left:22px;top:12px" width="16" height="16"><path d="M1 1 H12.5 L14.5 3 V14.5 H1 Z" fill="none" stroke="#ffffff" stroke-width="1.8"/><rect x="3.8" y="1.5" width="7.5" height="3.6" fill="none" stroke="#ffffff" stroke-width="1.3"/><rect x="3.2" y="8.2" width="9" height="6.5" fill="#ffffff"/><rect x="5.6" y="10.4" width="3.4" height="4.3" fill="#217346"/></svg>
<svg style="left:51px;top:11px" width="18" height="16"><path d="M3 6 L7 2 M3 6 L7 10 M3 6 H10 A4.2 4.2 0 0 1 10 14.5 H8" fill="none" stroke="#ffffff" stroke-width="1.7"/></svg>
<svg style="left:71px;top:15px" width="8" height="6"><path d="M1 1 L4 4 L7 1" fill="none" stroke="#ffffff" stroke-width="1.3"/></svg>
<svg style="left:90px;top:11px" width="18" height="16"><path d="M15 6 L11 2 M15 6 L11 10 M15 6 H8 A4.2 4.2 0 0 0 8 14.5 H10" fill="none" stroke="#5f9d76" stroke-width="1.7"/></svg>
<svg style="left:110px;top:15px" width="8" height="6"><path d="M1 1 L4 4 L7 1" fill="none" stroke="#5f9d76" stroke-width="1.3"/></svg>
<svg style="left:132px;top:16px" width="9" height="9"><rect x="1.5" y="0.5" width="5" height="1.3" fill="#ffffff"/><polygon points="0.8,3.2 7.2,3.2 4,6.8" fill="#ffffff"/></svg>
<div class="t" style="left:312.00px;top:11.69px;font-size:12.5px;color:#ffffff;transform:scaleX(0.9138);transform-origin:0 0;">Penjelasan dan Rincian Jurnal Koreksi  -  Excel</div>
<div style="left:613px;top:9px;width:58px;height:19px;background:#ffffff;"></div>
<div class="t" style="left:624.00px;top:11.69px;font-size:12.5px;color:#262626;transform:scaleX(0.9419);transform-origin:0 0;">Sign in</div>
<svg style="left:697px;top:12px" width="16" height="14"><rect x="1" y="1" width="13" height="11" fill="none" stroke="#ffffff" stroke-width="1.2"/><line x1="1" y1="4" x2="14" y2="4" stroke="#ffffff" stroke-width="1.2"/><path d="M7.5 11 V6 M5.5 8 L7.5 6 L9.5 8" fill="none" stroke="#ffffff" stroke-width="1.1"/></svg>
<div style="left:745px;top:18px;width:11px;height:1px;background:#ffffff;"></div>
<div style="left:790px;top:12px;width:12px;height:12px;border:1px solid #ffffff;"></div>
<svg style="left:836px;top:12px" width="13" height="13"><path d="M0.5 0.5 L12.5 12.5 M12.5 0.5 L0.5 12.5" stroke="#ffffff" stroke-width="1.2"/></svg>
<svg style="left:888px;top:11px" width="16" height="16"><path d="M1 1 H12.5 L14.5 3 V14.5 H1 Z" fill="none" stroke="#ffffff" stroke-width="1.8"/><rect x="3.8" y="1.5" width="7.5" height="3.6" fill="none" stroke="#ffffff" stroke-width="1.3"/><rect x="3.2" y="8.2" width="9" height="6.5" fill="#ffffff"/><rect x="5.6" y="10.4" width="3.4" height="4.3" fill="#217346"/></svg>
<svg style="left:917px;top:10px" width="18" height="16"><path d="M3 6 L7 2 M3 6 L7 10 M3 6 H10 A4.2 4.2 0 0 1 10 14.5 H8" fill="none" stroke="#ffffff" stroke-width="1.7"/></svg>
<svg style="left:937px;top:14px" width="8" height="6"><path d="M1 1 L4 4 L7 1" fill="none" stroke="#ffffff" stroke-width="1.3"/></svg>
<svg style="left:956px;top:10px" width="18" height="16"><path d="M15 6 L11 2 M15 6 L11 10 M15 6 H8 A4.2 4.2 0 0 0 8 14.5 H10" fill="none" stroke="#5f9d76" stroke-width="1.7"/></svg>
<svg style="left:976px;top:14px" width="8" height="6"><path d="M1 1 L4 4 L7 1" fill="none" stroke="#5f9d76" stroke-width="1.3"/></svg>
<svg style="left:998px;top:15px" width="9" height="9"><rect x="1.5" y="0.5" width="5" height="1.3" fill="#ffffff"/><polygon points="0.8,3.2 7.2,3.2 4,6.8" fill="#ffffff"/></svg>
<div class="t" style="left:1212.00px;top:11.19px;font-size:12.5px;color:#bfe0c9;transform:scaleX(0.9086);transform-origin:0 0;">Citra Sukses - Kertas Kerja - Laporan Keuangan - 2022 Final  -  Excel</div>
<div style="left:1659px;top:8px;width:59px;height:19px;background:#a8d5b8;"></div>
<div class="t" style="left:1670.50px;top:11.19px;font-size:12.5px;color:#1f5e3a;transform:scaleX(0.9419);transform-origin:0 0;">Sign in</div>
<svg style="left:1744px;top:11px" width="16" height="14"><rect x="1" y="1" width="13" height="11" fill="none" stroke="#bfe0c9" stroke-width="1.2"/><line x1="1" y1="4" x2="14" y2="4" stroke="#bfe0c9" stroke-width="1.2"/><path d="M7.5 11 V6 M5.5 8 L7.5 6 L9.5 8" fill="none" stroke="#bfe0c9" stroke-width="1.1"/></svg>
<div style="left:1791px;top:17px;width:11px;height:1px;background:#bfe0c9;"></div>
<div style="left:1837px;top:11px;width:12px;height:12px;border:1px solid #bfe0c9;"></div>
<svg style="left:1882px;top:11px" width="13" height="13"><path d="M0.5 0.5 L12.5 12.5 M12.5 0.5 L0.5 12.5" stroke="#bfe0c9" stroke-width="1.2"/></svg>
<div class="t" style="left:16.93px;top:44.69px;font-size:12.5px;color:#444;-webkit-text-stroke:0.25px #444;">File</div>
<div class="t" style="left:70.33px;top:44.69px;font-size:12.5px;color:#444;-webkit-text-stroke:0.25px #444;">Home</div>
<div class="t" style="left:134.37px;top:44.69px;font-size:12.5px;color:#444;-webkit-text-stroke:0.25px #444;">Insert</div>
<div class="t" style="left:196.90px;top:44.69px;font-size:12.5px;color:#444;-webkit-text-stroke:0.25px #444;">Page Layout</div>
<div class="t" style="left:297.95px;top:44.69px;font-size:12.5px;color:#444;-webkit-text-stroke:0.25px #444;">Formulas</div>
<div class="t" style="left:379.80px;top:44.69px;font-size:12.5px;color:#444;-webkit-text-stroke:0.25px #444;">Data</div>
<div class="t" style="left:435.51px;top:44.69px;font-size:12.5px;color:#444;-webkit-text-stroke:0.25px #444;">Review</div>
<div class="t" style="left:503.57px;top:44.69px;font-size:12.5px;color:#262626;-webkit-text-stroke:0.25px #262626;">View</div>
<div class="t" style="left:559.15px;top:44.69px;font-size:12.5px;color:#444;-webkit-text-stroke:0.25px #444;">Help</div>
<div style="left:504px;top:62px;width:27px;height:3px;background:#217346;"></div>
<div class="t" style="left:655.50px;top:44.69px;font-size:12.5px;color:#444;transform:scaleX(0.9345);transform-origin:0 0;">Tell me</div>
<svg style="left:626px;top:42px" width="14" height="20"><path d="M7 1.5 A5 5 0 0 1 10 10.5 V13 H4 V10.5 A5 5 0 0 1 7 1.5z" fill="none" stroke="#444" stroke-width="1.1"/><line x1="4.5" y1="15" x2="9.5" y2="15" stroke="#444" stroke-width="1.1"/><line x1="5.5" y1="17" x2="8.5" y2="17" stroke="#444" stroke-width="1.1"/></svg>
<div style="left:786px;top:40px;width:66px;height:23px;background:#ffffff;"></div>
<div style="left:786px;top:40px;width:66px;height:23px;border:1px solid #e1dfdd;"></div>
<svg style="left:793px;top:44px" width="16" height="16"><path d="M2 6 V14 H13 V10" fill="none" stroke="#444" stroke-width="1.1"/><path d="M5 11 C5 7 8 5.5 12 5.5 M9.5 3 L12.5 5.5 L9.5 8" fill="none" stroke="#444" stroke-width="1.1"/></svg>
<div class="t" style="left:812.00px;top:44.69px;font-size:12.5px;color:#2a5541;transform:scaleX(0.8994);transform-origin:0 0;-webkit-text-stroke:0.3px #2a5541;">Share</div>
<div class="t" style="left:882.93px;top:43.69px;font-size:12.5px;color:#444;-webkit-text-stroke:0.25px #444;">File</div>
<div class="t" style="left:936.33px;top:43.69px;font-size:12.5px;color:#262626;-webkit-text-stroke:0.25px #262626;">Home</div>
<div class="t" style="left:999.37px;top:43.69px;font-size:12.5px;color:#444;-webkit-text-stroke:0.25px #444;">Insert</div>
<div class="t" style="left:1062.90px;top:43.69px;font-size:12.5px;color:#444;-webkit-text-stroke:0.25px #444;">Page Layout</div>
<div class="t" style="left:1163.95px;top:43.69px;font-size:12.5px;color:#444;-webkit-text-stroke:0.25px #444;">Formulas</div>
<div class="t" style="left:1245.80px;top:43.69px;font-size:12.5px;color:#444;-webkit-text-stroke:0.25px #444;">Data</div>
<div class="t" style="left:1300.51px;top:43.69px;font-size:12.5px;color:#444;-webkit-text-stroke:0.25px #444;">Review</div>
<div class="t" style="left:1369.57px;top:43.69px;font-size:12.5px;color:#444;-webkit-text-stroke:0.25px #444;">View</div>
<div class="t" style="left:1425.15px;top:43.69px;font-size:12.5px;color:#444;-webkit-text-stroke:0.25px #444;">Help</div>
<div style="left:935px;top:59px;width:38px;height:3px;background:#217346;"></div>
<div class="t" style="left:1520.00px;top:43.69px;font-size:12.5px;color:#444;transform:scaleX(1.0697);transform-origin:0 0;">Tell me what you want to do</div>
<svg style="left:1491px;top:41px" width="14" height="20"><path d="M7 1.5 A5 5 0 0 1 10 10.5 V13 H4 V10.5 A5 5 0 0 1 7 1.5z" fill="none" stroke="#444" stroke-width="1.1"/><line x1="4.5" y1="15" x2="9.5" y2="15" stroke="#444" stroke-width="1.1"/><line x1="5.5" y1="17" x2="8.5" y2="17" stroke="#444" stroke-width="1.1"/></svg>
<div style="left:1832px;top:39px;width:67px;height:23px;background:#ffffff;"></div>
<div style="left:1832px;top:39px;width:67px;height:23px;border:1px solid #e1dfdd;"></div>
<svg style="left:1839px;top:43px" width="16" height="16"><path d="M2 6 V14 H13 V10" fill="none" stroke="#444" stroke-width="1.1"/><path d="M5 11 C5 7 8 5.5 12 5.5 M9.5 3 L12.5 5.5 L9.5 8" fill="none" stroke="#444" stroke-width="1.1"/></svg>
<div class="t" style="left:1858.00px;top:43.69px;font-size:12.5px;color:#2a5541;transform:scaleX(0.8994);transform-origin:0 0;-webkit-text-stroke:0.3px #2a5541;">Share</div>
<div style="left:9px;top:69px;width:46px;height:73px;background:#c8c6c4;border:1px solid #a19f9d;"></div>
<svg style="left:16px;top:75px" width="31" height="26"><rect x="0.5" y="0.5" width="29" height="24" fill="#fff" stroke="#737373"/><line x1="0.5" y1="5.5" x2="29.5" y2="5.5" stroke="#737373"/><line x1="0.5" y1="10.5" x2="29.5" y2="10.5" stroke="#737373"/><line x1="0.5" y1="15.5" x2="29.5" y2="15.5" stroke="#737373"/><line x1="0.5" y1="20.5" x2="29.5" y2="20.5" stroke="#737373"/><line x1="6.5" y1="0.5" x2="6.5" y2="24.5" stroke="#737373"/><line x1="12.5" y1="0.5" x2="12.5" y2="24.5" stroke="#737373"/><line x1="18.5" y1="0.5" x2="18.5" y2="24.5" stroke="#737373"/><line x1="24.5" y1="0.5" x2="24.5" y2="24.5" stroke="#737373"/></svg>
<div class="t" style="left:11.50px;top:107.69px;font-size:12.5px;color:#262626;transform:scaleX(0.9681);transform-origin:0 0;-webkit-text-stroke:0.25px #262626;">Normal</div>
<svg style="left:71px;top:75px" width="29" height="26"><rect x="0.5" y="0.5" width="27" height="24" fill="#fff" stroke="#737373"/><line x1="0.5" y1="5.5" x2="27.5" y2="5.5" stroke="#9fb8d6"/><line x1="0.5" y1="10.5" x2="27.5" y2="10.5" stroke="#9fb8d6"/><line x1="0.5" y1="15.5" x2="27.5" y2="15.5" stroke="#9fb8d6"/><line x1="0.5" y1="20.5" x2="27.5" y2="20.5" stroke="#9fb8d6"/><line x1="9.5" y1="0.5" x2="9.5" y2="24.5" stroke="#9fb8d6"/><line x1="14.5" y1="0.5" x2="14.5" y2="24.5" stroke="#737373"/><line x1="20.5" y1="0.5" x2="20.5" y2="24.5" stroke="#9fb8d6"/></svg>
<div class="t" style="left:56.00px;top:107.69px;font-size:12.5px;color:#262626;transform:scaleX(0.8879);transform-origin:0 0;-webkit-text-stroke:0.25px #262626;">Page Break</div>
<div class="t" style="left:65.00px;top:123.69px;font-size:12.5px;color:#262626;transform:scaleX(0.9222);transform-origin:0 0;-webkit-text-stroke:0.25px #262626;">Preview</div>
<svg style="left:121px;top:81px" width="14" height="16"><path d="M0.5 0.5 H8.5 L12.5 4.5 V15.5 H0.5 Z" fill="#fff" stroke="#737373"/><rect x="3.5" y="7.5" width="6" height="5" fill="none" stroke="#737373"/><line x1="6.5" y1="7.5" x2="6.5" y2="12.5" stroke="#737373"/><line x1="3.5" y1="10" x2="9.5" y2="10" stroke="#737373"/></svg>
<div class="t" style="left:139.00px;top:82.69px;font-size:12.5px;color:#262626;transform:scaleX(0.9259);transform-origin:0 0;-webkit-text-stroke:0.25px #262626;">Page Layout</div>
<svg style="left:120px;top:112px" width="17" height="17"><rect x="2.5" y="2.5" width="12" height="12" fill="#fff" stroke="#737373"/><rect x="5.5" y="5.5" width="7" height="4" fill="#c8c8c8" stroke="#737373"/><line x1="0.5" y1="4" x2="0.5" y2="13" stroke="#737373"/><line x1="5" y1="0.5" x2="13" y2="0.5" stroke="#737373"/><line x1="5" y1="16.5" x2="13" y2="16.5" stroke="#737373"/></svg>
<div class="t" style="left:139.00px;top:114.69px;font-size:12.5px;color:#262626;transform:scaleX(0.9290);transform-origin:0 0;-webkit-text-stroke:0.25px #262626;">Custom Views</div>
<div class="t" style="left:70.50px;top:146.69px;font-size:12.5px;color:#444;transform:scaleX(0.9392);transform-origin:0 0;-webkit-text-stroke:0.25px #444;">Workbook Views</div>
<div style="left:228px;top:70px;width:1px;height:88px;background:#c8c6c4;"></div>
<div style="left:240px;top:70px;width:32px;height:31px;background:#fdfdfd;border:1px solid #d2d0ce;"></div>
<svg style="left:247px;top:76px" width="18" height="18"><path d="M3 1 L6 6 L9 1 Z" fill="none" stroke="#737373"/><line x1="11" y1="3" x2="16" y2="3" stroke="#737373"/><path d="M1 7 V14 H7" fill="none" stroke="#737373"/><path d="M13 9 L10 15 H16 Z" fill="none" stroke="#737373"/></svg>
<div class="t" style="left:241.00px;top:105.69px;font-size:12.5px;color:#262626;transform:scaleX(0.9274);transform-origin:0 0;-webkit-text-stroke:0.25px #262626;">Show</div>
<svg style="left:252px;top:126px" width="8" height="5"><path d="M0.5 0.5 L3.5 3.5 L6.5 0.5" fill="none" stroke="#444" stroke-width="1.2"/></svg>
<div style="left:282px;top:70px;width:1px;height:88px;background:#c8c6c4;"></div>
<svg style="left:297px;top:73px" width="30" height="30"><circle cx="11" cy="11" r="9" fill="#fff" stroke="#737373" stroke-width="2.6"/><line x1="18" y1="18" x2="27" y2="27" stroke="#737373" stroke-width="3.5" stroke-linecap="round"/></svg>
<div class="t" style="left:295.50px;top:107.69px;font-size:12.5px;color:#262626;-webkit-text-stroke:0.25px #262626;">Zoom</div>
<svg style="left:341px;top:73px" width="28" height="32"><path d="M0.5 0.5 H13.5 L19.5 6.5 V26.5 H0.5 Z" fill="#fff" stroke="#737373"/><path d="M13.5 0.5 V6.5 H19.5" fill="none" stroke="#737373"/><path d="M20.5 0.5 V22" stroke="#737373" stroke-dasharray="1.5 1.5"/><path d="M11 14 H22 M18.5 10.5 L22 14 L18.5 17.5" fill="none" stroke="#2e75b6" stroke-width="1.6"/><rect x="12" y="22.5" width="14" height="8" fill="#2e75b6"/><text x="19" y="29.5" font-size="7" fill="#fff" text-anchor="middle" font-family="Liberation Sans" font-weight="bold">100</text></svg>
<div class="t" style="left:341.00px;top:107.69px;font-size:12.5px;color:#262626;transform:scaleX(0.8445);transform-origin:0 0;-webkit-text-stroke:0.25px #262626;">100%</div>
<svg style="left:386px;top:74px" width="33" height="30"><rect x="0.5" y="0.5" width="27" height="24" fill="#fff" stroke="#737373"/><line x1="0.5" y1="4.5" x2="27.5" y2="4.5" stroke="#9a9a9a"/><line x1="0.5" y1="10.5" x2="27.5" y2="10.5" stroke="#9a9a9a"/><line x1="0.5" y1="16.5" x2="27.5" y2="16.5" stroke="#9a9a9a"/><line x1="7.5" y1="0.5" x2="7.5" y2="24.5" stroke="#9a9a9a"/><line x1="14.5" y1="0.5" x2="14.5" y2="24.5" stroke="#9a9a9a"/><line x1="21.5" y1="0.5" x2="21.5" y2="24.5" stroke="#9a9a9a"/><circle cx="17" cy="14" r="7" fill="#bcd0e4" stroke="#737373" stroke-width="2"/><line x1="22" y1="19" x2="29" y2="26" stroke="#737373" stroke-width="2.8" stroke-linecap="round"/></svg>
<div class="t" style="left:377.50px;top:107.69px;font-size:12.5px;color:#262626;transform:scaleX(1.0033);transform-origin:0 0;-webkit-text-stroke:0.25px #262626;">Zoom to</div>
<div class="t" style="left:377.00px;top:123.69px;font-size:12.5px;color:#262626;transform:scaleX(0.9140);transform-origin:0 0;-webkit-text-stroke:0.25px #262626;">Selection</div>
<div class="t" style="left:343.75px;top:146.69px;font-size:12.5px;color:#444;transform:scaleX(0.8919);transform-origin:0 0;-webkit-text-stroke:0.25px #444;">Zoom</div>
<div style="left:436px;top:70px;width:1px;height:88px;background:#c8c6c4;"></div>
<svg style="left:447px;top:73px" width="17" height="16"><rect x="4.5" y="0.5" width="10" height="6" fill="#fff" stroke="#737373"/><rect x="4.5" y="0.5" width="10" height="2" fill="#737373"/><rect x="0.5" y="4.5" width="10" height="6" fill="#fff" stroke="#737373"/><rect x="0.5" y="4.5" width="10" height="2" fill="#737373"/><rect x="5.5" y="8.5" width="10" height="6" fill="#fff" stroke="#737373"/><rect x="5.5" y="8.5" width="10" height="2" fill="#2e75b6"/></svg>
<div class="t" style="left:466.00px;top:74.69px;font-size:12.5px;color:#262626;transform:scaleX(0.9734);transform-origin:0 0;-webkit-text-stroke:0.25px #262626;">New Window</div>
<svg style="left:448px;top:97px" width="17" height="16"><rect x="0.5" y="0.5" width="13" height="14" fill="#fff" stroke="#737373"/><rect x="0.5" y="0.5" width="13" height="2.5" fill="#2e75b6"/><rect x="0.5" y="7" width="13" height="2.5" fill="#2e75b6"/></svg>
<div class="t" style="left:466.00px;top:98.69px;font-size:12.5px;color:#262626;transform:scaleX(0.9485);transform-origin:0 0;-webkit-text-stroke:0.25px #262626;">Arrange All</div>
<svg style="left:448px;top:121px" width="17" height="16"><rect x="0.5" y="0.5" width="14" height="14" fill="#fff" stroke="#737373"/><line x1="0.5" y1="5" x2="14.5" y2="5" stroke="#737373"/><line x1="0.5" y1="10" x2="14.5" y2="10" stroke="#737373"/><line x1="5" y1="0.5" x2="5" y2="14.5" stroke="#737373"/><line x1="10" y1="0.5" x2="10" y2="14.5" stroke="#737373"/><rect x="5" y="5" width="5" height="5" fill="#2e75b6"/></svg>
<div class="t" style="left:466.00px;top:122.69px;font-size:12.5px;color:#262626;transform:scaleX(0.8481);transform-origin:0 0;-webkit-text-stroke:0.25px #262626;">Freeze Panes</div>
<svg style="left:536px;top:129px" width="8" height="5"><path d="M0.5 0.5 L3.5 3.5 L6.5 0.5" fill="none" stroke="#444" stroke-width="1.2"/></svg>
<svg style="left:553px;top:74px" width="18" height="14"><rect x="0.5" y="0.5" width="15" height="12" fill="#fff" stroke="#737373"/><rect x="0.5" y="0.5" width="15" height="2" fill="#2e75b6"/><line x1="2" y1="7" x2="14" y2="7" stroke="#737373" stroke-dasharray="1 1"/></svg>
<svg style="left:553px;top:97px" width="18" height="16"><rect x="0.5" y="2.5" width="15" height="12" fill="#fff" stroke="#737373" stroke-dasharray="1 1"/><rect x="0.5" y="0.5" width="15" height="2" fill="#2e75b6"/></svg>
<svg style="left:553px;top:121px" width="18" height="16"><rect x="0.5" y="0.5" width="15" height="14" fill="#fafafa" stroke="#b0b0b0"/><rect x="0.5" y="0.5" width="15" height="2" fill="#b0b0b0"/></svg>
<div style="left:577px;top:72px;width:1px;height:66px;background:#c8c6c4;"></div>
<svg style="left:585px;top:74px" width="17" height="14"><rect x="0.5" y="2.5" width="7" height="10" fill="#fff" stroke="#737373"/><rect x="8.5" y="2.5" width="7" height="10" fill="#fff" stroke="#737373"/><path d="M4 0.5 L7.5 2.5 M12 0.5 L15.5 2.5" stroke="#737373"/></svg>
<svg style="left:585px;top:97px" width="17" height="16"><rect x="0.5" y="2.5" width="7" height="10" fill="#fafafa" stroke="#b0b0b0"/><rect x="6.5" y="2.5" width="7" height="10" fill="#fafafa" stroke="#b0b0b0"/><line x1="15.5" y1="0" x2="15.5" y2="15" stroke="#b0b0b0"/></svg>
<svg style="left:585px;top:121px" width="17" height="16"><rect x="0.5" y="2.5" width="7" height="12" fill="#fafafa" stroke="#b0b0b0"/><rect x="8.5" y="2.5" width="7" height="12" fill="#fafafa" stroke="#b0b0b0"/><path d="M2 8 H6 M10 8 H14" stroke="#b0b0b0"/></svg>
<div style="left:608px;top:72px;width:1px;height:66px;background:#c8c6c4;"></div>
<svg style="left:629px;top:73px" width="32" height="27"><rect x="0.5" y="0.5" width="13" height="10" fill="#fff" stroke="#737373"/><rect x="0.5" y="0.5" width="13" height="2.5" fill="#737373"/><rect x="16.5" y="0.5" width="13" height="10" fill="#fff" stroke="#737373"/><rect x="16.5" y="0.5" width="13" height="2.5" fill="#737373"/><rect x="0.5" y="13.5" width="13" height="12" fill="#fff" stroke="#737373"/><rect x="0.5" y="13.5" width="13" height="2.5" fill="#737373"/><rect x="9.5" y="8.5" width="14" height="11" fill="#fff" stroke="#737373"/><rect x="9.5" y="8.5" width="14" height="2.5" fill="#2e75b6"/></svg>
<div class="t" style="left:627.00px;top:107.69px;font-size:12.5px;color:#262626;transform:scaleX(0.9506);transform-origin:0 0;-webkit-text-stroke:0.25px #262626;">Switch</div>
<div class="t" style="left:615.50px;top:123.69px;font-size:12.5px;color:#262626;transform:scaleX(0.9663);transform-origin:0 0;-webkit-text-stroke:0.25px #262626;">Windows</div>
<svg style="left:667px;top:130px" width="8" height="5"><path d="M0.5 0.5 L3.5 3.5 L6.5 0.5" fill="none" stroke="#444" stroke-width="1.2"/></svg>
<div class="t" style="left:538.00px;top:146.69px;font-size:12.5px;color:#444;transform:scaleX(0.9897);transform-origin:0 0;-webkit-text-stroke:0.25px #444;">Window</div>
<div style="left:685px;top:70px;width:1px;height:88px;background:#c8c6c4;"></div>
<svg style="left:701px;top:74px" width="34" height="30"><rect x="0.5" y="0.5" width="26" height="22" fill="#fff" stroke="#737373"/><rect x="0.5" y="0.5" width="26" height="4" fill="#737373"/><line x1="3" y1="8.5" x2="24" y2="8.5" stroke="#9a9a9a"/><line x1="3" y1="12.5" x2="24" y2="12.5" stroke="#9a9a9a"/><line x1="3" y1="16.5" x2="24" y2="16.5" stroke="#9a9a9a"/><rect x="17" y="15" width="12" height="13" rx="1" fill="#fff" stroke="#ed7d31" stroke-width="2"/><rect x="16" y="25" width="9" height="4" fill="#ed7d31"/></svg>
<div class="t" style="left:697.00px;top:107.69px;font-size:12.5px;color:#262626;transform:scaleX(0.9273);transform-origin:0 0;-webkit-text-stroke:0.25px #262626;">Macros</div>
<svg style="left:712px;top:128px" width="8" height="5"><path d="M0.5 0.5 L3.5 3.5 L6.5 0.5" fill="none" stroke="#444" stroke-width="1.2"/></svg>
<div class="t" style="left:698.00px;top:146.69px;font-size:12.5px;color:#444;transform:scaleX(0.8785);transform-origin:0 0;-webkit-text-stroke:0.25px #444;">Macros</div>
<div style="left:745px;top:70px;width:1px;height:88px;background:#c8c6c4;"></div>
<svg style="left:846px;top:152px" width="12" height="8"><path d="M1 6.5 L5.5 2 L10 6.5" fill="none" stroke="#444" stroke-width="1.3"/></svg>
<div style="left:7px;top:174px;width:100px;height:24px;background:#fff;border:1px solid #d2d0ce;"></div>
<div class="t" style="left:14.00px;top:180.24px;font-size:13px;color:#262626;transform:scaleX(0.9500);transform-origin:0 0;">AH42</div>
<svg style="left:94px;top:183.5px" width="8" height="5"><polygon points="0,0 7,0 3.5,4" fill="#666"/></svg>
<div style="left:122px;top:180.0px;width:2px;height:2px;background:#a0a0a0;"></div>
<div style="left:122px;top:185.0px;width:2px;height:2px;background:#a0a0a0;"></div>
<div style="left:122px;top:190.0px;width:2px;height:2px;background:#a0a0a0;"></div>
<div style="left:138px;top:174px;width:109px;height:24px;background:#fff;border:1px solid #d2d0ce;"></div>
<svg style="left:152px;top:181.0px" width="11" height="11"><path d="M0.5 0.5 L9.5 9.5 M9.5 0.5 L0.5 9.5" stroke="#a6a6a6" stroke-width="1.3"/></svg>
<svg style="left:186px;top:181.0px" width="14" height="11"><path d="M0.5 5.5 L4.5 9.5 L12.5 0.5" fill="none" stroke="#a6a6a6" stroke-width="1.6"/></svg>
<div class="t" style="left:223.00px;top:179.24px;font-size:13px;color:#555;font-style:italic;font-family:\"Liberation Serif\",serif;">fx</div>
<div style="left:251px;top:174px;width:609px;height:24px;background:#fff;border:1px solid #d2d0ce;"></div>
<div class="t" style="left:263.00px;top:179.74px;font-size:13px;color:#262626;transform:scaleX(0.9700);transform-origin:0 0;">2168060,58</div>
<svg style="left:847px;top:183.0px" width="9" height="6"><path d="M0.5 0.5 L4 4 L7.5 0.5" fill="none" stroke="#555" stroke-width="1.3"/></svg>
<svg style="left:883px;top:72px" width="31" height="32"><rect x="0.5" y="3.5" width="20" height="25" rx="1" fill="#e8c07a" stroke="#d9ad5e"/><rect x="5" y="1" width="11" height="5" rx="1" fill="#6d5f8c"/><circle cx="10.5" cy="2" r="2" fill="#6d5f8c"/><path d="M14.5 12.5 H24 L28.5 17 V30.5 H14.5 Z" fill="#fff" stroke="#737373"/></svg>
<div class="t" style="left:881.75px;top:106.69px;font-size:12.5px;color:#262626;transform:scaleX(0.8916);transform-origin:0 0;-webkit-text-stroke:0.25px #262626;">Paste</div>
<svg style="left:892px;top:128px" width="8" height="5"><path d="M0.5 0.5 L3.5 3.5 L6.5 0.5" fill="none" stroke="#444" stroke-width="1.2"/></svg>
<svg style="left:920px;top:72px" width="16" height="16"><path d="M4 1 L11 10 M12 1 L5 10" stroke="#444" stroke-width="1.5"/><circle cx="4" cy="12.5" r="2.6" fill="none" stroke="#2e75b6" stroke-width="1.5"/><circle cx="12" cy="12.5" r="2.6" fill="none" stroke="#2e75b6" stroke-width="1.5"/></svg>
<svg style="left:920px;top:97px" width="16" height="15"><path d="M0.5 0.5 H6 L8 2.5 V10.5 H0.5 Z" fill="#fff" stroke="#737373"/><path d="M5.5 4.5 H11 L14 7.5 V14.5 H5.5 Z" fill="#fff" stroke="#737373"/><line x1="7.5" y1="9.5" x2="12" y2="9.5" stroke="#737373"/><line x1="7.5" y1="12" x2="12" y2="12" stroke="#737373"/></svg>
<svg style="left:942px;top:103px" width="8" height="5"><path d="M0.5 0.5 L3.5 3.5 L6.5 0.5" fill="none" stroke="#444" stroke-width="1.2"/></svg>
<svg style="left:920px;top:121px" width="17" height="15"><path d="M1 13 L7 7 L10 10 L4 15 Z" fill="#e8b87a"/><rect x="9" y="1" width="6" height="9" transform="rotate(45 12 5.5)" fill="#555"/></svg>
<div class="t" style="left:881.50px;top:145.69px;font-size:12.5px;color:#444;transform:scaleX(0.9345);transform-origin:0 0;-webkit-text-stroke:0.25px #444;">Clipboard</div>
<svg style="left:951px;top:148px" width="9" height="9"><path d="M0.5 3 V0.5 H8.5 V8.5 H6 M2.5 2.5 L7 7 M7 4 V7 H4" fill="none" stroke="#666" stroke-width="1"/></svg>
<div style="left:962px;top:68px;width:1px;height:88px;background:#c8c6c4;"></div>
<div style="left:971px;top:77px;width:122px;height:23px;background:#fff;border:1px solid #c8c6c4;"></div>
<div class="t" style="left:975.00px;top:81.69px;font-size:12.5px;color:#262626;transform:scaleX(0.9315);transform-origin:0 0;-webkit-text-stroke:0.25px #262626;">Calibri</div>
<svg style="left:1083px;top:87px" width="7" height="4"><polygon points="0,0 6,0 3,3.5" fill="#555"/></svg>
<div style="left:1096px;top:77px;width:42px;height:23px;background:#fff;border:1px solid #c8c6c4;"></div>
<div class="t" style="left:1100.00px;top:81.69px;font-size:12.5px;color:#262626;transform:scaleX(0.7321);transform-origin:0 0;-webkit-text-stroke:0.25px #262626;">11</div>
<svg style="left:1128px;top:87px" width="7" height="4"><polygon points="0,0 6,0 3,3.5" fill="#555"/></svg>
<div class="t" style="left:1147.00px;top:80.42px;font-size:15px;color:#444;-webkit-text-stroke:0.2px #444;">A</div>
<svg style="left:1157px;top:80px" width="6" height="4"><polygon points="0,3.5 5,3.5 2.5,0" fill="#444"/></svg>
<div class="t" style="left:1172.00px;top:83.14px;font-size:12px;color:#444;-webkit-text-stroke:0.2px #444;">A</div>
<svg style="left:1180px;top:80px" width="6" height="4"><polygon points="0,0 5,0 2.5,3.5" fill="#2e75b6"/></svg>
<div class="t" style="left:977.00px;top:112.73px;font-size:13px;color:#444;font-weight:bold;">B</div>
<div class="t" style="left:1002.00px;top:112.28px;font-size:13.5px;color:#444;font-style:italic;font-family:"Liberation Serif",serif;font-weight:bold;">I</div>
<div class="t" style="left:1025.00px;top:112.19px;font-size:12.5px;color:#444;font-weight:bold;">U</div>
<div style="left:1025px;top:125px;width:10px;height:1px;background:#444;"></div>
<svg style="left:1044px;top:119px" width="8" height="5"><path d="M0.5 0.5 L3.5 3.5 L6.5 0.5" fill="none" stroke="#444" stroke-width="1.2"/></svg>
<div style="left:1060px;top:110px;width:1px;height:20px;background:#c8c6c4;"></div>
<svg style="left:1068px;top:112px" width="15" height="15"><rect x="0.5" y="0.5" width="13" height="13" fill="none" stroke="#777" stroke-dasharray="1 1"/><line x1="7" y1="0.5" x2="7" y2="13.5" stroke="#777" stroke-dasharray="1 1"/><line x1="0.5" y1="7" x2="13.5" y2="7" stroke="#777" stroke-dasharray="1 1"/><line x1="0" y1="13.5" x2="14" y2="13.5" stroke="#444" stroke-width="1.2"/></svg>
<svg style="left:1090px;top:119px" width="8" height="5"><path d="M0.5 0.5 L3.5 3.5 L6.5 0.5" fill="none" stroke="#444" stroke-width="1.2"/></svg>
<div style="left:1106px;top:110px;width:1px;height:20px;background:#c8c6c4;"></div>
<svg style="left:1113px;top:111px" width="19" height="18"><path d="M3 7 L8 2 L14 8 L9 13 Z" fill="#fff" stroke="#555" stroke-width="1.1"/><path d="M6 1 V6" stroke="#555"/><path d="M14 8 Q17 10 15 12" fill="none" stroke="#2e75b6" stroke-width="1.5"/><rect x="0" y="13.5" width="18" height="4" fill="#ffff00"/></svg>
<svg style="left:1136px;top:119px" width="8" height="5"><path d="M0.5 0.5 L3.5 3.5 L6.5 0.5" fill="none" stroke="#444" stroke-width="1.2"/></svg>
<div class="t" style="left:1154.00px;top:110.33px;font-size:14px;color:#444;-webkit-text-stroke:0.2px #444;">A</div>
<div style="left:1153px;top:124px;width:16px;height:4px;background:#ff0000;"></div>
<svg style="left:1175px;top:119px" width="8" height="5"><path d="M0.5 0.5 L3.5 3.5 L6.5 0.5" fill="none" stroke="#444" stroke-width="1.2"/></svg>
<div class="t" style="left:1058.00px;top:145.69px;font-size:12.5px;color:#444;transform:scaleX(0.9595);transform-origin:0 0;-webkit-text-stroke:0.25px #444;">Font</div>
<svg style="left:1183px;top:148px" width="9" height="9"><path d="M0.5 3 V0.5 H8.5 V8.5 H6 M2.5 2.5 L7 7 M7 4 V7 H4" fill="none" stroke="#666" stroke-width="1"/></svg>
<div style="left:1195px;top:68px;width:1px;height:88px;background:#c8c6c4;"></div>
<svg style="left:1207px;top:80px" width="16" height="11.5"><rect x="0" y="0.0" width="15" height="1.2" fill="#555"/><rect x="0" y="3.5" width="15" height="1.2" fill="#555"/><rect x="0" y="7.0" width="15" height="1.2" fill="#555"/></svg>
<svg style="left:1231px;top:83px" width="16" height="11.5"><rect x="0" y="0.0" width="15" height="1.2" fill="#555"/><rect x="0" y="3.5" width="15" height="1.2" fill="#555"/><rect x="0" y="7.0" width="15" height="1.2" fill="#555"/></svg>
<div style="left:1251px;top:77px;width:22px;height:23px;background:#c8c6c4;"></div>
<div style="left:1251px;top:77px;width:22px;height:23px;border:1px solid #a19f9d;"></div>
<svg style="left:1255px;top:88px" width="16" height="11.5"><rect x="0" y="0.0" width="15" height="1.2" fill="#555"/><rect x="0" y="3.5" width="15" height="1.2" fill="#555"/><rect x="0" y="7.0" width="15" height="1.2" fill="#555"/></svg>
<svg style="left:1279px;top:79px" width="21" height="16"><text x="1" y="10" font-size="10" fill="#555" font-family="Liberation Sans" transform="rotate(-30 8 8)">ab</text><path d="M7 14 L18 3 M15 3 H18 V6" fill="none" stroke="#555" stroke-width="1.2"/></svg>
<svg style="left:1299px;top:86px" width="8" height="5"><path d="M0.5 0.5 L3.5 3.5 L6.5 0.5" fill="none" stroke="#444" stroke-width="1.2"/></svg>
<div style="left:1326px;top:72px;width:1px;height:28px;background:#c8c6c4;"></div>
<svg style="left:1335px;top:78px" width="15" height="18"><text x="0" y="8" font-size="9" fill="#444" font-family="Liberation Sans">ab</text><text x="0" y="17" font-size="9" fill="#444" font-family="Liberation Sans">c</text><path d="M13 11 V14 H7 M9 12 L7 14 L9 16" fill="none" stroke="#2e75b6" stroke-width="1"/></svg>
<svg style="left:1207px;top:115px" width="16" height="13"><rect x="0" y="0" width="15" height="1.2" fill="#555"/><rect x="0" y="3" width="10" height="1.2" fill="#555"/><rect x="0" y="6" width="15" height="1.2" fill="#555"/><rect x="0" y="9" width="10" height="1.2" fill="#555"/></svg>
<svg style="left:1231px;top:115px" width="16" height="13"><rect x="0.0" y="0" width="15" height="1.2" fill="#555"/><rect x="2.5" y="3" width="10" height="1.2" fill="#555"/><rect x="0.0" y="6" width="15" height="1.2" fill="#555"/><rect x="2.5" y="9" width="10" height="1.2" fill="#555"/></svg>
<svg style="left:1255px;top:115px" width="16" height="13"><rect x="0" y="0" width="15" height="1.2" fill="#555"/><rect x="5" y="3" width="10" height="1.2" fill="#555"/><rect x="0" y="6" width="15" height="1.2" fill="#555"/><rect x="5" y="9" width="10" height="1.2" fill="#555"/></svg>
<svg style="left:1279px;top:114px" width="17" height="13"><rect x="0" y="0" width="16" height="1.2" fill="#555"/><rect x="7" y="4" width="9" height="1.2" fill="#555"/><rect x="7" y="8" width="9" height="1.2" fill="#555"/><rect x="0" y="12" width="16" height="1.2" fill="#555"/><path d="M5 4.5 L1.5 6.5 L5 8.5" fill="#2e75b6" stroke="#2e75b6"/></svg>
<svg style="left:1303px;top:114px" width="17" height="13"><rect x="0" y="0" width="16" height="1.2" fill="#555"/><rect x="7" y="4" width="9" height="1.2" fill="#555"/><rect x="7" y="8" width="9" height="1.2" fill="#555"/><rect x="0" y="12" width="16" height="1.2" fill="#555"/><path d="M1.5 4.5 L5 6.5 L1.5 8.5" fill="#2e75b6" stroke="#2e75b6"/></svg>
<svg style="left:1334px;top:112px" width="16" height="16"><rect x="0.5" y="0.5" width="14" height="14" fill="none" stroke="#555"/><line x1="0.5" y1="4.5" x2="14.5" y2="4.5" stroke="#555"/><line x1="0.5" y1="10.5" x2="14.5" y2="10.5" stroke="#555"/><line x1="7.5" y1="0.5" x2="7.5" y2="4.5" stroke="#555"/><line x1="7.5" y1="10.5" x2="7.5" y2="14.5" stroke="#555"/><path d="M3 7.5 H12 M5 6 L3 7.5 L5 9 M10 6 L12 7.5 L10 9" fill="none" stroke="#555"/></svg>
<svg style="left:1355px;top:119px" width="8" height="5"><path d="M0.5 0.5 L3.5 3.5 L6.5 0.5" fill="none" stroke="#444" stroke-width="1.2"/></svg>
<div class="t" style="left:1251.00px;top:145.69px;font-size:12.5px;color:#444;transform:scaleX(0.9355);transform-origin:0 0;-webkit-text-stroke:0.25px #444;">Alignment</div>
<svg style="left:1365px;top:148px" width="9" height="9"><path d="M0.5 3 V0.5 H8.5 V8.5 H6 M2.5 2.5 L7 7 M7 4 V7 H4" fill="none" stroke="#666" stroke-width="1"/></svg>
<div style="left:1376px;top:68px;width:1px;height:88px;background:#c8c6c4;"></div>
<div style="left:1385px;top:69px;width:85px;height:23px;background:#fff;border:1px solid #c8c6c4;"></div>
<div class="t" style="left:1389.00px;top:73.69px;font-size:12.5px;color:#262626;transform:scaleX(0.9520);transform-origin:0 0;-webkit-text-stroke:0.25px #262626;">Custom</div>
<svg style="left:1460px;top:79px" width="7" height="4"><polygon points="0,0 6,0 3,3.5" fill="#555"/></svg>
<svg style="left:1388px;top:96px" width="17" height="17"><rect x="0.5" y="0.5" width="14" height="9" fill="#fff" stroke="#2e75b6"/><circle cx="7.5" cy="5" r="2.5" fill="#2e75b6"/><ellipse cx="10" cy="12" rx="5" ry="1.8" fill="#f0b050"/><ellipse cx="10" cy="15" rx="5" ry="1.8" fill="#f0b050"/></svg>
<svg style="left:1410px;top:102px" width="8" height="5"><path d="M0.5 0.5 L3.5 3.5 L6.5 0.5" fill="none" stroke="#444" stroke-width="1.2"/></svg>
<div class="t" style="left:1428.00px;top:98.23px;font-size:13px;color:#444;-webkit-text-stroke:0.2px #444;">%</div>
<div class="t" style="left:1456.00px;top:95.33px;font-size:14px;color:#444;font-weight:bold;">,</div>
<svg style="left:1387px;top:119px" width="17" height="16"><path d="M1 4.5 H6 M3 2.5 L1 4.5 L3 6.5" fill="none" stroke="#2e75b6" stroke-width="1.1"/><text x="7" y="7" font-size="7.5" fill="#444" font-family="Liberation Sans">.0</text><text x="3" y="15" font-size="7.5" fill="#444" font-family="Liberation Sans">.00</text></svg>
<svg style="left:1411px;top:119px" width="17" height="16"><text x="3" y="7" font-size="7.5" fill="#444" font-family="Liberation Sans">.00</text><path d="M1 12.5 H6 M4 10.5 L6 12.5 L4 14.5" fill="none" stroke="#2e75b6" stroke-width="1.1"/><text x="7" y="15" font-size="7.5" fill="#444" font-family="Liberation Sans">.0</text></svg>
<div class="t" style="left:1399.00px;top:145.69px;font-size:12.5px;color:#444;transform:scaleX(0.8997);transform-origin:0 0;-webkit-text-stroke:0.25px #444;">Number</div>
<svg style="left:1466px;top:148px" width="9" height="9"><path d="M0.5 3 V0.5 H8.5 V8.5 H6 M2.5 2.5 L7 7 M7 4 V7 H4" fill="none" stroke="#666" stroke-width="1"/></svg>
<div style="left:1477px;top:68px;width:1px;height:88px;background:#c8c6c4;"></div>
<svg style="left:1489px;top:71px" width="17" height="17"><rect x="0.5" y="0.5" width="13" height="13" fill="#fff" stroke="#737373"/><rect x="0.5" y="0.5" width="6" height="4" fill="#c0504d"/><rect x="7" y="0.5" width="6.5" height="4" fill="#4f81bd"/><rect x="5.5" y="7.5" width="11" height="9" fill="#fff" stroke="#555"/><path d="M8 10.5 H14 M8 13.5 H14 M12.5 9 L9.5 15" stroke="#555"/></svg>
<div class="t" style="left:1508.50px;top:73.69px;font-size:12.5px;color:#262626;transform:scaleX(0.9780);transform-origin:0 0;-webkit-text-stroke:0.25px #262626;">Conditional Formatting</div>
<svg style="left:1635px;top:80px" width="8" height="5"><path d="M0.5 0.5 L3.5 3.5 L6.5 0.5" fill="none" stroke="#444" stroke-width="1.2"/></svg>
<svg style="left:1489px;top:94px" width="17" height="17"><rect x="0.5" y="0.5" width="13" height="13" fill="#fff" stroke="#737373"/><line x1="0.5" y1="4.5" x2="13.5" y2="4.5" stroke="#737373"/><line x1="0.5" y1="8.5" x2="13.5" y2="8.5" stroke="#737373"/><line x1="5" y1="0.5" x2="5" y2="13.5" stroke="#737373"/><path d="M6 16 L15 6" stroke="#2e75b6" stroke-width="2.5"/></svg>
<div class="t" style="left:1508.50px;top:96.69px;font-size:12.5px;color:#262626;transform:scaleX(0.9173);transform-origin:0 0;-webkit-text-stroke:0.25px #262626;">Format as Table</div>
<svg style="left:1593px;top:103px" width="8" height="5"><path d="M0.5 0.5 L3.5 3.5 L6.5 0.5" fill="none" stroke="#444" stroke-width="1.2"/></svg>
<svg style="left:1489px;top:117px" width="17" height="17"><rect x="0.5" y="0.5" width="13" height="13" fill="#fff" stroke="#737373"/><rect x="2" y="2" width="10" height="8" fill="#bdd7ee"/><path d="M6 16 L15 6" stroke="#2e75b6" stroke-width="2.5"/></svg>
<div class="t" style="left:1508.50px;top:119.69px;font-size:12.5px;color:#262626;transform:scaleX(0.8976);transform-origin:0 0;-webkit-text-stroke:0.25px #262626;">Cell Styles</div>
<svg style="left:1565px;top:126px" width="8" height="5"><path d="M0.5 0.5 L3.5 3.5 L6.5 0.5" fill="none" stroke="#444" stroke-width="1.2"/></svg>
<div class="t" style="left:1553.00px;top:145.69px;font-size:12.5px;color:#444;transform:scaleX(0.8519);transform-origin:0 0;-webkit-text-stroke:0.25px #444;">Styles</div>
<div style="left:1657px;top:68px;width:1px;height:88px;background:#c8c6c4;"></div>
<svg style="left:1668px;top:71px" width="18" height="16"><rect x="0.5" y="0.5" width="6" height="4" fill="none" stroke="#b8b8b8"/><rect x="0.5" y="5.5" width="6" height="4" fill="none" stroke="#b8b8b8"/><rect x="0.5" y="10.5" width="6" height="4" fill="none" stroke="#b8b8b8"/><rect x="7.5" y="4.5" width="9" height="5" fill="none" stroke="#b8b8b8"/><path d="M3 7.5 H11" stroke="#b8b8b8"/></svg>
<div class="t" style="left:1688.00px;top:73.69px;font-size:12.5px;color:#a6a6a6;transform:scaleX(0.9116);transform-origin:0 0;-webkit-text-stroke:0.25px #a6a6a6;">Insert</div>
<svg style="left:1727px;top:80px" width="8" height="5"><path d="M0.5 0.5 L3.5 3.5 L6.5 0.5" fill="none" stroke="#888" stroke-width="1.2"/></svg>
<svg style="left:1668px;top:94px" width="18" height="16"><rect x="0.5" y="0.5" width="6" height="4" fill="none" stroke="#737373"/><rect x="0.5" y="5.5" width="6" height="4" fill="none" stroke="#737373"/><rect x="0.5" y="10.5" width="6" height="4" fill="none" stroke="#737373"/><rect x="3.5" y="10.5" width="6" height="4" fill="none" stroke="#737373"/><path d="M10 2 L16 8 M16 2 L10 8" stroke="#e04040" stroke-width="1.4"/></svg>
<div class="t" style="left:1688.00px;top:96.69px;font-size:12.5px;color:#262626;transform:scaleX(0.9133);transform-origin:0 0;-webkit-text-stroke:0.25px #262626;">Delete</div>
<svg style="left:1732px;top:103px" width="8" height="5"><path d="M0.5 0.5 L3.5 3.5 L6.5 0.5" fill="none" stroke="#444" stroke-width="1.2"/></svg>
<svg style="left:1668px;top:117px" width="18" height="17"><rect x="0.5" y="3.5" width="15" height="12" fill="none" stroke="#737373"/><line x1="0.5" y1="7.5" x2="15.5" y2="7.5" stroke="#737373"/><line x1="0.5" y1="11.5" x2="15.5" y2="11.5" stroke="#737373"/><line x1="5.5" y1="3.5" x2="5.5" y2="15.5" stroke="#737373"/><line x1="10.5" y1="3.5" x2="10.5" y2="15.5" stroke="#737373"/><rect x="5.5" y="7.5" width="5" height="4" fill="#2e75b6"/><path d="M1 1 H15" stroke="#2e75b6" stroke-dasharray="2 1"/></svg>
<div class="t" style="left:1688.00px;top:119.69px;font-size:12.5px;color:#262626;transform:scaleX(0.9599);transform-origin:0 0;-webkit-text-stroke:0.25px #262626;">Format</div>
<svg style="left:1730px;top:126px" width="8" height="5"><path d="M0.5 0.5 L3.5 3.5 L6.5 0.5" fill="none" stroke="#444" stroke-width="1.2"/></svg>
<div class="t" style="left:1692.00px;top:145.69px;font-size:12.5px;color:#444;transform:scaleX(0.8638);transform-origin:0 0;-webkit-text-stroke:0.25px #444;">Cells</div>
<div style="left:1751px;top:68px;width:1px;height:88px;background:#c8c6c4;"></div>
<svg style="left:1763px;top:71px" width="16" height="16"><path d="M14 3 V1 H1 L7.5 7.5 L1 14 H14 V12" fill="none" stroke="#444" stroke-width="1.8"/></svg>
<svg style="left:1785px;top:78px" width="8" height="5"><path d="M0.5 0.5 L3.5 3.5 L6.5 0.5" fill="none" stroke="#444" stroke-width="1.2"/></svg>
<svg style="left:1801px;top:71px" width="18" height="18"><text x="0" y="8" font-size="8" fill="#2e75b6" font-family="Liberation Sans">A</text><text x="0" y="17" font-size="8" fill="#7030a0" font-family="Liberation Sans">Z</text><path d="M8 7 H16 L13 10 V14 L11 13 V10 Z" fill="#444"/></svg>
<svg style="left:1821px;top:78px" width="8" height="5"><path d="M0.5 0.5 L3.5 3.5 L6.5 0.5" fill="none" stroke="#444" stroke-width="1.2"/></svg>
<svg style="left:1764px;top:94px" width="16" height="17"><rect x="0.5" y="0.5" width="14" height="15" fill="#fff" stroke="#737373"/><rect x="0.5" y="0.5" width="14" height="3" fill="#737373"/><path d="M7.5 5 V13 M4 10 L7.5 13 L11 10" fill="none" stroke="#2e75b6" stroke-width="1.6"/></svg>
<svg style="left:1784px;top:101px" width="8" height="5"><path d="M0.5 0.5 L3.5 3.5 L6.5 0.5" fill="none" stroke="#444" stroke-width="1.2"/></svg>
<svg style="left:1802px;top:95px" width="15" height="15"><circle cx="9" cy="5.5" r="4.5" fill="none" stroke="#2e75b6" stroke-width="1.6"/><line x1="5.5" y1="9" x2="1" y2="13.5" stroke="#2e75b6" stroke-width="2"/></svg>
<svg style="left:1821px;top:101px" width="8" height="5"><path d="M0.5 0.5 L3.5 3.5 L6.5 0.5" fill="none" stroke="#444" stroke-width="1.2"/></svg>
<svg style="left:1764px;top:117px" width="14" height="13"><path d="M1 9 L8 2 L13 7 L6 12 Z" fill="#f08080"/><path d="M1 9 L4 12 L6 12" fill="#e06060"/></svg>
<svg style="left:1784px;top:124px" width="8" height="5"><path d="M0.5 0.5 L3.5 3.5 L6.5 0.5" fill="none" stroke="#444" stroke-width="1.2"/></svg>
<div class="t" style="left:1777.75px;top:145.69px;font-size:12.5px;color:#444;transform:scaleX(0.9550);transform-origin:0 0;-webkit-text-stroke:0.25px #444;">Editing</div>
<div style="left:1841px;top:68px;width:1px;height:88px;background:#c8c6c4;"></div>
<svg style="left:1893px;top:150px" width="12" height="8"><path d="M1 6.5 L5.5 2 L10 6.5" fill="none" stroke="#444" stroke-width="1.3"/></svg>
<div style="left:866px;top:162px;width:1046px;height:1px;background:#e6dc94;"></div>
<div style="left:866px;top:190px;width:1046px;height:1px;background:#ddd59a;"></div>
<svg style="left:877px;top:167px" width="20" height="22"><path d="M10 1 L18.5 4 V11 C18.5 16 14 19.5 10 21 C6 19.5 1.5 16 1.5 11 V4 Z" fill="#d4b06a" stroke="#c8a050"/><rect x="9" y="5.5" width="2.2" height="8" fill="#3a3a3a"/><rect x="9" y="15.5" width="2.2" height="2.2" fill="#3a3a3a"/></svg>
<div class="t" style="left:907.00px;top:169.69px;font-size:12.5px;color:#333;transform:scaleX(0.8940);transform-origin:0 0;-webkit-text-stroke:0.25px #333;">SECURITY WARNING</div>
<div class="t" style="left:1030.50px;top:169.69px;font-size:12.5px;color:#333;transform:scaleX(0.9525);transform-origin:0 0;-webkit-text-stroke:0.25px #333;">Automatic update of links has been disabled</div>
<div style="left:1286px;top:165px;width:113px;height:22px;background:#fff;border:1px solid #c8c6c4;"></div>
<div class="t" style="left:1302.00px;top:169.69px;font-size:12.5px;color:#333;transform:scaleX(0.9399);transform-origin:0 0;-webkit-text-stroke:0.25px #333;">Enable Content</div>
<svg style="left:1892px;top:171px" width="10" height="10"><path d="M1 1 L9 9 M9 1 L1 9" stroke="#444" stroke-width="1.8"/></svg>
<div style="left:873px;top:201px;width:100px;height:26px;background:#fff;border:1px solid #d2d0ce;"></div>
<div class="t" style="left:880.00px;top:208.24px;font-size:13px;color:#262626;transform:scaleX(0.9500);transform-origin:0 0;">G655</div>
<svg style="left:960px;top:211.5px" width="8" height="5"><polygon points="0,0 7,0 3.5,4" fill="#666"/></svg>
<div style="left:988px;top:208.0px;width:2px;height:2px;background:#a0a0a0;"></div>
<div style="left:988px;top:213.0px;width:2px;height:2px;background:#a0a0a0;"></div>
<div style="left:988px;top:218.0px;width:2px;height:2px;background:#a0a0a0;"></div>
<div style="left:1004px;top:201px;width:109px;height:26px;background:#fff;border:1px solid #d2d0ce;"></div>
<svg style="left:1018px;top:209.0px" width="11" height="11"><path d="M0.5 0.5 L9.5 9.5 M9.5 0.5 L0.5 9.5" stroke="#a6a6a6" stroke-width="1.3"/></svg>
<svg style="left:1052px;top:209.0px" width="14" height="11"><path d="M0.5 5.5 L4.5 9.5 L12.5 0.5" fill="none" stroke="#a6a6a6" stroke-width="1.6"/></svg>
<div class="t" style="left:1089.00px;top:207.24px;font-size:13px;color:#555;font-style:italic;font-family:\"Liberation Serif\",serif;">fx</div>
<div style="left:1118px;top:201px;width:788px;height:26px;background:#fff;border:1px solid #d2d0ce;"></div>
<div class="t" style="left:1130.00px;top:207.74px;font-size:13px;color:#262626;transform:scaleX(0.9700);transform-origin:0 0;">7020692</div>
<svg style="left:1893px;top:211.0px" width="9" height="6"><path d="M0.5 0.5 L4 4 L7.5 0.5" fill="none" stroke="#555" stroke-width="1.3"/></svg>
<div style="left:1px;top:921px;width:863px;height:29px;background:#e6e6e6;"></div>
<div style="left:1px;top:921px;width:863px;height:1px;background:#c6c6c6;"></div>
<svg style="left:28px;top:931px" width="6" height="8"><polygon points="5,0 5,7 0.5,3.5" fill="#c0c0c0"/></svg>
<svg style="left:56px;top:931px" width="6" height="8"><polygon points="0,0 0,7 4.5,3.5" fill="#c0c0c0"/></svg>
<div style="left:102px;top:921px;width:172px;height:25px;background:linear-gradient(180deg,#ffffff 0%,#ffffff 45%,#e2efd9 100%);"></div>
<div style="left:102px;top:944px;width:172px;height:2px;background:#217346;"></div>
<div style="left:101px;top:921px;width:1px;height:25px;background:#c6c6c6;"></div>
<div style="left:274px;top:921px;width:1px;height:25px;background:#c6c6c6;"></div>
<div class="t" style="left:114.00px;top:927.19px;font-size:12.5px;color:#217346;font-weight:bold;transform:scaleX(1.0222);transform-origin:0 0;">Detail JV Koreksi VS FM</div>
<div style="left:275px;top:924px;width:36px;height:21px;background:#ffff00;"></div>
<div class="t" style="left:285.25px;top:927.19px;font-size:12.5px;color:#262626;transform:scaleX(0.8829);transform-origin:0 0;-webkit-text-stroke:0.15px #262626;">B2</div>
<div style="left:312px;top:924px;width:1px;height:21px;background:#c6c6c6;"></div>
<div style="left:315px;top:924px;width:106px;height:21px;background:#ffc000;"></div>
<div class="t" style="left:327.50px;top:927.19px;font-size:12.5px;color:#262626;transform:scaleX(1.0227);transform-origin:0 0;-webkit-text-stroke:0.15px #262626;">Jurnal Koreksi</div>
<div style="left:423px;top:924px;width:1px;height:21px;background:#c6c6c6;"></div>
<div style="left:426px;top:924px;width:124px;height:21px;background:#ffc000;"></div>
<div class="t" style="left:438.50px;top:927.19px;font-size:12.5px;color:#262626;transform:scaleX(1.0297);transform-origin:0 0;-webkit-text-stroke:0.15px #262626;">Detail JV Koreksi</div>
<div style="left:551px;top:924px;width:1px;height:21px;background:#c6c6c6;"></div>
<svg style="left:584px;top:927px" width="18" height="18"><circle cx="8.5" cy="8.5" r="7.5" fill="none" stroke="#777" stroke-width="1.3"/><path d="M8.5 4.5 V12.5 M4.5 8.5 H12.5" stroke="#777" stroke-width="1.4"/></svg>
<div style="left:806px;top:930px;width:2px;height:2px;background:#a0a0a0;"></div>
<div style="left:806px;top:934px;width:2px;height:2px;background:#a0a0a0;"></div>
<div style="left:806px;top:938px;width:2px;height:2px;background:#a0a0a0;"></div>
<svg style="left:823px;top:928px" width="19" height="14"><rect x="0.5" y="0.5" width="17" height="12" fill="#fff" stroke="#c6c6c6"/><polygon points="7,3 7,10 3,6.5" fill="#444"/><polygon points="11,3 11,10 15,6.5" fill="#444"/><line x1="9" y1="1" x2="9" y2="12" stroke="#c6c6c6"/></svg>
<div style="left:1px;top:950px;width:863px;height:20px;background:#f3f3f3;"></div>
<div style="left:1px;top:949px;width:863px;height:1px;background:#d4d4d4;"></div>
<div class="t" style="left:8.50px;top:953.69px;font-size:12.5px;color:#444;transform:scaleX(0.8922);transform-origin:0 0;-webkit-text-stroke:0.25px #444;">Select destination and press ENTER or choose P...</div>
<div class="t" style="left:283.00px;top:953.19px;font-size:12.5px;color:#444;transform:scaleX(0.8677);transform-origin:0 0;-webkit-text-stroke:0.25px #444;">Average:  2.649.852</div>
<div class="t" style="left:397.00px;top:953.19px;font-size:12.5px;color:#444;transform:scaleX(0.9100);transform-origin:0 0;-webkit-text-stroke:0.25px #444;">Count: 3</div>
<div class="t" style="left:457.00px;top:953.19px;font-size:12.5px;color:#444;transform:scaleX(0.8612);transform-origin:0 0;-webkit-text-stroke:0.25px #444;">Sum:  7.949.555</div>
<div style="left:554px;top:950px;width:40px;height:20px;background:#d2d0ce;"></div>
<svg style="left:567px;top:953px" width="14" height="14"><rect x="0.5" y="0.5" width="12" height="12" fill="none" stroke="#555"/><path d="M4.5 0.5 V12.5 M8.5 0.5 V12.5 M0.5 4.5 H12.5 M0.5 8.5 H12.5" stroke="#555"/></svg>
<svg style="left:607px;top:953px" width="15" height="14"><rect x="0.5" y="0.5" width="13" height="12" fill="none" stroke="#555"/><rect x="3.5" y="3.5" width="7" height="6" fill="none" stroke="#555"/><path d="M4.5 5.5 H9.5 M4.5 7.5 H9.5" stroke="#555"/></svg>
<svg style="left:647px;top:953px" width="15" height="14"><rect x="0.5" y="0.5" width="13" height="12" fill="none" stroke="#555"/><path d="M4.5 0.5 V5.5 H9.5 V0.5" fill="none" stroke="#555"/></svg>
<div style="left:680px;top:960px;width:7px;height:1px;background:#555;"></div>
<div style="left:694px;top:960px;width:98px;height:1px;background:#b0b0b0;"></div>
<div style="left:741px;top:955px;width:5px;height:11px;background:#666;"></div>
<div style="left:796px;top:960px;width:9px;height:1px;background:#555;"></div>
<div style="left:800px;top:956px;width:1px;height:9px;background:#555;"></div>
<div class="t" style="left:819.00px;top:953.69px;font-size:12.5px;color:#444;transform:scaleX(0.8132);transform-origin:0 0;-webkit-text-stroke:0.25px #444;">100%</div>
<div style="left:843px;top:229px;width:21px;height:692px;background:#dcdcdc;"></div>
<div style="left:847px;top:211px;width:15px;height:15px;background:#fff;border:1px solid #c6c6c6;"></div>
<svg style="left:851px;top:216px" width="8" height="5"><polygon points="0,4.5 7,4.5 3.5,0" fill="#555"/></svg>
<div style="left:847px;top:246px;width:15px;height:27px;background:#fff;border:1px solid #c6c6c6;"></div>
<div style="left:847px;top:905px;width:15px;height:15px;background:#fff;border:1px solid #c6c6c6;"></div>
<svg style="left:851px;top:910px" width="8" height="5"><polygon points="0,0 7,0 3.5,4.5" fill="#555"/></svg>
<div style="left:575px;top:670px;width:24px;height:24px;background:#fff;border:1px solid #8a8a8a;"></div>
<svg style="left:579px;top:674px" width="17" height="17"><rect x="3.5" y="3.5" width="11" height="11" fill="#fff" stroke="#555"/><path d="M5.5 7.5 H12.5 M5.5 10.5 H12.5" stroke="#2e75b6" stroke-width="1.5"/><path d="M4 1 L1 6 H4 L2 10" fill="none" stroke="#ed7d31" stroke-width="1.3"/></svg>
<div style="left:867px;top:988px;width:1044px;height:27px;background:#e6e6e6;"></div>
<div style="left:867px;top:988px;width:1044px;height:1px;background:#c6c6c6;"></div>
<svg style="left:894px;top:998px" width="6" height="9"><polygon points="5,0 5,8 0.5,4" fill="#217346"/></svg>
<svg style="left:922px;top:998px" width="6" height="9"><polygon points="0,0 0,8 4.5,4" fill="#217346"/></svg>
<div class="t" style="left:948.00px;top:995.69px;font-size:12.5px;color:#262626;transform:scaleX(0.9599);transform-origin:0 0;-webkit-text-stroke:0.25px #262626;">...</div>
<div style="left:967px;top:992px;width:1px;height:21px;background:#c6c6c6;"></div>
<div style="left:969px;top:992px;width:37px;height:22px;background:#ffff00;"></div>
<div style="left:1007px;top:992px;width:1px;height:21px;background:#c6c6c6;"></div>
<div class="t" style="left:979.70px;top:995.69px;font-size:12.5px;color:#262626;transform:scaleX(1.0200);transform-origin:0 0;-webkit-text-stroke:0.15px #262626;">A1</div>
<div style="left:1010px;top:992px;width:77px;height:22px;background:#ffff00;"></div>
<div style="left:1088px;top:992px;width:1px;height:21px;background:#c6c6c6;"></div>
<div class="t" style="left:1022.98px;top:995.69px;font-size:12.5px;color:#262626;transform:scaleX(1.0200);transform-origin:0 0;-webkit-text-stroke:0.15px #262626;">Detail A1</div>
<div style="left:1091px;top:992px;width:61px;height:22px;background:#ffff00;"></div>
<div style="left:1153px;top:992px;width:1px;height:21px;background:#c6c6c6;"></div>
<div class="t" style="left:1101.29px;top:995.69px;font-size:12.5px;color:#262626;transform:scaleX(1.0200);transform-origin:0 0;-webkit-text-stroke:0.15px #262626;">Sheet1</div>
<div style="left:1156px;top:992px;width:36px;height:22px;background:#ffff00;"></div>
<div style="left:1193px;top:992px;width:1px;height:21px;background:#c6c6c6;"></div>
<div class="t" style="left:1166.20px;top:995.69px;font-size:12.5px;color:#262626;transform:scaleX(1.0200);transform-origin:0 0;-webkit-text-stroke:0.15px #262626;">A2</div>
<div style="left:1196px;top:992px;width:35px;height:22px;background:#ffff00;"></div>
<div style="left:1232px;top:992px;width:1px;height:21px;background:#c6c6c6;"></div>
<div class="t" style="left:1205.70px;top:995.69px;font-size:12.5px;color:#262626;transform:scaleX(1.0200);transform-origin:0 0;-webkit-text-stroke:0.15px #262626;">B1</div>
<div style="left:1232px;top:989px;width:40px;height:25px;background:linear-gradient(180deg,#ffffff 0%,#ffffff 50%,#fbf8d8 100%);"></div>
<div style="left:1232px;top:1012px;width:40px;height:2px;background:#217346;"></div>
<div class="t" style="left:1244.30px;top:995.69px;font-size:12.5px;color:#217346;font-weight:bold;transform:scaleX(1.3768);transform-origin:0 0;">B2</div>
<div style="left:1273px;top:992px;width:56px;height:22px;background:#ffff00;"></div>
<div style="left:1330px;top:992px;width:1px;height:21px;background:#c6c6c6;"></div>
<div class="t" style="left:1286.48px;top:995.69px;font-size:12.5px;color:#262626;transform:scaleX(1.0200);transform-origin:0 0;-webkit-text-stroke:0.15px #262626;">list bj</div>
<div style="left:1332px;top:992px;width:36px;height:22px;background:#ffff00;"></div>
<div style="left:1369px;top:992px;width:1px;height:21px;background:#c6c6c6;"></div>
<div class="t" style="left:1342.20px;top:995.69px;font-size:12.5px;color:#262626;transform:scaleX(1.0200);transform-origin:0 0;-webkit-text-stroke:0.15px #262626;">B3</div>
<div class="t" style="left:1383.50px;top:995.69px;font-size:12.5px;color:#666;transform:scaleX(0.9450);transform-origin:0 0;-webkit-text-stroke:0.25px #666;">Akt Fisk</div>
<div style="left:1420px;top:994px;width:8px;height:18px;background:#e6e6e6;"></div>
<div class="t" style="left:1434.00px;top:995.69px;font-size:12.5px;color:#262626;transform:scaleX(0.9599);transform-origin:0 0;-webkit-text-stroke:0.25px #262626;">...</div>
<svg style="left:1458px;top:994px" width="18" height="18"><circle cx="8.5" cy="8.5" r="7.5" fill="none" stroke="#777" stroke-width="1.3"/><path d="M8.5 4.5 V12.5 M4.5 8.5 H12.5" stroke="#777" stroke-width="1.4"/></svg>
<div style="left:1494px;top:998px;width:2px;height:2px;background:#a0a0a0;"></div>
<div style="left:1494px;top:1002px;width:2px;height:2px;background:#a0a0a0;"></div>
<div style="left:1494px;top:1006px;width:2px;height:2px;background:#a0a0a0;"></div>
<div style="left:1511px;top:994px;width:377px;height:17px;background:#dadada;border:1px solid #c6c6c6;"></div>
<div style="left:1511px;top:994px;width:14px;height:17px;background:#fff;border:1px solid #c6c6c6;"></div>
<svg style="left:1515px;top:998px" width="6" height="9"><polygon points="5,0 5,8 0.5,4" fill="#555"/></svg>
<div style="left:1525px;top:995px;width:102px;height:15px;background:#fff;border:1px solid #c6c6c6;"></div>
<div style="left:1873px;top:994px;width:15px;height:17px;background:#fff;border:1px solid #c6c6c6;"></div>
<svg style="left:1878px;top:998px" width="6" height="9"><polygon points="0,0 0,8 4.5,4" fill="#555"/></svg>
<div style="left:867px;top:1017px;width:1044px;height:23px;background:#f3f3f3;"></div>
<div style="left:867px;top:1016px;width:1044px;height:1px;background:#d4d4d4;"></div>
<div class="t" style="left:874.50px;top:1020.69px;font-size:12.5px;color:#444;transform:scaleX(0.8898);transform-origin:0 0;-webkit-text-stroke:0.25px #444;">Select destination and press ENTER or choose Paste</div>
<div style="left:1601px;top:1016px;width:39px;height:22px;background:#d2d0ce;"></div>
<svg style="left:1614px;top:1021px" width="14" height="14"><rect x="0.5" y="0.5" width="12" height="12" fill="none" stroke="#555"/><path d="M4.5 0.5 V12.5 M8.5 0.5 V12.5 M0.5 4.5 H12.5 M0.5 8.5 H12.5" stroke="#555"/></svg>
<svg style="left:1654px;top:1021px" width="15" height="14"><rect x="0.5" y="0.5" width="13" height="12" fill="none" stroke="#555"/><rect x="3.5" y="3.5" width="7" height="6" fill="none" stroke="#555"/><path d="M4.5 5.5 H9.5 M4.5 7.5 H9.5" stroke="#555"/></svg>
<svg style="left:1694px;top:1021px" width="15" height="14"><rect x="0.5" y="0.5" width="13" height="12" fill="none" stroke="#555"/><path d="M4.5 0.5 V5.5 H9.5 V0.5" fill="none" stroke="#555"/></svg>
<div style="left:1727px;top:1028px;width:7px;height:1px;background:#555;"></div>
<div style="left:1741px;top:1028px;width:99px;height:1px;background:#b0b0b0;"></div>
<div style="left:1788px;top:1023px;width:5px;height:11px;background:#666;"></div>
<div style="left:1844px;top:1028px;width:9px;height:1px;background:#555;"></div>
<div style="left:1848px;top:1024px;width:1px;height:9px;background:#555;"></div>
<div class="t" style="left:1866.00px;top:1021.69px;font-size:12.5px;color:#444;transform:scaleX(0.8132);transform-origin:0 0;-webkit-text-stroke:0.25px #444;">100%</div>
<div style="left:1891px;top:257px;width:20px;height:718px;background:#dcdcdc;"></div>
<div style="left:1892px;top:240px;width:16px;height:14px;background:#fff;border:1px solid #c6c6c6;"></div>
<svg style="left:1896px;top:245px" width="8" height="5"><polygon points="0,4.5 7,4.5 3.5,0" fill="#555"/></svg>
<div style="left:1892px;top:254px;width:16px;height:17px;background:#fff;border:1px solid #c6c6c6;"></div>
<div style="left:1892px;top:975px;width:16px;height:13px;background:#fff;border:1px solid #c6c6c6;"></div>
<svg style="left:1896px;top:979px" width="8" height="5"><polygon points="0,0 7,0 3.5,4.5" fill="#555"/></svg>
<svg style="left:16px;top:1053px" width="16" height="15"><path d="M0 2 L6.5 1.1 V7 H0Z M7.5 1 L16 0 V7 H7.5Z M0 8 H6.5 V13.9 L0 13Z M7.5 8 H16 V15 L7.5 14Z" fill="#fff"/></svg>
<svg style="left:63px;top:1052px" width="19" height="17"><rect x="3.5" y="3.5" width="10" height="9" fill="none" stroke="#fff" stroke-width="1.2"/><path d="M1 1 H16 M1 15.5 H16 M16.5 4 V12" stroke="#fff" stroke-width="1.2"/></svg>
<svg style="left:110px;top:1051px" width="26" height="20"><path d="M0 7 L13 0 L26 7 V20 H0Z" fill="#0f6cbd"/><path d="M0 7 L13 14 L26 7 V20 H0Z" fill="#2c9de8"/><path d="M3 5 H23 V9 L13 14 L3 9Z" fill="#fff"/></svg>
<svg style="left:159px;top:1049px" width="24" height="24"><path d="M7 6 V3 A5 3 0 0 1 17 3 V6" fill="none" stroke="#2b9ad8" stroke-width="1.6"/><rect x="0.5" y="6" width="23" height="17" rx="2" fill="#f4f4f4"/><rect x="8" y="10" width="3.6" height="3.6" fill="#f25022"/><rect x="12.4" y="10" width="3.6" height="3.6" fill="#7fba00"/><rect x="8" y="14.4" width="3.6" height="3.6" fill="#00a4ef"/><rect x="12.4" y="14.4" width="3.6" height="3.6" fill="#ffb900"/></svg>
<svg style="left:210px;top:1049px" width="23" height="23"><path d="M11.5 1 C17.5 1 22 5.5 22 11.5 V13 H7 C7.5 16.5 10 18.5 13.5 18.5 C16 18.5 18.5 17.8 20.5 16.5 V20.5 C18.5 21.6 16 22 13 22 C6 22 1.5 17.5 1.5 11.5 C1.5 6 5.5 1 11.5 1Z M7 9 H16.5 C16.3 6.5 14.5 5 12 5 C9.5 5 7.6 6.5 7 9Z" fill="#1e88e5"/></svg>
<svg style="left:258px;top:1048px" width="26" height="26"><circle cx="12" cy="12" r="11.5" fill="#db4437"/><path d="M12 12 L22 17.8 A11.5 11.5 0 0 1 2.1 17.8 Z" fill="#0f9d58"/><path d="M12 12 L2.1 17.8 A11.5 11.5 0 0 1 1.6 6 L12 6Z" fill="#0f9d58"/><path d="M12 12 L22 17.8 A11.5 11.5 0 0 0 22.4 6 L12 6 Z" fill="#ffcd40"/><circle cx="12" cy="12" r="5.5" fill="#fff"/><circle cx="12" cy="12" r="4.3" fill="#4285f4"/><circle cx="19" cy="19" r="6" fill="#8d6e63" stroke="#fff" stroke-width="0.8"/><text x="19" y="22" font-size="8" fill="#fff" text-anchor="middle" font-family="Liberation Sans">D</text></svg>
<div style="left:250px;top:1077px;width:40px;height:3px;background:#76b9ed;"></div>
<svg style="left:306px;top:1049px" width="25" height="25"><path d="M12.5 1 A11.5 11.5 0 1 1 5 21 L1 23 L2.5 18.5 A11.5 11.5 0 0 1 12.5 1Z" fill="none" stroke="#25d366" stroke-width="2.2"/><path d="M8 7 C7 9 8 13 11.5 16 C14 18 16.5 18.5 17.5 17 L16 14.5 L14 15 C12.5 14 11 12.5 10.5 11 L11.5 9.5 L10 7Z" fill="#25d366"/></svg>
<svg style="left:355px;top:1048px" width="26" height="26"><circle cx="13" cy="14" r="11" fill="#ff7139"/><circle cx="13" cy="14" r="6" fill="#7542e5"/><path d="M3 9 C5 3 11 1 16 3 C12 3 9 6 9 9Z" fill="#ffbd4f"/><path d="M2 14 A11 11 0 0 0 24 14 C22 20 15 22 10 19Z" fill="#e31587" opacity="0.6"/></svg>
<svg style="left:404px;top:1050px" width="25" height="22"><path d="M0 2 H9 L11 4 H24 V21 H0Z" fill="#e8b43c"/><path d="M0 7 H24 V21 H0Z" fill="#fcd25a"/><rect x="7" y="13" width="10" height="6" fill="#2b7cd3"/></svg>
<div style="left:397px;top:1077px;width:40px;height:3px;background:#76b9ed;"></div>
<svg style="left:453px;top:1049px" width="24" height="24"><ellipse cx="12" cy="12" rx="11" ry="11.5" fill="#e0101f"/><ellipse cx="12" cy="12" rx="5" ry="8.5" fill="#22241d"/></svg>
<svg style="left:503px;top:1048px" width="26" height="26"><circle cx="12" cy="12" r="11.5" fill="#db4437"/><path d="M12 12 L22 17.8 A11.5 11.5 0 0 1 2.1 17.8 Z" fill="#0f9d58"/><path d="M12 12 L2.1 17.8 A11.5 11.5 0 0 1 1.6 6 L12 6Z" fill="#0f9d58"/><path d="M12 12 L22 17.8 A11.5 11.5 0 0 0 22.4 6 L12 6 Z" fill="#ffcd40"/><circle cx="12" cy="12" r="5.5" fill="#fff"/><circle cx="12" cy="12" r="4.3" fill="#4285f4"/><circle cx="19" cy="19" r="5" fill="#e8c96b" stroke="#fff" stroke-width="0.8"/></svg>
<svg style="left:552px;top:1049px" width="25" height="24"><path d="M2 6 L14 2 L20 18 L8 22Z" fill="#cfd8dc"/><path d="M6 5 L18 4 L21 20 L9 21Z" fill="#eceff1"/><path d="M10 8 L22 9 L20 23 L8 22Z" fill="#b0bec5"/><rect x="13" y="11" width="6" height="2" fill="#37474f"/></svg>
<svg style="left:604px;top:1049px" width="22" height="24"><circle cx="7" cy="6" r="4" fill="none" stroke="#f2c14e" stroke-width="2.5" stroke-dasharray="2 1.3"/><circle cx="15" cy="12" r="4" fill="none" stroke="#4fc3f7" stroke-width="2.5" stroke-dasharray="2 1.3"/><circle cx="7" cy="18" r="4" fill="none" stroke="#8bc34a" stroke-width="2.5" stroke-dasharray="2 1.3"/></svg>
<div style="left:638px;top:1040px;width:49px;height:40px;background:#3c3e36;"></div>
<svg style="left:643px;top:1047px" width="32" height="26"><rect x="8" y="1" width="22" height="24" rx="1.5" fill="#21a366"/><rect x="8" y="9" width="22" height="8" fill="#107c41"/><rect x="19" y="1" width="11" height="8" fill="#33c481"/><rect x="19" y="17" width="11" height="8" fill="#185c37"/><rect x="1" y="6" width="14" height="14" rx="1.5" fill="#107c41"/><path d="M4.5 9 L11.5 17 M11.5 9 L4.5 17" stroke="#fff" stroke-width="2"/></svg>
<div style="left:638px;top:1077px;width:49px;height:3px;background:#76b9ed;"></div>
<svg style="left:1657px;top:1051px" width="17" height="17"><circle cx="6" cy="8" r="3" fill="none" stroke="#fff" stroke-width="1.1"/><path d="M1 16 C1 12 11 12 11 16" fill="none" stroke="#fff" stroke-width="1.1"/><circle cx="12" cy="4.5" r="2.3" fill="none" stroke="#fff" stroke-width="1.1"/><path d="M10 9.5 C13 8.5 16 10 16 13" fill="none" stroke="#fff" stroke-width="1.1"/></svg>
<svg style="left:1695px;top:1056px" width="12" height="8"><path d="M1 7 L6 2 L11 7" fill="none" stroke="#fff" stroke-width="1.3"/></svg>
<svg style="left:1717px;top:1052px" width="17" height="16"><rect x="4.5" y="1.5" width="11" height="8" fill="none" stroke="#fff" stroke-width="1.1"/><path d="M1 5 V14 H7 M10 9.5 V12" fill="none" stroke="#fff" stroke-width="1.1"/><rect x="1" y="12" width="6" height="3" fill="none" stroke="#fff"/></svg>
<svg style="left:1741px;top:1052px" width="17" height="16"><path d="M1 6 H4 L8 2 V14 L4 10 H1Z" fill="none" stroke="#fff" stroke-width="1.1"/><path d="M10.5 5.5 A3.5 3.5 0 0 1 10.5 10.5 M12.5 3.5 A6 6 0 0 1 12.5 12.5" fill="none" stroke="#fff" stroke-width="1.1"/></svg>
<div class="t" style="left:1768.00px;top:1052.69px;font-size:12.5px;color:#ffffff;transform:scaleX(1.0220);transform-origin:0 0;">IND</div>
<div class="t" style="left:1818.25px;top:1043.69px;font-size:12.5px;color:#ffffff;transform:scaleX(0.8791);transform-origin:0 0;">10.10</div>
<div class="t" style="left:1803.00px;top:1061.69px;font-size:12.5px;color:#ffffff;transform:scaleX(0.9431);transform-origin:0 0;">31/01/2026</div>
<svg style="left:1879px;top:1051px" width="18" height="17"><path d="M0.5 0.5 H16.5 V12.5 H6 L2.5 16 V12.5 H0.5Z" fill="none" stroke="#fff" stroke-width="1.1"/><path d="M3 4 H14 M3 7 H14 M3 10 H10" stroke="#fff"/></svg>
<div style="left:1912px;top:0px;width:1px;height:1040px;background:#4a4a4a;"></div>
<div style="left:1px;top:162px;width:863px;height:6px;background:linear-gradient(180deg,#d4d4d4,#e6e6e6);"></div>
<div style="left:867px;top:191px;width:1044px;height:6px;background:linear-gradient(180deg,#d4d4d4,#e6e6e6);"></div>
</body></html>
